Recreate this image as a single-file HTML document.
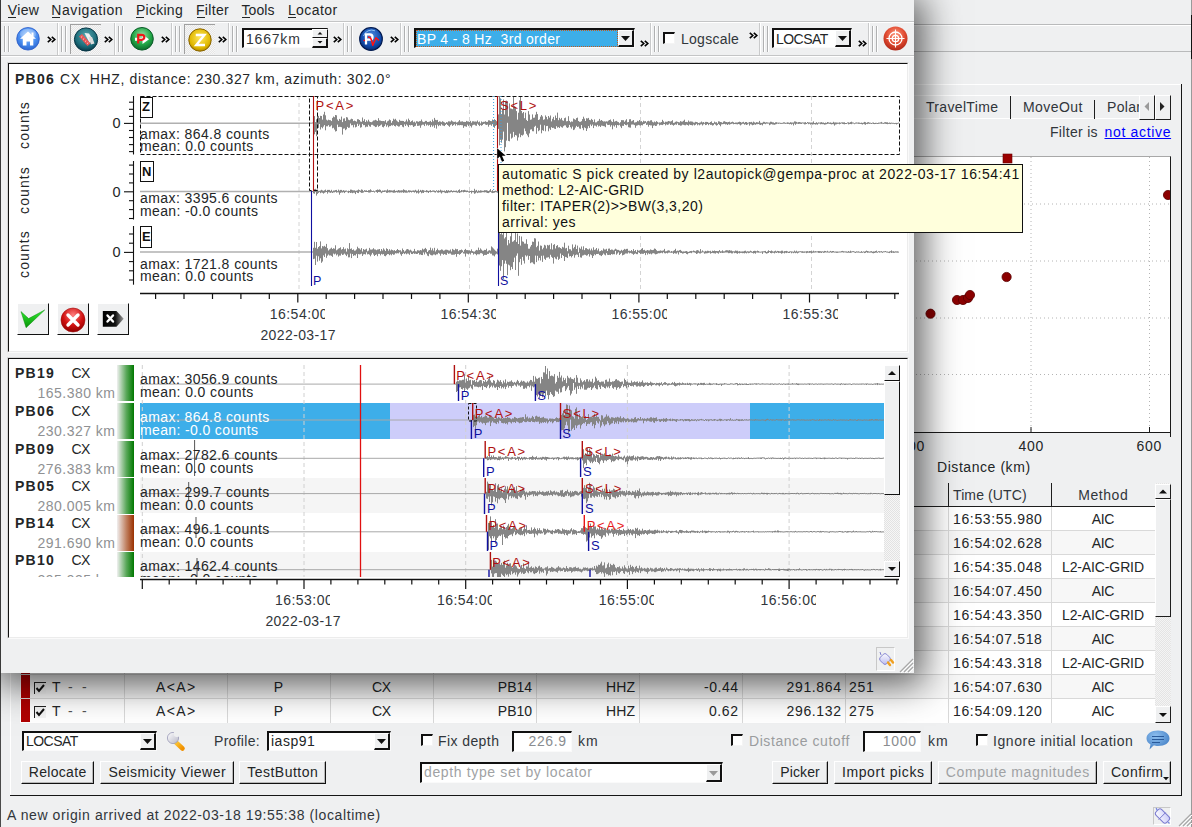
<!DOCTYPE html><html><head><meta charset="utf-8"><style>
html,body{margin:0;padding:0;}
body{width:1192px;height:827px;position:relative;overflow:hidden;background:#eff0f1;font-family:"Liberation Sans",sans-serif;}
.a{position:absolute;box-sizing:border-box;}
.t{position:absolute;white-space:pre;line-height:normal;}
svg{position:absolute;overflow:visible;}
</style></head><body>

<div class="a" style="left:914px;top:24px;width:278px;height:1px;background:#b9babb;"></div>
<div class="a" style="left:914px;top:25px;width:278px;height:1px;background:#ffffff;"></div>
<div class="a" style="left:914px;top:51px;width:278px;height:1px;background:#b9babb;"></div>
<div class="a" style="left:1191px;top:15px;width:1px;height:44px;background:#111;"></div>
<div class="a" style="left:1191px;top:0px;width:1px;height:827px;background:#9a9a9a;"></div>
<div class="a" style="left:1191px;top:15px;width:1px;height:44px;background:#111;"></div>
<div class="a" style="left:10px;top:84px;width:1172px;height:1px;background:#ffffff;"></div>
<div class="a" style="left:10px;top:84px;width:1px;height:712px;background:#ffffff;"></div>
<div class="a" style="left:1181px;top:84px;width:1px;height:712px;background:#161616;"></div>
<div class="a" style="left:10px;top:795px;width:1172px;height:1px;background:#161616;"></div>
<div class="a" style="left:914px;top:95px;width:225px;height:1px;background:#ffffff;"></div>
<div class="a" style="left:914px;top:118px;width:225px;height:1px;background:#ffffff;"></div>
<div class="a" style="left:1010px;top:96px;width:1px;height:23px;background:#1e1e1e;"></div>
<div class="a" style="left:1094px;top:100px;width:1px;height:19px;background:#1e1e1e;"></div>
<div class="t" style="left:926px;top:99.33px;font-size:14px;color:#31363b;letter-spacing:0.328px;">TravelTime</div>
<div class="t" style="left:1023px;top:99.33px;font-size:14px;color:#31363b;letter-spacing:0.446px;">MoveOut</div>
<div class="a" style="left:1100px;top:96px;width:39px;height:22px;overflow:hidden;"><div class="t" style="left:7px;top:3.3px;font-size:14px;color:#31363b;letter-spacing:0.3px;">Polar</div></div>
<div class="a" style="left:1139px;top:95px;width:16px;height:25px;background:#eff0f1;border-right:1px solid #1e1e1e;border-bottom:1px solid #1e1e1e;border-top:1px solid #fff;border-left:1px solid #fff;"></div>
<div class="a" style="left:1155px;top:95px;width:16px;height:25px;background:#eff0f1;border-right:1px solid #1e1e1e;border-bottom:1px solid #1e1e1e;border-top:1px solid #fff;border-left:1px solid #fff;"></div>
<svg style="left:1139px;top:95px" width="32" height="25"><path d="M5.5 11.5 L10 7 L10 16 Z" fill="#9a9a9a"/><path d="M21 7 L25.5 11.5 L21 16 Z" fill="#222"/></svg>
<div class="t" style="left:1050px;top:124.33px;font-size:14px;color:#31363b;letter-spacing:0.31px;">Filter is</div>
<div class="t" style="left:1104.5px;top:124.33px;font-size:14px;color:#0000ff;letter-spacing:0.667px;text-decoration:underline;">not active</div>
<div class="a" style="left:20px;top:156px;width:1151px;height:277px;background:#fff;border-top:1px solid #a8a8a8;border-right:1px solid #1a1a1a;"></div>
<div class="a" style="left:20px;top:432px;width:1151px;height:1px;background:#1a1a1a;"></div>
<svg style="left:0;top:0" width="1192" height="827"><line x1="20" y1="204" x2="1170" y2="204" stroke="#b4b4b4" stroke-width="1" stroke-dasharray="1,3"/><line x1="20" y1="261" x2="1170" y2="261" stroke="#b4b4b4" stroke-width="1" stroke-dasharray="1,3"/><line x1="20" y1="318" x2="1170" y2="318" stroke="#b4b4b4" stroke-width="1" stroke-dasharray="1,3"/><line x1="20" y1="374.5" x2="1170" y2="374.5" stroke="#b4b4b4" stroke-width="1" stroke-dasharray="1,3"/><line x1="1031" y1="157" x2="1031" y2="432" stroke="#b4b4b4" stroke-width="1" stroke-dasharray="1,3"/><line x1="1031" y1="427" x2="1031" y2="432" stroke="#1a1a1a" stroke-width="1"/><line x1="1149.5" y1="157" x2="1149.5" y2="432" stroke="#b4b4b4" stroke-width="1" stroke-dasharray="1,3"/><line x1="1149.5" y1="427" x2="1149.5" y2="432" stroke="#1a1a1a" stroke-width="1"/><line x1="1170.5" y1="427" x2="1170.5" y2="437" stroke="#1a1a1a" stroke-width="1"/><defs><clipPath id="plotclip"><rect x="20" y="157" width="1150" height="275"/></clipPath></defs><g clip-path="url(#plotclip)"><circle cx="930.5" cy="313.7" r="4.6" fill="#8b0000" stroke="#5a0000" stroke-width="0.8"/><circle cx="957" cy="300" r="4.6" fill="#8b0000" stroke="#5a0000" stroke-width="0.8"/><circle cx="963" cy="300" r="4.6" fill="#8b0000" stroke="#5a0000" stroke-width="0.8"/><circle cx="968" cy="298" r="4.6" fill="#8b0000" stroke="#5a0000" stroke-width="0.8"/><circle cx="970" cy="295" r="4.6" fill="#8b0000" stroke="#5a0000" stroke-width="0.8"/><circle cx="1006.6" cy="277" r="4.6" fill="#8b0000" stroke="#5a0000" stroke-width="0.8"/><circle cx="1168" cy="195" r="4.6" fill="#8b0000" stroke="#5a0000" stroke-width="0.8"/></g><rect x="1003" y="154" width="9" height="9" fill="#9b0000" stroke="#6a0000" stroke-width="0.6"/></svg>
<div class="t" style="left:1031px;top:438.33px;font-size:14px;color:#232627;letter-spacing:0.696px;transform:translateX(calc(-50% + 0.348px));">400</div>
<div class="t" style="left:1149px;top:438.33px;font-size:14px;color:#232627;letter-spacing:0.696px;transform:translateX(calc(-50% + 0.348px));">600</div>
<div class="t" style="left:912px;top:438.33px;font-size:14px;color:#232627;letter-spacing:0.696px;transform:translateX(calc(-50% + 0.348px));">200</div>
<div class="t" style="left:937px;top:459.33px;font-size:14px;color:#232627;letter-spacing:0.56px;">Distance (km)</div>
<div class="a" style="left:20px;top:483px;width:1135px;height:24px;background:#eff0f1;border-bottom:1px solid #1e1e1e;"></div>
<div class="a" style="left:948px;top:483px;width:1px;height:24px;background:#1e1e1e;"></div>
<div class="a" style="left:1051px;top:483px;width:1px;height:24px;background:#1e1e1e;"></div>
<div class="t" style="left:953px;top:487.33px;font-size:14px;color:#31363b;letter-spacing:0.111px;">Time (UTC)</div>
<div class="t" style="left:1103px;top:487.33px;font-size:14px;color:#31363b;letter-spacing:0.551px;transform:translateX(calc(-50% + 0.2755px));">Method</div>
<div class="a" style="left:20px;top:507px;width:1135px;height:24px;background:#ffffff;"></div>
<div class="a" style="left:20px;top:531px;width:1135px;height:24px;background:#f7f7f7;"></div>
<div class="a" style="left:20px;top:555px;width:1135px;height:24px;background:#ffffff;"></div>
<div class="a" style="left:20px;top:579px;width:1135px;height:24px;background:#f7f7f7;"></div>
<div class="a" style="left:20px;top:603px;width:1135px;height:24px;background:#ffffff;"></div>
<div class="a" style="left:20px;top:627px;width:1135px;height:24px;background:#f7f7f7;"></div>
<div class="a" style="left:20px;top:651px;width:1135px;height:24px;background:#ffffff;"></div>
<div class="a" style="left:20px;top:675px;width:1135px;height:24px;background:#f7f7f7;"></div>
<div class="a" style="left:20px;top:699px;width:1135px;height:16px;background:#ffffff;"></div>
<div class="a" style="left:20px;top:530px;width:1135px;height:1px;background:#d9d9d9;"></div>
<div class="t" style="left:953px;top:511.33px;font-size:14px;color:#232627;letter-spacing:0.651px;">16:53:55.980</div>
<div class="t" style="left:1103px;top:511.33px;font-size:14px;color:#232627;letter-spacing:-0.326px;transform:translateX(calc(-50% + -0.163px));">AIC</div>
<div class="a" style="left:20px;top:554px;width:1135px;height:1px;background:#d9d9d9;"></div>
<div class="t" style="left:953px;top:535.33px;font-size:14px;color:#232627;letter-spacing:0.651px;">16:54:02.628</div>
<div class="t" style="left:1103px;top:535.33px;font-size:14px;color:#232627;letter-spacing:-0.326px;transform:translateX(calc(-50% + -0.163px));">AIC</div>
<div class="a" style="left:20px;top:578px;width:1135px;height:1px;background:#d9d9d9;"></div>
<div class="t" style="left:953px;top:559.33px;font-size:14px;color:#232627;letter-spacing:0.651px;">16:54:35.048</div>
<div class="t" style="left:1103px;top:559.33px;font-size:14px;color:#232627;letter-spacing:-0.124px;transform:translateX(calc(-50% + -0.062px));">L2-AIC-GRID</div>
<div class="a" style="left:20px;top:602px;width:1135px;height:1px;background:#d9d9d9;"></div>
<div class="t" style="left:953px;top:583.33px;font-size:14px;color:#232627;letter-spacing:0.651px;">16:54:07.450</div>
<div class="t" style="left:1103px;top:583.33px;font-size:14px;color:#232627;letter-spacing:-0.326px;transform:translateX(calc(-50% + -0.163px));">AIC</div>
<div class="a" style="left:20px;top:626px;width:1135px;height:1px;background:#d9d9d9;"></div>
<div class="t" style="left:953px;top:607.33px;font-size:14px;color:#232627;letter-spacing:0.651px;">16:54:43.350</div>
<div class="t" style="left:1103px;top:607.33px;font-size:14px;color:#232627;letter-spacing:-0.124px;transform:translateX(calc(-50% + -0.062px));">L2-AIC-GRID</div>
<div class="a" style="left:20px;top:650px;width:1135px;height:1px;background:#d9d9d9;"></div>
<div class="t" style="left:953px;top:631.33px;font-size:14px;color:#232627;letter-spacing:0.651px;">16:54:07.518</div>
<div class="t" style="left:1103px;top:631.33px;font-size:14px;color:#232627;letter-spacing:-0.326px;transform:translateX(calc(-50% + -0.163px));">AIC</div>
<div class="a" style="left:20px;top:674px;width:1135px;height:1px;background:#d9d9d9;"></div>
<div class="t" style="left:953px;top:655.33px;font-size:14px;color:#232627;letter-spacing:0.651px;">16:54:43.318</div>
<div class="t" style="left:1103px;top:655.33px;font-size:14px;color:#232627;letter-spacing:-0.124px;transform:translateX(calc(-50% + -0.062px));">L2-AIC-GRID</div>
<div class="a" style="left:20px;top:698px;width:1135px;height:1px;background:#d9d9d9;"></div>
<div class="t" style="left:953px;top:679.33px;font-size:14px;color:#232627;letter-spacing:0.651px;">16:54:07.630</div>
<div class="t" style="left:1103px;top:679.33px;font-size:14px;color:#232627;letter-spacing:-0.326px;transform:translateX(calc(-50% + -0.163px));">AIC</div>
<div class="t" style="left:953px;top:703.33px;font-size:14px;color:#232627;letter-spacing:0.651px;">16:54:09.120</div>
<div class="t" style="left:1103px;top:703.33px;font-size:14px;color:#232627;letter-spacing:-0.326px;transform:translateX(calc(-50% + -0.163px));">AIC</div>
<div class="a" style="left:20px;top:699px;width:1135px;height:24px;background:#ffffff;"></div>
<div class="t" style="left:953px;top:703.33px;font-size:14px;color:#232627;letter-spacing:0.651px;">16:54:09.120</div>
<div class="t" style="left:1103px;top:703.33px;font-size:14px;color:#232627;letter-spacing:-0.326px;transform:translateX(calc(-50% + -0.163px));">AIC</div>
<div class="a" style="left:124px;top:507px;width:1px;height:216px;background:#d9d9d9;"></div>
<div class="a" style="left:227px;top:507px;width:1px;height:216px;background:#d9d9d9;"></div>
<div class="a" style="left:330px;top:507px;width:1px;height:216px;background:#d9d9d9;"></div>
<div class="a" style="left:433px;top:507px;width:1px;height:216px;background:#d9d9d9;"></div>
<div class="a" style="left:536px;top:507px;width:1px;height:216px;background:#d9d9d9;"></div>
<div class="a" style="left:639px;top:507px;width:1px;height:216px;background:#d9d9d9;"></div>
<div class="a" style="left:742px;top:507px;width:1px;height:216px;background:#d9d9d9;"></div>
<div class="a" style="left:845px;top:507px;width:1px;height:216px;background:#d9d9d9;"></div>
<div class="a" style="left:948px;top:507px;width:1px;height:216px;background:#d9d9d9;"></div>
<div class="a" style="left:1051px;top:507px;width:1px;height:216px;background:#d9d9d9;"></div>
<div class="a" style="left:21px;top:651px;width:9px;height:23px;background:#b00000;"></div>
<div class="a" style="left:21px;top:675px;width:9px;height:23px;background:#b00000;"></div>
<div class="a" style="left:34px;top:682px;width:12px;height:12px;background:#f4f4f4;border-top:1px solid #222;border-left:1px solid #222;"></div>
<svg style="left:34px;top:682px" width="12" height="12"><path d="M2.5 6 L5 9 L10 3" stroke="#111" stroke-width="2" fill="none"/></svg>
<div class="t" style="left:52px;top:679.33px;font-size:14px;color:#232627;letter-spacing:0px;">T</div>
<div class="t" style="left:68px;top:679.33px;font-size:14px;color:#555;letter-spacing:0px;">-</div>
<div class="t" style="left:82px;top:679.33px;font-size:14px;color:#555;letter-spacing:0px;">-</div>
<div class="t" style="left:175.5px;top:679.33px;font-size:14px;color:#232627;letter-spacing:1.387px;transform:translateX(calc(-50% + 0.6935px));">A&lt;A&gt;</div>
<div class="t" style="left:278.5px;top:679.33px;font-size:14px;color:#232627;letter-spacing:0px;transform:translateX(calc(-50% + 0.0px));">P</div>
<div class="t" style="left:381.5px;top:679.33px;font-size:14px;color:#232627;letter-spacing:-0.505px;transform:translateX(calc(-50% + -0.2525px));">CX</div>
<div class="t" style="right:660.025px;top:679.33px;font-size:14px;color:#232627;letter-spacing:-0.025px;">PB14</div>
<div class="t" style="right:556.864px;top:679.33px;font-size:14px;color:#232627;letter-spacing:0.136px;">HHZ</div>
<div class="t" style="right:453.484px;top:679.33px;font-size:14px;color:#232627;letter-spacing:0.516px;">-0.44</div>
<div class="t" style="right:350.354px;top:679.33px;font-size:14px;color:#232627;letter-spacing:0.646px;">291.864</div>
<div class="t" style="left:849px;top:679.33px;font-size:14px;color:#232627;letter-spacing:0.696px;">251</div>
<div class="a" style="left:21px;top:699px;width:9px;height:23px;background:#b00000;"></div>
<div class="a" style="left:34px;top:706px;width:12px;height:12px;background:#f4f4f4;border-top:1px solid #222;border-left:1px solid #222;"></div>
<svg style="left:34px;top:706px" width="12" height="12"><path d="M2.5 6 L5 9 L10 3" stroke="#111" stroke-width="2" fill="none"/></svg>
<div class="t" style="left:52px;top:703.33px;font-size:14px;color:#232627;letter-spacing:0px;">T</div>
<div class="t" style="left:68px;top:703.33px;font-size:14px;color:#555;letter-spacing:0px;">-</div>
<div class="t" style="left:82px;top:703.33px;font-size:14px;color:#555;letter-spacing:0px;">-</div>
<div class="t" style="left:175.5px;top:703.33px;font-size:14px;color:#232627;letter-spacing:1.387px;transform:translateX(calc(-50% + 0.6935px));">A&lt;A&gt;</div>
<div class="t" style="left:278.5px;top:703.33px;font-size:14px;color:#232627;letter-spacing:0px;transform:translateX(calc(-50% + 0.0px));">P</div>
<div class="t" style="left:381.5px;top:703.33px;font-size:14px;color:#232627;letter-spacing:-0.505px;transform:translateX(calc(-50% + -0.2525px));">CX</div>
<div class="t" style="right:660.025px;top:703.33px;font-size:14px;color:#232627;letter-spacing:-0.025px;">PB10</div>
<div class="t" style="right:556.864px;top:703.33px;font-size:14px;color:#232627;letter-spacing:0.136px;">HHZ</div>
<div class="t" style="right:453.391px;top:703.33px;font-size:14px;color:#232627;letter-spacing:0.609px;">0.62</div>
<div class="t" style="right:350.354px;top:703.33px;font-size:14px;color:#232627;letter-spacing:0.646px;">296.132</div>
<div class="t" style="left:849px;top:703.33px;font-size:14px;color:#232627;letter-spacing:0.696px;">275</div>
<div class="a" style="left:1155px;top:483px;width:16px;height:240px;background:repeating-conic-gradient(#e4e4e4 0% 25%, #f4f4f4 0% 50%) 0 0/2px 2px;"></div>
<div class="a" style="left:1155px;top:484px;width:16px;height:15px;background:#eff0f1;border-right:1px solid #1e1e1e;border-bottom:1px solid #1e1e1e;border-top:1px solid #fff;border-left:1px solid #fff;"></div>
<div class="a" style="left:1155px;top:499px;width:16px;height:118px;background:#eff0f1;border-right:1px solid #1e1e1e;border-bottom:1px solid #1e1e1e;border-top:1px solid #fff;border-left:1px solid #fff;"></div>
<div class="a" style="left:1155px;top:706px;width:16px;height:17px;background:#eff0f1;border-right:1px solid #1e1e1e;border-bottom:1px solid #1e1e1e;border-top:1px solid #fff;border-left:1px solid #fff;"></div>
<svg style="left:1155px;top:484px" width="16" height="15"><path d="M4 9.5 L8 5.5 L12 9.5 Z" fill="#111"/></svg>
<svg style="left:1155px;top:706px" width="16" height="17"><path d="M4 7 L8 11 L12 7 Z" fill="#111"/></svg>
<div class="a" style="left:22px;top:731px;width:135px;height:20px;background:#fff;border-top:2px solid #111;border-left:2px solid #111;border-right:1px solid #fafafa;border-bottom:1px solid #fafafa;"></div>
<div class="a" style="left:140px;top:733px;width:16px;height:17px;background:#eff0f1;border-top:1px solid #fff;border-left:1px solid #fff;border-right:2px solid #111;border-bottom:2px solid #111;"></div>
<svg style="left:142.5px;top:739.0px" width="9" height="6"><path d="M0 0 L9 0 L4.5 5.0 Z" fill="#111"/></svg>
<div class="t" style="left:26px;top:733.33px;font-size:14px;color:#232627;letter-spacing:-0.547px;">LOCSAT</div>
<svg style="left:164px;top:730px" width="24" height="22" viewBox="0 0 24 22">
<defs><linearGradient id="gwr" x1="0" y1="0" x2="1" y2="1"><stop offset="0" stop-color="#ffffff"/><stop offset="1" stop-color="#b8b8c8"/></linearGradient>
<linearGradient id="gor" x1="0" y1="0" x2="1" y2="1"><stop offset="0" stop-color="#ffd040"/><stop offset="1" stop-color="#f09000"/></linearGradient></defs>
<path d="M11 11.5 L18.5 18.5" stroke="url(#gor)" stroke-width="4.6" stroke-linecap="round"/>
<circle cx="9" cy="8" r="5.6" fill="url(#gwr)" stroke="#9a9ab8" stroke-width="0.8"/>
<circle cx="13" cy="3.8" r="3.3" fill="#eff0f1"/>
</svg>
<div class="t" style="left:214px;top:733.33px;font-size:14px;color:#31363b;letter-spacing:0.296px;">Profile:</div>
<div class="a" style="left:267px;top:731px;width:124px;height:20px;background:#fff;border-top:2px solid #111;border-left:2px solid #111;border-right:1px solid #fafafa;border-bottom:1px solid #fafafa;"></div>
<div class="a" style="left:374px;top:733px;width:16px;height:17px;background:#eff0f1;border-top:1px solid #fff;border-left:1px solid #fff;border-right:2px solid #111;border-bottom:2px solid #111;"></div>
<svg style="left:376.5px;top:739.0px" width="9" height="6"><path d="M0 0 L9 0 L4.5 5.0 Z" fill="#111"/></svg>
<div class="t" style="left:271px;top:733.33px;font-size:14px;color:#232627;letter-spacing:0.498px;">iasp91</div>
<div class="a" style="left:421px;top:734px;width:12px;height:12px;background:#fff;border-top:2px solid #111;border-left:2px solid #111;border-right:1px solid #f4f4f4;border-bottom:1px solid #f4f4f4;"></div>
<div class="t" style="left:438px;top:733.33px;font-size:14px;color:#31363b;letter-spacing:0.416px;">Fix depth</div>
<div class="a" style="left:512px;top:731px;width:60px;height:21px;background:#fff;border-top:2px solid #111;border-left:2px solid #111;border-right:1px solid #fafafa;border-bottom:1px solid #fafafa;"></div>
<div class="t" style="right:625.374px;top:733.33px;font-size:14px;color:#8a8d90;letter-spacing:0.626px;">226.9</div>
<div class="t" style="left:578px;top:733.33px;font-size:14px;color:#31363b;letter-spacing:1.021px;">km</div>
<div class="a" style="left:731px;top:734px;width:12px;height:12px;background:#fff;border-top:2px solid #111;border-left:2px solid #111;border-right:1px solid #f4f4f4;border-bottom:1px solid #f4f4f4;"></div>
<div class="t" style="left:749px;top:733.33px;font-size:14px;color:#9a9c9e;letter-spacing:0.568px;">Distance cutoff</div>
<div class="a" style="left:863px;top:731px;width:58px;height:21px;background:#fff;border-top:2px solid #111;border-left:2px solid #111;border-right:1px solid #fafafa;border-bottom:1px solid #fafafa;"></div>
<div class="t" style="right:275.304px;top:733.33px;font-size:14px;color:#8a8d90;letter-spacing:0.696px;">1000</div>
<div class="t" style="left:928px;top:733.33px;font-size:14px;color:#31363b;letter-spacing:1.021px;">km</div>
<div class="a" style="left:976px;top:734px;width:12px;height:12px;background:#fff;border-top:2px solid #111;border-left:2px solid #111;border-right:1px solid #f4f4f4;border-bottom:1px solid #f4f4f4;"></div>
<div class="t" style="left:993px;top:733.33px;font-size:14px;color:#31363b;letter-spacing:0.556px;">Ignore initial location</div>
<svg style="left:1145px;top:729px" width="26" height="22" viewBox="0 0 26 22">
<defs><radialGradient id="cb" cx="0.4" cy="0.3" r="0.8"><stop offset="0" stop-color="#8fc0f0"/><stop offset="1" stop-color="#3a78c0"/></radialGradient></defs>
<path d="M13 1.5 C20 1.5 24.5 5 24.5 9.5 C24.5 14 20 17 13 17 C11 17 10 16.8 8.5 16.5 L4.5 20.5 L5.5 15.5 C3 14 1.5 12 1.5 9.5 C1.5 5 6 1.5 13 1.5 Z" fill="url(#cb)"/>
<path d="M7 7.5 H19 M7 10.5 H19 M7 13.5 H15" stroke="#2a5a9a" stroke-width="1.2"/>
</svg>
<div class="a" style="left:420px;top:762px;width:303px;height:21px;background:#fff;border-top:2px solid #111;border-left:2px solid #111;border-right:1px solid #fafafa;border-bottom:1px solid #fafafa;"></div>
<div class="a" style="left:706px;top:764px;width:16px;height:18px;background:#eff0f1;border-top:1px solid #fff;border-left:1px solid #fff;border-right:2px solid #111;border-bottom:2px solid #111;"></div>
<svg style="left:708.5px;top:770.5px" width="9" height="6"><path d="M0 0 L9 0 L4.5 5.0 Z" fill="#9a9a9a"/></svg>
<div class="t" style="left:424px;top:764.33px;font-size:14px;color:#a0a2a4;letter-spacing:0.638px;">depth type set by locator</div>
<div class="a" style="left:21px;top:761px;width:73px;height:23px;background:#eff0f1;border-top:1px solid #fff;border-left:1px solid #fff;border-right:1px solid #111;border-bottom:1px solid #111;box-shadow:inset -1px -1px 0 #b8b8b8;"></div>
<div class="t" style="left:57.5px;top:764.33px;font-size:14px;color:#232627;letter-spacing:0.3px;transform:translateX(calc(-50% + 0.15px));">Relocate</div>
<div class="a" style="left:100px;top:761px;width:134px;height:23px;background:#eff0f1;border-top:1px solid #fff;border-left:1px solid #fff;border-right:1px solid #111;border-bottom:1px solid #111;box-shadow:inset -1px -1px 0 #b8b8b8;"></div>
<div class="t" style="left:167.0px;top:764.33px;font-size:14px;color:#232627;letter-spacing:0.486px;transform:translateX(calc(-50% + 0.243px));">Seismicity Viewer</div>
<div class="a" style="left:239px;top:761px;width:87px;height:23px;background:#eff0f1;border-top:1px solid #fff;border-left:1px solid #fff;border-right:1px solid #111;border-bottom:1px solid #111;box-shadow:inset -1px -1px 0 #b8b8b8;"></div>
<div class="t" style="left:282.5px;top:764.33px;font-size:14px;color:#232627;letter-spacing:0.475px;transform:translateX(calc(-50% + 0.2375px));">TestButton</div>
<div class="a" style="left:772px;top:761px;width:56px;height:23px;background:#eff0f1;border-top:1px solid #fff;border-left:1px solid #fff;border-right:1px solid #111;border-bottom:1px solid #111;box-shadow:inset -1px -1px 0 #b8b8b8;"></div>
<div class="t" style="left:800.0px;top:764.33px;font-size:14px;color:#232627;letter-spacing:0.134px;transform:translateX(calc(-50% + 0.067px));">Picker</div>
<div class="a" style="left:834px;top:761px;width:98px;height:23px;background:#eff0f1;border-top:1px solid #fff;border-left:1px solid #fff;border-right:1px solid #111;border-bottom:1px solid #111;box-shadow:inset -1px -1px 0 #b8b8b8;"></div>
<div class="t" style="left:883.0px;top:764.33px;font-size:14px;color:#232627;letter-spacing:0.598px;transform:translateX(calc(-50% + 0.299px));">Import picks</div>
<div class="a" style="left:938px;top:761px;width:159px;height:23px;background:#eff0f1;border-top:1px solid #fff;border-left:1px solid #fff;border-right:1px solid #111;border-bottom:1px solid #111;box-shadow:inset -1px -1px 0 #b8b8b8;"></div>
<div class="t" style="left:1017.5px;top:764.33px;font-size:14px;color:#a0a2a4;letter-spacing:0.611px;transform:translateX(calc(-50% + 0.3055px));">Compute magnitudes</div>
<div class="a" style="left:1103px;top:761px;width:68px;height:23px;background:#eff0f1;border-top:1px solid #fff;border-left:1px solid #fff;border-right:1px solid #111;border-bottom:1px solid #111;box-shadow:inset -1px -1px 0 #b8b8b8;"></div>
<div class="t" style="left:1137.0px;top:764.33px;font-size:14px;color:#232627;letter-spacing:0.505px;transform:translateX(calc(-50% + 0.2525px));">Confirm</div>
<svg style="left:1163px;top:777px" width="6" height="4"><path d="M0 0 L6 0 L3 3.2 Z" fill="#111"/></svg>
<div class="t" style="left:7px;top:807.33px;font-size:14px;color:#31363b;letter-spacing:0.598px;">A new origin arrived at 2022-03-18 19:55:38 (localtime)</div>
<div class="a" style="left:1153px;top:807px;width:18px;height:18px;border:1px solid #c8c8c8;border-right-color:#fff;border-bottom-color:#fff;"></div>
<svg style="left:1153px;top:807px" width="18" height="18" viewBox="0 0 18 18">
<defs><linearGradient id="gplug2" x1="0" y1="0" x2="1" y2="1"><stop offset="0" stop-color="#fff"/><stop offset="1" stop-color="#c8c8f8"/></linearGradient></defs>
<rect x="5.5" y="1.5" width="8" height="15" rx="2.5" transform="rotate(-45 9.5 9)" fill="url(#gplug2)" stroke="#7a7ad0" stroke-width="1"/>
<path d="M5.6 12.6 L12.6 5.6" stroke="#7a7ad0" stroke-width="1"/>
<path d="M3.2 1 L4.2 3.5 M15 15 L16.5 16.5" stroke="#7a8ae0" stroke-width="1.3"/></svg>
<svg style="left:1176px;top:811px" width="16" height="16"><path d="M15 3 L3 15 M15 7 L7 15 M15 11 L11 15" stroke="#a8a8a8" stroke-width="1.2"/><path d="M16 4 L4 16 M16 8 L8 16 M16 12 L12 16" stroke="#fff" stroke-width="1"/></svg>
<div class="a" style="left:0px;top:673px;width:1px;height:154px;background:#4a4a4a;"></div>
<div class="a" style="left:-2px;top:-2px;width:916px;height:675px;box-shadow:4px 6px 34px 6px rgba(0,0,0,0.62);background:#eff0f1;"></div>
<div class="a" style="left:0px;top:0px;width:914px;height:673px;background:#eff0f1;"></div>
<div class="a" style="left:0px;top:0px;width:1px;height:673px;background:#3a3a3a;"></div>
<div class="t" style="left:7.7px;top:2.33px;font-size:14px;color:#232627;letter-spacing:0.385px;">View</div>
<div class="a" style="left:8.2px;top:17px;width:8px;height:1px;background:#232627;"></div>
<div class="t" style="left:51.3px;top:2.33px;font-size:14px;color:#232627;letter-spacing:0.575px;">Navigation</div>
<div class="a" style="left:51.8px;top:17px;width:8px;height:1px;background:#232627;"></div>
<div class="t" style="left:135.9px;top:2.33px;font-size:14px;color:#232627;letter-spacing:0.283px;">Picking</div>
<div class="a" style="left:136.4px;top:17px;width:8px;height:1px;background:#232627;"></div>
<div class="t" style="left:196px;top:2.33px;font-size:14px;color:#232627;letter-spacing:0.317px;">Filter</div>
<div class="a" style="left:196.5px;top:17px;width:8px;height:1px;background:#232627;"></div>
<div class="t" style="left:241.6px;top:2.33px;font-size:14px;color:#232627;letter-spacing:0.031px;">Tools</div>
<div class="a" style="left:242.1px;top:17px;width:8px;height:1px;background:#232627;"></div>
<div class="t" style="left:287.9px;top:2.33px;font-size:14px;color:#232627;letter-spacing:0.431px;">Locator</div>
<div class="a" style="left:288.4px;top:17px;width:8px;height:1px;background:#232627;"></div>
<div class="a" style="left:1px;top:21px;width:913px;height:1px;background:#c4c5c6;"></div>
<div class="a" style="left:1px;top:22px;width:913px;height:1px;background:#ffffff;"></div>
<div class="a" style="left:1px;top:55px;width:913px;height:1px;background:#c4c5c6;"></div>
<div class="a" style="left:1px;top:56px;width:913px;height:1px;background:#ffffff;"></div>
<div class="a" style="left:57px;top:23px;width:1px;height:32px;background:#c9cacb;"></div>
<div class="a" style="left:58px;top:23px;width:1px;height:32px;background:#ffffff;"></div>
<div class="a" style="left:114px;top:23px;width:1px;height:32px;background:#c9cacb;"></div>
<div class="a" style="left:115px;top:23px;width:1px;height:32px;background:#ffffff;"></div>
<div class="a" style="left:171px;top:23px;width:1px;height:32px;background:#c9cacb;"></div>
<div class="a" style="left:172px;top:23px;width:1px;height:32px;background:#ffffff;"></div>
<div class="a" style="left:228px;top:23px;width:1px;height:32px;background:#c9cacb;"></div>
<div class="a" style="left:229px;top:23px;width:1px;height:32px;background:#ffffff;"></div>
<div class="a" style="left:343px;top:23px;width:1px;height:32px;background:#c9cacb;"></div>
<div class="a" style="left:344px;top:23px;width:1px;height:32px;background:#ffffff;"></div>
<div class="a" style="left:400px;top:23px;width:1px;height:32px;background:#c9cacb;"></div>
<div class="a" style="left:401px;top:23px;width:1px;height:32px;background:#ffffff;"></div>
<div class="a" style="left:650px;top:23px;width:1px;height:32px;background:#c9cacb;"></div>
<div class="a" style="left:651px;top:23px;width:1px;height:32px;background:#ffffff;"></div>
<div class="a" style="left:759px;top:23px;width:1px;height:32px;background:#c9cacb;"></div>
<div class="a" style="left:760px;top:23px;width:1px;height:32px;background:#ffffff;"></div>
<div class="a" style="left:868px;top:23px;width:1px;height:32px;background:#c9cacb;"></div>
<div class="a" style="left:869px;top:23px;width:1px;height:32px;background:#ffffff;"></div>
<div class="a" style="left:4px;top:26px;width:1px;height:26px;background:#b0b1b2;"></div>
<div class="a" style="left:5px;top:26px;width:1px;height:26px;background:#ffffff;"></div>
<div class="a" style="left:8px;top:26px;width:1px;height:26px;background:#b0b1b2;"></div>
<div class="a" style="left:9px;top:26px;width:1px;height:26px;background:#ffffff;"></div>
<div class="a" style="left:61px;top:26px;width:1px;height:26px;background:#b0b1b2;"></div>
<div class="a" style="left:62px;top:26px;width:1px;height:26px;background:#ffffff;"></div>
<div class="a" style="left:65px;top:26px;width:1px;height:26px;background:#b0b1b2;"></div>
<div class="a" style="left:66px;top:26px;width:1px;height:26px;background:#ffffff;"></div>
<div class="a" style="left:118px;top:26px;width:1px;height:26px;background:#b0b1b2;"></div>
<div class="a" style="left:119px;top:26px;width:1px;height:26px;background:#ffffff;"></div>
<div class="a" style="left:122px;top:26px;width:1px;height:26px;background:#b0b1b2;"></div>
<div class="a" style="left:123px;top:26px;width:1px;height:26px;background:#ffffff;"></div>
<div class="a" style="left:175px;top:26px;width:1px;height:26px;background:#b0b1b2;"></div>
<div class="a" style="left:176px;top:26px;width:1px;height:26px;background:#ffffff;"></div>
<div class="a" style="left:179px;top:26px;width:1px;height:26px;background:#b0b1b2;"></div>
<div class="a" style="left:180px;top:26px;width:1px;height:26px;background:#ffffff;"></div>
<div class="a" style="left:232px;top:26px;width:1px;height:26px;background:#b0b1b2;"></div>
<div class="a" style="left:233px;top:26px;width:1px;height:26px;background:#ffffff;"></div>
<div class="a" style="left:236px;top:26px;width:1px;height:26px;background:#b0b1b2;"></div>
<div class="a" style="left:237px;top:26px;width:1px;height:26px;background:#ffffff;"></div>
<div class="a" style="left:347px;top:26px;width:1px;height:26px;background:#b0b1b2;"></div>
<div class="a" style="left:348px;top:26px;width:1px;height:26px;background:#ffffff;"></div>
<div class="a" style="left:351px;top:26px;width:1px;height:26px;background:#b0b1b2;"></div>
<div class="a" style="left:352px;top:26px;width:1px;height:26px;background:#ffffff;"></div>
<div class="a" style="left:404px;top:26px;width:1px;height:26px;background:#b0b1b2;"></div>
<div class="a" style="left:405px;top:26px;width:1px;height:26px;background:#ffffff;"></div>
<div class="a" style="left:408px;top:26px;width:1px;height:26px;background:#b0b1b2;"></div>
<div class="a" style="left:409px;top:26px;width:1px;height:26px;background:#ffffff;"></div>
<div class="a" style="left:654px;top:26px;width:1px;height:26px;background:#b0b1b2;"></div>
<div class="a" style="left:655px;top:26px;width:1px;height:26px;background:#ffffff;"></div>
<div class="a" style="left:658px;top:26px;width:1px;height:26px;background:#b0b1b2;"></div>
<div class="a" style="left:659px;top:26px;width:1px;height:26px;background:#ffffff;"></div>
<div class="a" style="left:763px;top:26px;width:1px;height:26px;background:#b0b1b2;"></div>
<div class="a" style="left:764px;top:26px;width:1px;height:26px;background:#ffffff;"></div>
<div class="a" style="left:767px;top:26px;width:1px;height:26px;background:#b0b1b2;"></div>
<div class="a" style="left:768px;top:26px;width:1px;height:26px;background:#ffffff;"></div>
<div class="a" style="left:872px;top:26px;width:1px;height:26px;background:#b0b1b2;"></div>
<div class="a" style="left:873px;top:26px;width:1px;height:26px;background:#ffffff;"></div>
<div class="a" style="left:876px;top:26px;width:1px;height:26px;background:#b0b1b2;"></div>
<div class="a" style="left:877px;top:26px;width:1px;height:26px;background:#ffffff;"></div>
<svg style="left:47px;top:36px" width="9" height="7"><path d="M0.8 0.8 L3.8 3.5 L0.8 6.2 M4.8 0.8 L7.8 3.5 L4.8 6.2" stroke="#000" stroke-width="1.6" fill="none"/></svg>
<svg style="left:104px;top:36px" width="9" height="7"><path d="M0.8 0.8 L3.8 3.5 L0.8 6.2 M4.8 0.8 L7.8 3.5 L4.8 6.2" stroke="#000" stroke-width="1.6" fill="none"/></svg>
<svg style="left:161px;top:36px" width="9" height="7"><path d="M0.8 0.8 L3.8 3.5 L0.8 6.2 M4.8 0.8 L7.8 3.5 L4.8 6.2" stroke="#000" stroke-width="1.6" fill="none"/></svg>
<svg style="left:218px;top:36px" width="9" height="7"><path d="M0.8 0.8 L3.8 3.5 L0.8 6.2 M4.8 0.8 L7.8 3.5 L4.8 6.2" stroke="#000" stroke-width="1.6" fill="none"/></svg>
<svg style="left:333px;top:36px" width="9" height="7"><path d="M0.8 0.8 L3.8 3.5 L0.8 6.2 M4.8 0.8 L7.8 3.5 L4.8 6.2" stroke="#000" stroke-width="1.6" fill="none"/></svg>
<svg style="left:390px;top:36px" width="9" height="7"><path d="M0.8 0.8 L3.8 3.5 L0.8 6.2 M4.8 0.8 L7.8 3.5 L4.8 6.2" stroke="#000" stroke-width="1.6" fill="none"/></svg>
<svg style="left:639.5px;top:40px" width="9" height="7"><path d="M0.8 0.8 L3.8 3.5 L0.8 6.2 M4.8 0.8 L7.8 3.5 L4.8 6.2" stroke="#000" stroke-width="1.6" fill="none"/></svg>
<svg style="left:749px;top:32px" width="9" height="7"><path d="M0.8 0.8 L3.8 3.5 L0.8 6.2 M4.8 0.8 L7.8 3.5 L4.8 6.2" stroke="#000" stroke-width="1.6" fill="none"/></svg>
<svg style="left:858px;top:40px" width="9" height="7"><path d="M0.8 0.8 L3.8 3.5 L0.8 6.2 M4.8 0.8 L7.8 3.5 L4.8 6.2" stroke="#000" stroke-width="1.6" fill="none"/></svg>
<div class="a" style="left:70px;top:24px;width:31px;height:30px;background:repeating-conic-gradient(#e6e6e6 0% 25%, #f6f6f6 0% 50%) 0 0/2px 2px;border-top:1px solid #a0a0a0;border-left:1px solid #a0a0a0;"></div>
<div class="a" style="left:184px;top:24px;width:31px;height:30px;background:repeating-conic-gradient(#e6e6e6 0% 25%, #f6f6f6 0% 50%) 0 0/2px 2px;border-top:1px solid #a0a0a0;border-left:1px solid #a0a0a0;"></div>
<svg style="left:0;top:0" width="0" height="0"><defs>
<radialGradient id="gblue" cx="0.5" cy="0.35" r="0.65"><stop offset="0" stop-color="#a8d0ff"/><stop offset="0.6" stop-color="#4a8ef0"/><stop offset="1" stop-color="#2a66d0"/></radialGradient>
<radialGradient id="gteal" cx="0.5" cy="0.35" r="0.65"><stop offset="0" stop-color="#5aa8b0"/><stop offset="0.7" stop-color="#1a6a78"/><stop offset="1" stop-color="#0a3a48"/></radialGradient>
<radialGradient id="ggreen" cx="0.5" cy="0.35" r="0.65"><stop offset="0" stop-color="#9fe0a8"/><stop offset="0.6" stop-color="#22a848"/><stop offset="1" stop-color="#0a6a2a"/></radialGradient>
<radialGradient id="gyel" cx="0.5" cy="0.4" r="0.65"><stop offset="0" stop-color="#ffe860"/><stop offset="0.7" stop-color="#e0b800"/><stop offset="1" stop-color="#a07800"/></radialGradient>
<radialGradient id="gnavy" cx="0.5" cy="0.35" r="0.65"><stop offset="0" stop-color="#4a8ae0"/><stop offset="0.7" stop-color="#1048a8"/><stop offset="1" stop-color="#062a70"/></radialGradient>
<radialGradient id="gred" cx="0.5" cy="0.35" r="0.65"><stop offset="0" stop-color="#ff9a80"/><stop offset="0.6" stop-color="#e04a30"/><stop offset="1" stop-color="#b02818"/></radialGradient>
</defs></svg>
<svg style="left:16px;top:27px" width="24" height="24" viewBox="0 0 24 24"><circle cx="12" cy="11.8" r="11.3" fill="url(#gblue)" stroke="#2a5ac8" stroke-width="0.8"/>
<ellipse cx="12" cy="7" rx="8" ry="5" fill="#ffffff" opacity="0.25"/>
<path d="M12 4.5 L20 11.8 L17.3 11.8 L17.3 18.5 L14 18.5 L14 14.5 L10.5 14.5 L10.5 18.5 L6.8 18.5 L6.8 11.8 L4 11.8 Z" fill="#fff"/><rect x="15.5" y="5.5" width="2" height="4" fill="#fff"/></svg>
<svg style="left:74px;top:27px" width="24" height="25" viewBox="0 0 24 25"><circle cx="12" cy="12.5" r="11.6" fill="url(#gteal)" stroke="#083848" stroke-width="1"/>
<path d="M10.5 6 L15 6.5 L19 13 L15.5 16 Z" fill="#f0f0f0"/><path d="M14.5 10 L18 10 L20.5 16.5 L17 17.5 Z" fill="#dcdcdc"/>
<path d="M5 9.5 L8 7 L16.5 16.5 L13.5 19 Z" fill="#e85555"/>
<path d="M7.2 10.3 L8.2 9.4 M9.2 12.4 L10.2 11.5 M11.2 14.5 L12.2 13.6 M13.2 16.6 L14.2 15.7" stroke="#fff" stroke-width="0.8"/></svg>
<svg style="left:130px;top:27px" width="24" height="24" viewBox="0 0 24 24"><circle cx="12" cy="11.8" r="11.3" fill="url(#ggreen)" stroke="#0a5a28" stroke-width="1"/>
<path d="M5 10.8 L12.5 10.8 L12.5 7.5 L19 12.3 L12.5 17 L12.5 13.8 L5 13.8 Z" fill="#fff"/>
<path d="M8.2 16.5 L8.2 7.8 L11.8 7.8 A2.5 2.5 0 0 1 11.8 12.8 L8.2 12.8" stroke="#ee1818" stroke-width="2.2" fill="none"/></svg>
<svg style="left:188px;top:28px" width="24" height="24" viewBox="0 0 24 24"><circle cx="12" cy="12" r="11.2" fill="url(#gyel)" stroke="#8a6400" stroke-width="1"/>
<path d="M7.8 7 L16.5 7 L8.2 17 L17 17" stroke="#fff" stroke-width="2.3" fill="none" stroke-linejoin="miter"/></svg>
<div class="a" style="left:242px;top:28px;width:86px;height:20px;background:#fff;border-top:2px solid #111;border-left:2px solid #111;border-right:1px solid #fafafa;border-bottom:1px solid #fafafa;"></div>
<div class="t" style="left:246px;top:31.33px;font-size:14px;color:#31363b;letter-spacing:0.804px;">1667km</div>
<div class="a" style="left:312px;top:29px;width:16px;height:9px;background:#eff0f1;border-top:1px solid #fff;border-left:1px solid #fff;border-bottom:1px solid #111;border-right:1px solid #111;"></div>
<div class="a" style="left:312px;top:38px;width:16px;height:10px;background:#eff0f1;border-top:1px solid #fff;border-left:1px solid #fff;border-bottom:2px solid #111;border-right:2px solid #111;"></div>
<svg style="left:317px;top:31px" width="6" height="14"><path d="M0.5 3.5 L3 1 L5.5 3.5 Z M0.5 10 L3 12.5 L5.5 10 Z" fill="#111"/></svg>
<svg style="left:359px;top:27px" width="24" height="24" viewBox="0 0 24 24"><circle cx="12" cy="12" r="11.3" fill="url(#gnavy)" stroke="#021a50" stroke-width="1.2"/>
<path d="M4.5 9 A8.5 8.5 0 0 1 16 3.8" stroke="#a8d8ff" stroke-width="1" fill="none" opacity="0.8"/>
<path d="M7 17.5 L7 7.3 L10.8 7.3 A2.7 2.7 0 0 1 10.8 12.7 L7 12.7" stroke="#fff" stroke-width="2.3" fill="none"/>
<path d="M4.5 13.5 L6 13.5 M9 10 L11 10.5 L12.3 12.5 L13.8 18.2 L17 10.8 L20 13.5" stroke="#ff1010" stroke-width="1.5" fill="none" stroke-linejoin="round"/></svg>
<div class="a" style="left:414px;top:28px;width:221px;height:20px;background:#fff;border-top:2px solid #111;border-left:2px solid #111;border-right:1px solid #fafafa;border-bottom:1px solid #fafafa;"></div>
<div class="a" style="left:416px;top:30px;width:202px;height:17px;background:#3daee9;outline:1px dotted #c05a20;outline-offset:-1px;"></div>
<div class="t" style="left:417px;top:31.33px;font-size:14px;color:#ffffff;letter-spacing:0.339px;">BP 4 - 8 Hz  3rd order</div>
<div class="a" style="left:618px;top:30px;width:16px;height:17px;background:#eff0f1;border-top:1px solid #fff;border-left:1px solid #fff;border-right:2px solid #111;border-bottom:2px solid #111;"></div>
<svg style="left:621px;top:36px" width="9" height="6"><path d="M0 0 L9 0 L4.5 5.0 Z" fill="#111"/></svg>
<div class="a" style="left:663px;top:32px;width:12px;height:12px;background:#fff;border-top:2px solid #111;border-left:2px solid #111;border-right:1px solid #f4f4f4;border-bottom:1px solid #f4f4f4;"></div>
<div class="t" style="left:681px;top:31.33px;font-size:14px;color:#31363b;letter-spacing:0.265px;">Logscale</div>
<div class="a" style="left:772px;top:28px;width:80px;height:20px;background:#fff;border-top:2px solid #111;border-left:2px solid #111;border-right:1px solid #fafafa;border-bottom:1px solid #fafafa;"></div>
<div class="a" style="left:835px;top:30px;width:16px;height:17px;background:#eff0f1;border-top:1px solid #fff;border-left:1px solid #fff;border-right:2px solid #111;border-bottom:2px solid #111;"></div>
<svg style="left:837.5px;top:36.0px" width="9" height="6"><path d="M0 0 L9 0 L4.5 5.0 Z" fill="#111"/></svg>
<div class="t" style="left:776px;top:31.33px;font-size:14px;color:#232627;letter-spacing:-0.547px;">LOCSAT</div>
<svg style="left:883px;top:26px" width="25" height="25" viewBox="0 0 25 25"><circle cx="12.5" cy="12.5" r="12" fill="url(#gred)"/>
<circle cx="12.5" cy="12.5" r="6.5" stroke="#fff" stroke-width="1.3" fill="none"/><circle cx="12.5" cy="12.5" r="3.2" stroke="#fff" stroke-width="1.3" fill="none"/>
<path d="M12.5 3.5 V21.5 M3.5 12.5 H21.5" stroke="#fff" stroke-width="1.1"/></svg>
<div class="a" style="left:7px;top:62px;width:902px;height:291px;background:#fff;border-top:1px solid #d6d6d6;border-left:1px solid #d6d6d6;border-right:1px solid #fafafa;border-bottom:1px solid #fafafa;"></div>
<div class="a" style="left:8px;top:63px;width:900px;height:289px;background:#fff;border-top:1px solid #111;border-left:1px solid #111;border-right:1px solid #ececec;border-bottom:1px solid #ececec;"></div>
<div class="t" style="left:15px;top:71.33px;font-size:14px;color:#232627;letter-spacing:1.276px;font-weight:bold;">PB06</div>
<div class="t" style="left:60px;top:71.33px;font-size:14px;color:#232627;letter-spacing:0.634px;">CX  HHZ, distance: 230.327 km, azimuth: 302.0°</div>
<svg style="left:0;top:0" width="1192" height="827"><line x1="299" y1="96" x2="299" y2="291" stroke="#d4d4d4" stroke-width="1" stroke-dasharray="4,3"/><line x1="469.5" y1="96" x2="469.5" y2="291" stroke="#d4d4d4" stroke-width="1" stroke-dasharray="4,3"/><line x1="640.5" y1="96" x2="640.5" y2="291" stroke="#d4d4d4" stroke-width="1" stroke-dasharray="4,3"/><line x1="811.5" y1="96" x2="811.5" y2="291" stroke="#d4d4d4" stroke-width="1" stroke-dasharray="4,3"/><line x1="133.5" y1="96" x2="133.5" y2="154.5" stroke="#111" stroke-width="1.1"/><line x1="124" y1="123.4" x2="134" y2="123.4" stroke="#111" stroke-width="1.1"/><line x1="129" y1="102.2" x2="134" y2="102.2" stroke="#111" stroke-width="1.1"/><line x1="129" y1="109.3" x2="134" y2="109.3" stroke="#111" stroke-width="1.1"/><line x1="129" y1="116.4" x2="134" y2="116.4" stroke="#111" stroke-width="1.1"/><line x1="129" y1="130.5" x2="134" y2="130.5" stroke="#111" stroke-width="1.1"/><line x1="129" y1="137.5" x2="134" y2="137.5" stroke="#111" stroke-width="1.1"/><line x1="129" y1="144.6" x2="134" y2="144.6" stroke="#111" stroke-width="1.1"/><line x1="129" y1="151.6" x2="134" y2="151.6" stroke="#111" stroke-width="1.1"/><line x1="133.5" y1="161" x2="133.5" y2="219.5" stroke="#111" stroke-width="1.1"/><line x1="124" y1="191.8" x2="134" y2="191.8" stroke="#111" stroke-width="1.1"/><line x1="129" y1="165.1" x2="134" y2="165.1" stroke="#111" stroke-width="1.1"/><line x1="129" y1="174.0" x2="134" y2="174.0" stroke="#111" stroke-width="1.1"/><line x1="129" y1="182.9" x2="134" y2="182.9" stroke="#111" stroke-width="1.1"/><line x1="129" y1="200.7" x2="134" y2="200.7" stroke="#111" stroke-width="1.1"/><line x1="129" y1="209.6" x2="134" y2="209.6" stroke="#111" stroke-width="1.1"/><line x1="129" y1="218.5" x2="134" y2="218.5" stroke="#111" stroke-width="1.1"/><line x1="133.5" y1="226" x2="133.5" y2="284.7" stroke="#111" stroke-width="1.1"/><line x1="124" y1="252.4" x2="134" y2="252.4" stroke="#111" stroke-width="1.1"/><line x1="129" y1="234.0" x2="134" y2="234.0" stroke="#111" stroke-width="1.1"/><line x1="129" y1="243.2" x2="134" y2="243.2" stroke="#111" stroke-width="1.1"/><line x1="129" y1="261.6" x2="134" y2="261.6" stroke="#111" stroke-width="1.1"/><line x1="129" y1="270.8" x2="134" y2="270.8" stroke="#111" stroke-width="1.1"/><line x1="129" y1="280.0" x2="134" y2="280.0" stroke="#111" stroke-width="1.1"/></svg>
<div class="t" style="left:24px;top:124.6px;font-size:14px;letter-spacing:1.1px;color:#232627;transform:translate(-50%,-50%) rotate(-90deg);">counts</div>
<div class="t" style="right:1071.5px;top:115.28px;font-size:14.5px;color:#232627;letter-spacing:0px;">0</div>
<div class="a" style="left:140px;top:96.5px;width:12.5px;height:21.0px;border:1px solid #111;background:#fff;"></div>
<div class="t" style="left:142px;top:99.23px;font-size:13px;color:#111;letter-spacing:0px;font-weight:bold;">Z</div>
<div class="t" style="left:140px;top:126.13px;font-size:14px;color:#232627;letter-spacing:0.412px;">amax: 864.8 counts</div>
<div class="t" style="left:140px;top:138.33px;font-size:14px;color:#232627;letter-spacing:0.39px;">mean: 0.0 counts</div>
<div class="t" style="left:24px;top:189.6px;font-size:14px;letter-spacing:1.1px;color:#232627;transform:translate(-50%,-50%) rotate(-90deg);">counts</div>
<div class="t" style="right:1071.5px;top:183.68px;font-size:14.5px;color:#232627;letter-spacing:0px;">0</div>
<div class="a" style="left:140px;top:161.1px;width:13.5px;height:21.400000000000006px;border:1px solid #111;background:#fff;"></div>
<div class="t" style="left:142px;top:163.83px;font-size:13px;color:#111;letter-spacing:0px;font-weight:bold;">N</div>
<div class="t" style="left:140px;top:190.13px;font-size:14px;color:#232627;letter-spacing:0.416px;">amax: 3395.6 counts</div>
<div class="t" style="left:140px;top:202.93px;font-size:14px;color:#232627;letter-spacing:0.369px;">mean: -0.0 counts</div>
<div class="t" style="left:24px;top:254.2px;font-size:14px;letter-spacing:1.1px;color:#232627;transform:translate(-50%,-50%) rotate(-90deg);">counts</div>
<div class="t" style="right:1071.5px;top:244.28px;font-size:14.5px;color:#232627;letter-spacing:0px;">0</div>
<div class="a" style="left:140px;top:226.2px;width:11.5px;height:21.400000000000006px;border:1px solid #111;background:#fff;"></div>
<div class="t" style="left:142px;top:228.94px;font-size:13px;color:#111;letter-spacing:0px;font-weight:bold;">E</div>
<div class="t" style="left:140px;top:255.63px;font-size:14px;color:#232627;letter-spacing:0.416px;">amax: 1721.8 counts</div>
<div class="t" style="left:140px;top:268.13px;font-size:14px;color:#232627;letter-spacing:0.39px;">mean: 0.0 counts</div>
<svg style="left:0;top:0" width="1192" height="827"><line x1="140" y1="123.3" x2="312" y2="123.3" stroke="#b0b0b0" stroke-width="1.6"/><path d="M312.5 122.5V123.5M313.5 116.1V132.0M314.5 116.1V134.3M315.5 122.1V131.9M316.5 119.3V136.2M317.5 114.3V127.8M318.5 115.9V127.9M319.5 118.0V124.0M320.5 115.8V129.5M321.5 116.0V127.2M322.5 119.6V128.3M323.5 114.5V126.6M324.5 111.8V125.1M325.5 115.3V130.3M326.5 119.7V126.3M327.5 120.5V126.3M328.5 119.7V125.1M329.5 120.1V126.8M330.5 120.2V126.4M331.5 121.1V125.3M332.5 117.9V128.3M333.5 116.5V127.8M334.5 117.2V129.6M335.5 115.0V131.5M336.5 115.3V131.1M337.5 119.5V124.6M338.5 120.9V127.1M339.5 118.9V126.8M340.5 119.8V126.9M341.5 116.6V127.2M342.5 122.1V134.6M343.5 118.6V128.7M344.5 118.3V128.4M345.5 120.9V130.2M346.5 117.1V129.3M347.5 117.5V126.9M348.5 119.7V127.9M349.5 120.2V127.6M350.5 119.5V123.5M351.5 118.7V125.3M352.5 119.1V125.1M353.5 121.1V127.4M354.5 120.6V124.7M355.5 121.1V127.4M356.5 121.7V126.8M357.5 119.2V123.8M358.5 119.3V126.0M359.5 120.0V124.5M360.5 121.5V127.7M361.5 121.8V127.2M362.5 117.5V123.9M363.5 120.9V125.2M364.5 119.2V125.1M365.5 122.0V127.3M366.5 120.3V126.6M367.5 121.5V126.8M368.5 119.7V124.8M369.5 121.5V126.3M370.5 122.0V126.8M371.5 122.2V124.8M372.5 121.5V124.8M373.5 120.5V125.6M374.5 120.4V126.2M375.5 119.8V127.1M376.5 120.4V126.8M377.5 121.0V125.3M378.5 118.2V126.8M379.5 120.4V126.0M380.5 120.6V125.3M381.5 121.0V124.5M382.5 121.1V126.9M383.5 121.0V127.4M384.5 121.3V126.1M385.5 120.2V124.3M386.5 122.7V126.7M387.5 121.3V125.3M388.5 120.7V127.3M389.5 119.4V126.2M390.5 120.2V126.1M391.5 122.8V125.2M392.5 121.1V125.6M393.5 118.7V124.9M394.5 119.6V126.0M395.5 118.8V126.5M396.5 120.4V125.2M397.5 121.4V125.9M398.5 122.1V126.6M399.5 119.8V126.4M400.5 120.8V125.1M401.5 120.9V125.0M402.5 120.9V126.7M403.5 121.0V127.3M404.5 121.9V124.4M405.5 121.4V126.0M406.5 119.5V124.4M407.5 121.5V125.5M408.5 118.6V127.1M409.5 120.2V125.0M410.5 121.9V125.4M411.5 121.1V125.0M412.5 120.4V125.3M413.5 122.2V127.0M414.5 121.6V126.3M415.5 122.7V125.8M416.5 121.2V123.5M417.5 121.4V125.9M418.5 121.8V125.8M419.5 121.2V125.5M420.5 121.1V127.8M421.5 119.5V125.4M422.5 121.5V124.7M423.5 122.1V124.7M424.5 121.8V126.1M425.5 120.9V123.8M426.5 120.9V125.6M427.5 122.0V124.7M428.5 121.9V125.7M429.5 121.6V124.9M430.5 120.9V127.1M431.5 122.1V125.2M432.5 119.5V126.7M433.5 121.3V125.5M434.5 117.9V127.8M435.5 119.8V125.1M436.5 120.2V128.6M437.5 119.9V124.7M438.5 122.0V126.2M439.5 121.3V125.2M440.5 121.6V125.8M441.5 122.2V124.2M442.5 121.2V125.4M443.5 121.8V125.7M444.5 122.4V126.1M445.5 123.1V124.9M446.5 122.1V124.0M447.5 122.4V125.0M448.5 121.3V125.8M449.5 121.4V126.8M450.5 121.6V125.2M451.5 120.4V124.3M452.5 121.3V125.9M453.5 121.8V125.1M454.5 121.9V124.2M455.5 121.6V125.7M456.5 122.5V124.1M457.5 122.2V125.4M458.5 121.4V125.1M459.5 120.1V125.3M460.5 121.6V125.0M461.5 121.5V125.2M462.5 121.3V125.2M463.5 121.9V127.9M464.5 121.9V126.2M465.5 122.0V126.4M466.5 120.9V126.8M467.5 121.4V124.7M468.5 121.5V126.1M469.5 121.9V124.7M470.5 120.9V126.1M471.5 122.7V127.5M472.5 121.3V125.4M473.5 121.3V124.8M474.5 121.6V124.7M475.5 121.5V125.5M476.5 121.7V125.8M477.5 120.5V123.7M478.5 122.2V124.9M479.5 121.5V126.1M480.5 123.4V124.9M481.5 121.4V125.8M482.5 122.2V125.1M483.5 121.8V124.0M484.5 121.8V123.7M485.5 121.2V124.6M486.5 121.9V125.0M487.5 121.9V124.6M488.5 120.3V126.7M489.5 120.4V124.9M490.5 121.0V124.7M491.5 121.2V125.8M492.5 119.5V124.2M493.5 120.0V126.2M494.5 119.2V127.8M495.5 120.0V125.9M496.5 121.2V125.1M497.5 118.1V128.2M498.5 114.4V128.9M499.5 96.0V145.3M500.5 98.4V139.8M501.5 114.1V142.7M502.5 109.4V139.6M503.5 99.5V131.6M504.5 114.5V151.4M505.5 100.9V147.2M506.5 100.6V140.6M507.5 101.1V122.8M508.5 116.4V140.9M509.5 103.4V141.3M510.5 108.4V133.7M511.5 108.7V138.6M512.5 109.2V137.6M513.5 96.0V131.9M514.5 105.9V136.8M515.5 106.8V135.0M516.5 111.1V135.5M517.5 119.6V140.6M518.5 112.7V137.4M519.5 100.4V133.6M520.5 96.0V137.2M521.5 110.9V135.1M522.5 113.2V135.6M523.5 112.0V134.6M524.5 118.2V128.5M525.5 112.7V131.2M526.5 119.9V133.8M527.5 121.0V135.4M528.5 111.1V137.2M529.5 114.5V133.4M530.5 119.8V129.6M531.5 119.4V129.3M532.5 114.4V131.2M533.5 117.8V131.3M534.5 117.6V126.8M535.5 114.7V125.8M536.5 111.8V133.8M537.5 114.1V127.9M538.5 120.0V131.2M539.5 119.4V130.3M540.5 116.7V124.7M541.5 115.0V133.3M542.5 116.4V130.2M543.5 119.8V130.9M544.5 119.3V125.3M545.5 115.4V131.3M546.5 116.9V126.1M547.5 119.3V125.9M548.5 116.0V131.3M549.5 117.6V128.4M550.5 115.5V129.9M551.5 121.4V127.2M552.5 118.8V128.0M553.5 116.9V127.8M554.5 120.1V128.7M555.5 115.5V129.0M556.5 118.0V126.2M557.5 112.6V127.7M558.5 120.2V127.1M559.5 117.8V128.0M560.5 119.3V126.3M561.5 117.9V127.2M562.5 120.3V127.7M563.5 120.8V126.2M564.5 118.2V125.4M565.5 117.6V125.4M566.5 121.3V127.3M567.5 121.1V128.0M568.5 116.2V127.3M569.5 120.9V124.9M570.5 122.2V127.2M571.5 121.4V128.6M572.5 121.7V126.6M573.5 118.5V130.1M574.5 119.2V129.5M575.5 119.8V127.6M576.5 118.1V125.9M577.5 117.6V127.0M578.5 121.0V126.6M579.5 121.8V128.5M580.5 121.8V128.8M581.5 121.2V125.1M582.5 119.1V128.2M583.5 116.7V130.2M584.5 118.6V127.4M585.5 121.0V128.1M586.5 118.2V131.0M587.5 118.5V128.5M588.5 117.9V126.1M589.5 119.9V127.9M590.5 120.3V124.5M591.5 118.9V126.1M592.5 119.9V124.6M593.5 121.9V128.1M594.5 119.4V125.6M595.5 122.4V125.7M596.5 122.3V126.6M597.5 121.3V124.9M598.5 120.8V126.5M599.5 118.9V125.8M600.5 120.7V127.0M601.5 120.0V125.6M602.5 120.9V125.8M603.5 121.5V126.1M604.5 121.3V126.3M605.5 121.6V127.2M606.5 121.3V123.5M607.5 121.5V124.8M608.5 120.6V125.0M609.5 120.0V124.8M610.5 119.5V126.7M611.5 121.3V125.2M612.5 122.0V129.3M613.5 119.2V125.5M614.5 121.7V126.6M615.5 121.2V125.1M616.5 120.9V127.8M617.5 121.7V125.0M618.5 122.1V125.4M619.5 123.3V124.8M620.5 122.2V126.5M621.5 120.1V128.1M622.5 120.2V125.8M623.5 120.2V125.9M624.5 121.8V124.1M625.5 120.5V125.0M626.5 119.2V125.3M627.5 122.3V124.5M628.5 122.0V127.2M629.5 119.3V127.5M630.5 119.2V127.7M631.5 121.3V124.6M632.5 120.7V124.5M633.5 120.0V124.6M634.5 122.6V125.1M635.5 122.3V127.8M636.5 122.1V125.7M637.5 120.8V125.4M638.5 121.3V124.9M639.5 120.0V125.3M640.5 121.3V125.7M641.5 121.1V125.1M642.5 122.2V125.4M643.5 120.7V124.1M644.5 121.3V123.8M645.5 121.1V123.1M646.5 122.4V125.0M647.5 121.2V124.7M648.5 120.8V126.7M649.5 121.4V125.0M650.5 120.4V125.4M651.5 120.2V125.4M652.5 121.8V128.1M653.5 122.4V125.7M654.5 121.5V125.3M655.5 122.2V126.0M656.5 121.1V125.8M657.5 121.9V124.3M658.5 122.7V123.7M659.5 122.4V125.4M660.5 122.5V124.8M661.5 122.0V124.9M662.5 119.8V125.1M663.5 121.3V124.3M664.5 122.7V124.0M665.5 121.7V125.4M666.5 121.8V124.4M667.5 121.6V124.9M668.5 121.0V124.5M669.5 121.3V123.5M670.5 121.5V125.0M671.5 121.1V124.5M672.5 120.2V124.9M673.5 122.9V125.7M674.5 122.6V124.9M675.5 121.8V124.4M676.5 121.4V124.8M677.5 121.8V123.4M678.5 122.1V125.1M679.5 122.4V125.1M680.5 121.1V125.7M681.5 121.6V125.5M682.5 121.6V124.6M683.5 120.8V124.8M684.5 119.7V125.2M685.5 122.0V125.3M686.5 121.9V124.6M687.5 122.2V125.0M688.5 120.5V125.7M689.5 121.7V124.5M690.5 121.4V125.0M691.5 121.5V125.1M692.5 121.7V125.5M693.5 122.5V124.5M694.5 122.6V125.4M695.5 121.8V124.8M696.5 122.0V123.8M697.5 122.3V125.3M698.5 123.0V124.4M699.5 122.7V125.3M700.5 122.4V124.5M701.5 121.5V124.2M702.5 122.4V125.5M703.5 122.0V124.4M704.5 122.8V123.8M705.5 121.9V125.1M706.5 121.9V124.8M707.5 122.0V124.0M708.5 122.7V125.2M709.5 122.8V124.1M710.5 122.0V124.9M711.5 121.4V124.8M712.5 123.0V125.6M713.5 123.1V125.2M714.5 121.6V123.9M715.5 122.4V124.6M716.5 122.2V125.6M717.5 123.4V125.1M718.5 121.3V124.0M719.5 121.5V124.9M720.5 122.0V126.3M721.5 122.2V124.4M722.5 122.8V124.2M723.5 121.5V124.1M724.5 121.2V123.9M725.5 121.8V124.5M726.5 122.0V124.2M727.5 122.3V125.0M728.5 122.0V124.2M729.5 121.7V124.7M730.5 122.6V124.2M731.5 122.1V123.9M732.5 121.7V123.6M733.5 122.2V124.3M734.5 122.9V124.0M735.5 122.5V124.1M736.5 122.5V124.2M737.5 122.5V124.4M738.5 122.1V124.0M739.5 121.7V124.4M740.5 122.0V125.4M741.5 122.6V124.5M742.5 122.2V123.8M743.5 121.8V123.8M744.5 122.8V124.7M745.5 122.0V124.3M746.5 122.0V125.0M747.5 122.8V124.5M748.5 122.6V123.6M749.5 122.0V125.6M750.5 122.2V124.2M751.5 121.9V124.5M752.5 122.7V125.3M753.5 121.6V124.9M754.5 122.3V124.4M755.5 122.8V124.8M756.5 122.1V124.2M757.5 122.3V124.2M758.5 122.5V124.0M759.5 120.9V124.6M760.5 122.7V125.0M761.5 122.9V124.5M762.5 122.7V125.4M763.5 121.8V123.9M764.5 121.9V123.8M765.5 122.5V124.2M766.5 122.2V123.6M767.5 122.4V123.7M768.5 122.6V123.6M769.5 122.6V125.2M770.5 121.7V124.5M771.5 121.8V124.1M772.5 122.3V124.5M773.5 122.4V124.6M774.5 123.0V124.8M775.5 122.3V124.4M776.5 122.2V124.1M777.5 122.6V123.6M778.5 122.6V123.9M779.5 122.6V123.6M780.5 122.8V123.9M781.5 122.9V123.9M782.5 122.8V123.8M783.5 122.3V123.7M784.5 122.3V123.7M785.5 122.8V123.9M786.5 122.7V123.7M787.5 122.3V124.0M788.5 122.5V123.9M789.5 122.8V124.3M790.5 122.2V124.0M791.5 122.5V124.6M792.5 122.5V123.8M793.5 122.5V125.5M794.5 121.4V123.7M795.5 121.5V124.8M796.5 121.9V123.8M797.5 122.5V123.7M798.5 122.1V124.0M799.5 122.0V123.8M800.5 122.3V123.9M801.5 122.5V124.0M802.5 122.4V123.4M803.5 122.5V123.7M804.5 122.4V124.4M805.5 122.1V124.3M806.5 123.0V124.0M807.5 122.0V123.3M808.5 122.4V124.2M809.5 122.4V123.8M810.5 122.6V124.6M811.5 122.5V124.0M812.5 122.5V124.6M813.5 121.4V124.3M814.5 123.0V124.2M815.5 122.9V124.6M816.5 122.2V124.3M817.5 122.9V124.7M818.5 122.4V123.7M819.5 122.6V123.6M820.5 122.4V124.3M821.5 122.1V124.1M822.5 122.6V124.2M823.5 122.5V124.2M824.5 123.0V124.7M825.5 122.6V124.5M826.5 122.9V124.2M827.5 122.0V123.9M828.5 122.3V123.7M829.5 122.7V123.9M830.5 122.4V124.1M831.5 122.8V124.4M832.5 122.8V124.1M833.5 121.8V124.2M834.5 122.5V125.6M835.5 122.4V124.5M836.5 122.5V124.3M837.5 122.6V123.9M838.5 122.7V123.8M839.5 122.3V124.3M840.5 122.7V123.9M841.5 122.4V123.4M842.5 122.3V123.9M843.5 122.4V124.1M844.5 122.3V124.3M845.5 123.0V124.0M846.5 123.0V124.0M847.5 122.4V123.4M848.5 122.3V124.4M849.5 122.7V124.1M850.5 122.1V124.0M851.5 121.7V124.2M852.5 122.4V123.6M853.5 122.6V123.6M854.5 123.2V124.2M855.5 122.6V123.7M856.5 122.4V123.6M857.5 122.6V123.6M858.5 122.4V123.9M859.5 122.6V123.9M860.5 122.9V123.9M861.5 122.6V124.1M862.5 122.9V124.5M863.5 122.6V123.9M864.5 121.9V124.3M865.5 122.2V124.8M866.5 122.9V123.9M867.5 122.3V124.1M868.5 122.1V123.7M869.5 122.6V123.9M870.5 122.7V123.7M871.5 123.0V124.0M872.5 122.6V123.6M873.5 122.5V124.0M874.5 123.0V124.1M875.5 122.8V124.0M876.5 122.8V123.8M877.5 123.0V124.0M878.5 122.6V123.9M879.5 122.6V123.7M880.5 122.4V123.6M881.5 121.9V123.8M882.5 122.7V123.7M883.5 122.9V123.9M884.5 122.3V123.7M885.5 122.1V123.8M886.5 122.3V124.0M887.5 122.3V124.2M888.5 122.9V123.9M889.5 122.5V123.9M890.5 122.8V124.1M891.5 122.6V123.7M892.5 122.8V123.8M893.5 122.8V123.8M894.5 123.1V124.1M895.5 122.9V123.9M896.5 122.9V124.5M897.5 122.9V123.9M898.5 122.5V123.5" fill="none" stroke="#858585" stroke-width="1.0"/><line x1="140" y1="191.5" x2="312" y2="191.5" stroke="#b0b0b0" stroke-width="1.6"/><path d="M312.5 191.0V192.0M313.5 189.3V193.3M314.5 189.1V193.7M315.5 188.8V192.1M316.5 189.7V195.6M317.5 189.5V193.9M318.5 190.8V192.9M319.5 190.8V192.1M320.5 190.5V193.2M321.5 189.8V192.5M322.5 190.4V192.8M323.5 190.8V193.6M324.5 190.3V192.8M325.5 189.6V192.3M326.5 190.9V192.0M327.5 189.9V193.6M328.5 189.9V192.2M329.5 189.9V192.5M330.5 190.9V192.9M331.5 189.8V192.4M332.5 191.3V193.0M333.5 190.5V192.4M334.5 190.5V192.4M335.5 190.1V191.9M336.5 189.9V192.7M337.5 191.1V192.3M338.5 189.6V192.4M339.5 190.6V194.7M340.5 189.9V192.9M341.5 189.9V192.4M342.5 190.8V192.6M343.5 190.1V192.2M344.5 190.7V193.1M345.5 190.6V192.1M346.5 190.5V191.7M347.5 191.3V192.3M348.5 190.7V193.1M349.5 191.0V192.3M350.5 189.6V193.0M351.5 189.7V192.7M352.5 190.2V193.2M353.5 190.4V192.7M354.5 190.3V192.7M355.5 190.8V194.1M356.5 190.6V192.1M357.5 190.3V192.9M358.5 189.5V193.1M359.5 190.1V191.6M360.5 190.6V192.2M361.5 189.4V192.9M362.5 189.8V192.8M363.5 191.1V192.5M364.5 190.1V191.7M365.5 190.5V192.0M366.5 190.3V192.0M367.5 191.0V192.0M368.5 190.2V192.5M369.5 190.2V192.6M370.5 189.3V192.4M371.5 190.4V191.9M372.5 191.0V192.0M373.5 190.6V191.9M374.5 191.2V192.6M375.5 190.6V191.6M376.5 190.0V192.1M377.5 189.5V192.9M378.5 189.9V192.0M379.5 189.4V192.1M380.5 189.9V192.3M381.5 191.3V193.2M382.5 190.5V192.3M383.5 190.7V192.0M384.5 190.3V192.0M385.5 190.4V191.7M386.5 190.5V192.8M387.5 189.4V192.8M388.5 190.5V192.3M389.5 190.1V192.5M390.5 190.3V192.4M391.5 190.4V192.2M392.5 190.6V192.4M393.5 190.3V192.8M394.5 189.8V192.7M395.5 191.0V192.5M396.5 190.7V192.1M397.5 190.7V192.6M398.5 190.0V192.4M399.5 190.4V192.7M400.5 190.5V192.4M401.5 190.3V192.6M402.5 190.4V192.2M403.5 189.3V192.9M404.5 189.9V192.4M405.5 190.4V192.7M406.5 190.3V192.7M407.5 191.3V192.6M408.5 190.2V192.2M409.5 190.4V192.5M410.5 190.5V192.0M411.5 190.8V192.5M412.5 190.6V191.9M413.5 190.4V192.1M414.5 190.6V192.6M415.5 189.8V191.9M416.5 190.7V193.3M417.5 190.8V192.6M418.5 189.5V193.6M419.5 191.2V192.5M420.5 189.9V192.0M421.5 190.6V193.3M422.5 189.9V192.7M423.5 190.2V193.0M424.5 190.7V191.8M425.5 190.9V191.9M426.5 190.1V192.3M427.5 190.6V192.2M428.5 190.9V193.0M429.5 190.7V191.9M430.5 190.1V192.4M431.5 191.0V192.1M432.5 190.5V191.8M433.5 190.4V191.8M434.5 190.6V192.3M435.5 191.0V192.6M436.5 190.2V191.5M437.5 190.9V192.5M438.5 190.3V192.7M439.5 190.8V192.2M440.5 189.7V192.4M441.5 190.5V193.5M442.5 190.6V192.3M443.5 190.9V192.1M444.5 190.5V192.5M445.5 191.2V193.1M446.5 190.0V192.8M447.5 190.7V193.1M448.5 190.2V192.4M449.5 190.9V192.5M450.5 190.5V192.3M451.5 190.2V191.9M452.5 191.0V192.5M453.5 190.6V192.1M454.5 190.8V192.1M455.5 190.8V192.2M456.5 190.5V192.4M457.5 191.3V192.8M458.5 190.1V192.4M459.5 189.4V193.0M460.5 191.1V192.4M461.5 190.0V192.2M462.5 190.4V191.7M463.5 190.1V192.4M464.5 189.8V192.0M465.5 190.3V191.9M466.5 190.6V192.2M467.5 190.5V192.0M468.5 191.3V192.4M469.5 191.1V192.8M470.5 191.0V192.0M471.5 190.6V193.5M472.5 190.9V192.2M473.5 191.0V192.3M474.5 188.8V193.8M475.5 190.6V193.3M476.5 189.9V192.3M477.5 191.4V193.1M478.5 190.4V192.6M479.5 190.9V192.6M480.5 190.3V192.7M481.5 190.6V192.5M482.5 190.8V192.2M483.5 190.8V192.2M484.5 190.2V192.4M485.5 190.3V192.2M486.5 190.2V192.6M487.5 190.6V193.0M488.5 191.0V193.1M489.5 190.4V192.4M490.5 189.1V192.0M491.5 191.2V192.7M492.5 190.2V193.1M493.5 191.2V192.9M494.5 191.0V192.7M495.5 190.6V192.2M496.5 191.1V192.3M497.5 189.0V192.8M498.5 186.2V196.3M499.5 181.2V194.7M500.5 185.5V198.4M501.5 185.0V193.5M502.5 187.2V197.0M503.5 189.7V199.1M504.5 187.9V198.9M505.5 188.7V197.3M506.5 189.1V195.8M507.5 187.8V201.6M508.5 188.3V198.4M509.5 183.8V199.0M510.5 184.1V194.6M511.5 186.8V195.3M512.5 182.2V193.6M513.5 188.7V196.4M514.5 187.1V198.3M515.5 184.9V195.2M516.5 182.1V191.9M517.5 189.1V196.4M518.5 186.8V196.0M519.5 183.3V197.4M520.5 187.3V195.7M521.5 187.9V193.9M522.5 190.2V193.0M523.5 187.9V193.9M524.5 188.4V192.3M525.5 189.6V195.4M526.5 187.5V195.4M527.5 188.8V200.9M528.5 186.3V198.1M529.5 187.7V195.2M530.5 182.9V195.9M531.5 186.6V196.7M532.5 186.8V198.9M533.5 185.7V194.7M534.5 187.1V199.0M535.5 184.3V195.4M536.5 185.9V196.8M537.5 188.6V197.3M538.5 188.7V196.6M539.5 190.0V193.0M540.5 187.5V193.3M541.5 184.6V195.8M542.5 185.5V194.1M543.5 188.9V197.9M544.5 184.9V196.8M545.5 189.1V196.2M546.5 186.9V196.1M547.5 190.0V196.1M548.5 189.2V194.8M549.5 189.4V197.8M550.5 185.4V196.1M551.5 191.0V195.3M552.5 186.1V194.3M553.5 188.5V197.0M554.5 190.0V194.9M555.5 189.1V192.8M556.5 188.6V194.7M557.5 188.7V193.7M558.5 188.0V193.4M559.5 189.3V193.1M560.5 190.2V196.0M561.5 189.0V193.4M562.5 189.1V193.1M563.5 187.9V193.3M564.5 188.6V193.7M565.5 188.3V192.8M566.5 190.2V193.2M567.5 188.0V193.3M568.5 190.3V193.2M569.5 187.3V194.9M570.5 191.4V194.1M571.5 188.6V192.2M572.5 189.5V192.5M573.5 189.2V193.0M574.5 189.5V192.6M575.5 189.3V193.9M576.5 189.6V193.2M577.5 187.4V196.5M578.5 186.2V195.3M579.5 184.7V192.8M580.5 188.5V192.8M581.5 190.0V195.3M582.5 188.2V192.6M583.5 190.3V193.2M584.5 190.0V193.9M585.5 189.1V191.8M586.5 188.7V193.4M587.5 190.7V194.7M588.5 188.0V193.3M589.5 188.7V193.8M590.5 188.9V194.2M591.5 189.0V193.6M592.5 189.6V192.6M593.5 188.9V193.2M594.5 188.2V193.4M595.5 188.4V194.3M596.5 188.2V194.7M597.5 190.2V194.4M598.5 190.8V195.0M599.5 190.0V192.9M600.5 189.7V194.8M601.5 188.0V193.3M602.5 190.2V193.9M603.5 189.2V194.1M604.5 189.2V192.5M605.5 189.0V193.9M606.5 190.5V193.7M607.5 190.7V192.8M608.5 190.7V193.5M609.5 189.7V193.0M610.5 189.8V193.9M611.5 190.2V193.1M612.5 190.8V192.9M613.5 189.3V194.7M614.5 190.1V193.4M615.5 189.4V195.1M616.5 189.2V194.0M617.5 189.0V194.4M618.5 189.6V194.0M619.5 189.9V193.5M620.5 190.5V193.8M621.5 190.0V192.0M622.5 188.5V192.5M623.5 190.3V192.7M624.5 190.7V192.7M625.5 190.2V192.9M626.5 190.5V192.6M627.5 188.9V192.5M628.5 190.8V193.9M629.5 188.7V194.0M630.5 189.3V192.6M631.5 190.5V192.9M632.5 190.3V192.9M633.5 189.5V192.6M634.5 190.3V193.5M635.5 190.4V193.1M636.5 190.4V192.9M637.5 190.8V193.2M638.5 190.6V193.8M639.5 189.8V192.9M640.5 190.3V192.1M641.5 189.5V192.5M642.5 190.1V193.4M643.5 191.1V192.6M644.5 190.7V192.4M645.5 190.2V192.7M646.5 190.5V193.2M647.5 190.4V193.2M648.5 190.3V193.2M649.5 190.8V192.2M650.5 190.9V193.0M651.5 190.4V191.8M652.5 190.3V192.1M653.5 190.1V192.8M654.5 190.5V194.0M655.5 190.1V192.2M656.5 190.7V192.8M657.5 190.5V193.4M658.5 190.4V192.9M659.5 189.8V192.7M660.5 190.2V192.6M661.5 189.6V193.5M662.5 190.2V193.3M663.5 190.1V193.5M664.5 189.5V193.5M665.5 190.6V192.5M666.5 190.3V192.4M667.5 189.8V193.1M668.5 190.4V192.7M669.5 190.5V192.6M670.5 190.7V192.0M671.5 190.6V192.4M672.5 190.9V192.4M673.5 190.4V192.8M674.5 190.8V192.7M675.5 190.3V192.2M676.5 189.7V192.7M677.5 190.1V192.1M678.5 189.2V193.0M679.5 189.5V194.2M680.5 189.2V193.2M681.5 190.3V194.2M682.5 190.7V192.8M683.5 190.5V193.5M684.5 190.5V192.0M685.5 190.6V192.1M686.5 190.5V192.1M687.5 190.4V192.0M688.5 190.9V192.2M689.5 190.9V193.0M690.5 190.1V192.7M691.5 190.5V192.6M692.5 190.2V192.6M693.5 190.4V192.7M694.5 190.7V191.9M695.5 190.7V193.3M696.5 190.9V192.5M697.5 190.1V192.5M698.5 190.4V192.4M699.5 190.8V192.1M700.5 190.7V193.1M701.5 190.4V192.2M702.5 191.3V193.3M703.5 189.8V193.2M704.5 190.4V192.3M705.5 190.2V192.1M706.5 190.5V192.5M707.5 191.0V192.7M708.5 191.1V192.1M709.5 190.6V192.9M710.5 190.8V192.7M711.5 191.1V192.1M712.5 190.8V192.7M713.5 190.8V192.6M714.5 190.9V193.0M715.5 191.4V192.4M716.5 190.4V192.2M717.5 190.6V192.6M718.5 191.1V192.7M719.5 191.2V192.2M720.5 191.0V192.4M721.5 190.1V193.2M722.5 190.5V191.8M723.5 189.8V192.7M724.5 190.7V192.7M725.5 190.6V192.1M726.5 190.3V192.0M727.5 190.6V192.4M728.5 190.5V192.3M729.5 190.7V192.6M730.5 190.6V192.5M731.5 191.1V192.4M732.5 190.8V192.3M733.5 190.4V192.1M734.5 190.7V192.6M735.5 190.6V192.1M736.5 190.7V192.3M737.5 189.7V192.1M738.5 191.1V192.5M739.5 190.5V192.4M740.5 190.8V192.2M741.5 191.1V192.6M742.5 190.3V192.1M743.5 190.4V192.6M744.5 190.4V191.9M745.5 190.6V192.4M746.5 190.3V192.3M747.5 190.9V191.9M748.5 190.6V192.7M749.5 190.8V192.4M750.5 190.4V191.5M751.5 190.7V193.2M752.5 189.4V192.2M753.5 190.7V192.3M754.5 189.8V192.3M755.5 190.4V192.3M756.5 190.9V192.3M757.5 190.5V192.6M758.5 190.3V192.0M759.5 190.5V192.4M760.5 190.7V192.4M761.5 189.9V192.5M762.5 190.8V192.6M763.5 190.7V192.4M764.5 190.7V192.0M765.5 190.5V192.3M766.5 190.7V192.6M767.5 191.1V192.9M768.5 189.7V192.3M769.5 191.3V192.5M770.5 190.6V192.6M771.5 191.1V192.3M772.5 190.8V192.1M773.5 191.1V192.1M774.5 191.0V192.2M775.5 191.2V192.3M776.5 190.7V192.0M777.5 190.7V192.0M778.5 191.0V192.0M779.5 190.5V192.6M780.5 190.6V192.8M781.5 190.8V192.3M782.5 190.3V192.1M783.5 191.4V192.4M784.5 191.3V192.5M785.5 191.2V192.6M786.5 190.7V192.4M787.5 191.2V192.2M788.5 191.2V192.2M789.5 190.9V193.9M790.5 190.6V192.3M791.5 190.7V192.1M792.5 190.9V192.2M793.5 190.9V191.9M794.5 190.9V191.9M795.5 190.7V191.7M796.5 190.4V192.7M797.5 191.3V192.3M798.5 191.1V192.2M799.5 191.1V192.2M800.5 191.2V192.2M801.5 190.9V191.9M802.5 190.6V192.3M803.5 191.0V192.0M804.5 190.5V191.6M805.5 190.9V191.9M806.5 190.9V192.2M807.5 191.2V192.4M808.5 191.1V192.1M809.5 191.1V192.1M810.5 191.2V192.2M811.5 191.1V192.5M812.5 191.0V192.0M813.5 191.0V192.0M814.5 190.9V192.2M815.5 191.0V192.8M816.5 190.9V192.2M817.5 190.9V191.9M818.5 190.3V192.3M819.5 191.0V192.3M820.5 190.6V192.1M821.5 191.1V192.4M822.5 191.0V192.3M823.5 191.1V192.1M824.5 191.1V192.2M825.5 191.1V192.1M826.5 190.8V191.8M827.5 190.6V191.6M828.5 190.5V192.6M829.5 190.6V192.0M830.5 191.1V192.5M831.5 191.2V192.2M832.5 190.2V192.5M833.5 190.8V192.2M834.5 191.0V192.1M835.5 191.0V192.0M836.5 190.7V192.2M837.5 190.6V191.7M838.5 190.6V192.3M839.5 191.2V192.2M840.5 190.6V192.0M841.5 191.1V192.1M842.5 191.2V192.2M843.5 190.9V192.1M844.5 191.1V192.4M845.5 191.0V192.4M846.5 190.9V191.9M847.5 191.2V192.3M848.5 190.9V192.0M849.5 190.7V191.7M850.5 190.6V192.4M851.5 190.7V191.8M852.5 190.9V192.0M853.5 191.3V192.3M854.5 191.0V192.0M855.5 191.0V192.0M856.5 191.2V192.3M857.5 191.1V192.1M858.5 190.8V191.8M859.5 191.3V192.3M860.5 191.0V192.0M861.5 191.0V192.0M862.5 190.9V191.9M863.5 191.3V192.3M864.5 191.0V192.0M865.5 190.9V192.1M866.5 190.5V191.9M867.5 190.6V191.6M868.5 191.1V192.1M869.5 191.1V192.1M870.5 191.0V192.0M871.5 191.1V192.1M872.5 191.1V192.1M873.5 190.7V192.2M874.5 191.0V192.0M875.5 191.0V192.0M876.5 190.9V192.2M877.5 191.1V192.1M878.5 190.9V191.9M879.5 190.9V191.9M880.5 190.9V191.9M881.5 190.9V191.9M882.5 191.3V192.3M883.5 191.3V192.3M884.5 190.7V192.2M885.5 190.6V192.1M886.5 190.9V191.9M887.5 190.4V192.3M888.5 191.1V192.1M889.5 191.0V192.0M890.5 190.8V191.8M891.5 191.2V192.2M892.5 190.9V192.0M893.5 191.0V192.0M894.5 190.9V191.9M895.5 191.3V192.4M896.5 191.0V192.0M897.5 190.8V191.8M898.5 191.1V192.1" fill="none" stroke="#858585" stroke-width="1.0"/><line x1="140" y1="252" x2="312" y2="252" stroke="#b0b0b0" stroke-width="1.6"/><path d="M312.5 251.5V252.5M313.5 247.8V259.1M314.5 241.8V258.7M315.5 247.8V265.0M316.5 242.0V255.7M317.5 248.7V261.6M318.5 247.0V256.3M319.5 246.1V260.7M320.5 241.4V258.3M321.5 248.4V262.8M322.5 246.1V261.5M323.5 246.5V255.4M324.5 245.8V257.0M325.5 246.8V253.6M326.5 243.9V257.8M327.5 248.2V255.7M328.5 250.5V254.5M329.5 249.4V255.5M330.5 248.6V255.4M331.5 247.7V255.9M332.5 249.0V256.9M333.5 248.2V253.6M334.5 248.7V254.4M335.5 245.3V253.6M336.5 250.3V255.4M337.5 249.5V254.4M338.5 248.6V256.6M339.5 248.1V255.5M340.5 247.3V255.6M341.5 249.6V253.7M342.5 249.0V255.0M343.5 247.2V254.6M344.5 249.3V253.6M345.5 248.6V254.7M346.5 251.6V256.1M347.5 248.3V254.4M348.5 249.2V257.4M349.5 243.1V257.3M350.5 248.9V253.6M351.5 248.4V258.1M352.5 250.0V254.0M353.5 249.4V255.9M354.5 250.7V255.2M355.5 250.5V255.5M356.5 249.4V253.9M357.5 246.7V258.0M358.5 248.2V254.1M359.5 248.5V254.4M360.5 249.7V254.2M361.5 248.1V253.6M362.5 251.5V256.0M363.5 249.0V254.4M364.5 249.8V254.1M365.5 249.4V254.5M366.5 248.7V252.4M367.5 251.3V254.4M368.5 250.6V254.1M369.5 247.9V254.7M370.5 249.5V256.3M371.5 249.6V254.6M372.5 249.3V252.9M373.5 248.2V254.5M374.5 249.4V256.0M375.5 249.5V255.0M376.5 250.2V254.4M377.5 249.5V256.2M378.5 249.4V253.9M379.5 249.0V253.9M380.5 251.2V255.4M381.5 249.0V253.9M382.5 250.5V254.5M383.5 248.4V254.1M384.5 249.6V255.9M385.5 251.0V256.3M386.5 248.3V255.2M387.5 249.0V254.1M388.5 250.7V254.1M389.5 249.2V255.2M390.5 250.5V254.3M391.5 249.5V255.3M392.5 250.1V253.9M393.5 250.6V254.8M394.5 250.1V254.5M395.5 251.0V253.2M396.5 250.2V253.5M397.5 249.0V253.2M398.5 250.0V253.4M399.5 250.4V252.3M400.5 250.2V254.3M401.5 251.5V255.8M402.5 248.5V254.0M403.5 250.0V253.2M404.5 251.6V254.1M405.5 250.7V253.3M406.5 249.4V254.3M407.5 249.0V253.5M408.5 249.5V253.7M409.5 250.4V254.8M410.5 249.7V252.5M411.5 250.7V254.0M412.5 251.6V254.1M413.5 251.1V253.2M414.5 248.9V253.9M415.5 251.2V253.6M416.5 251.5V254.0M417.5 250.2V253.9M418.5 250.4V253.0M419.5 250.6V254.7M420.5 250.0V254.4M421.5 250.4V255.0M422.5 248.6V255.1M423.5 249.5V252.5M424.5 248.8V254.5M425.5 247.9V252.3M426.5 249.2V253.6M427.5 252.0V255.6M428.5 250.6V256.2M429.5 250.0V253.7M430.5 247.6V254.8M431.5 250.3V255.3M432.5 248.4V255.4M433.5 250.6V254.5M434.5 247.8V254.5M435.5 251.5V255.2M436.5 250.1V254.3M437.5 248.6V254.3M438.5 250.2V252.9M439.5 250.4V253.7M440.5 250.1V255.7M441.5 249.4V253.7M442.5 249.7V253.8M443.5 250.7V254.8M444.5 250.4V254.0M445.5 249.7V254.6M446.5 249.7V254.9M447.5 249.9V252.8M448.5 250.4V253.9M449.5 250.6V253.5M450.5 249.5V253.5M451.5 251.5V254.7M452.5 248.9V254.8M453.5 249.7V254.7M454.5 250.2V254.7M455.5 248.7V254.0M456.5 249.3V256.8M457.5 249.1V254.0M458.5 251.2V253.9M459.5 250.2V254.8M460.5 250.0V254.0M461.5 249.5V252.9M462.5 250.3V252.2M463.5 251.8V253.5M464.5 249.9V253.6M465.5 248.9V256.6M466.5 250.1V253.5M467.5 250.1V253.8M468.5 250.3V254.4M469.5 250.4V253.2M470.5 250.9V254.5M471.5 249.3V252.8M472.5 251.1V253.0M473.5 251.5V254.6M474.5 251.7V253.6M475.5 250.7V254.1M476.5 249.9V255.3M477.5 250.3V254.2M478.5 247.6V254.3M479.5 250.0V254.3M480.5 248.4V253.2M481.5 249.6V253.2M482.5 250.7V253.8M483.5 250.7V255.8M484.5 249.9V254.9M485.5 250.0V254.9M486.5 248.7V254.9M487.5 251.5V253.9M488.5 250.6V253.9M489.5 250.2V252.7M490.5 250.6V253.7M491.5 246.4V253.7M492.5 247.4V255.4M493.5 248.5V255.5M494.5 249.6V256.4M495.5 250.7V254.5M496.5 251.5V253.7M497.5 248.7V254.4M498.5 232.8V255.0M499.5 232.3V265.5M500.5 234.1V270.8M501.5 233.2V266.3M502.5 234.6V260.1M503.5 226.0V279.1M504.5 238.5V263.7M505.5 237.2V260.6M506.5 231.1V263.8M507.5 245.3V275.2M508.5 240.0V264.6M509.5 243.4V265.4M510.5 236.3V270.2M511.5 233.0V266.9M512.5 241.8V269.1M513.5 241.3V262.1M514.5 240.1V257.6M515.5 230.8V270.0M516.5 241.9V255.7M517.5 233.5V253.4M518.5 244.0V275.8M519.5 235.9V262.2M520.5 245.6V258.9M521.5 236.5V264.8M522.5 241.4V256.9M523.5 241.8V260.7M524.5 243.6V263.5M525.5 243.6V255.3M526.5 239.3V256.5M527.5 244.1V255.5M528.5 248.7V259.8M529.5 248.7V256.0M530.5 246.6V263.2M531.5 245.0V262.4M532.5 241.6V262.4M533.5 241.9V263.7M534.5 238.2V264.3M535.5 238.5V255.6M536.5 247.2V262.1M537.5 245.8V255.8M538.5 241.5V260.5M539.5 250.6V257.9M540.5 245.5V260.5M541.5 245.8V255.8M542.5 249.3V261.9M543.5 247.7V255.6M544.5 244.8V258.8M545.5 245.5V259.9M546.5 248.5V257.7M547.5 244.9V257.5M548.5 245.5V257.2M549.5 244.8V258.7M550.5 249.2V254.8M551.5 243.3V256.8M552.5 249.5V257.9M553.5 244.9V263.6M554.5 244.1V257.2M555.5 248.5V258.6M556.5 245.9V259.3M557.5 245.1V256.7M558.5 247.4V259.9M559.5 247.2V258.8M560.5 248.0V253.5M561.5 248.8V258.0M562.5 246.8V255.0M563.5 247.5V256.0M564.5 242.7V261.0M565.5 248.4V256.9M566.5 247.9V257.3M567.5 251.2V258.0M568.5 245.7V253.5M569.5 249.2V256.4M570.5 249.3V256.0M571.5 250.7V257.4M572.5 244.4V256.0M573.5 248.3V254.5M574.5 246.9V257.7M575.5 244.6V255.2M576.5 249.0V254.5M577.5 245.6V254.8M578.5 252.3V257.1M579.5 247.6V253.1M580.5 248.8V257.4M581.5 246.5V257.7M582.5 249.6V255.6M583.5 246.3V255.3M584.5 250.1V254.7M585.5 248.2V254.9M586.5 248.1V255.7M587.5 249.1V255.3M588.5 249.5V254.0M589.5 248.5V256.6M590.5 250.4V254.4M591.5 248.6V255.2M592.5 250.4V258.0M593.5 247.3V255.9M594.5 249.9V254.3M595.5 249.4V255.2M596.5 248.0V254.0M597.5 250.4V254.0M598.5 248.6V253.8M599.5 251.4V255.1M600.5 251.0V255.4M601.5 250.2V256.1M602.5 250.7V254.9M603.5 248.5V253.5M604.5 249.5V254.6M605.5 249.5V255.4M606.5 248.8V253.1M607.5 251.0V254.8M608.5 248.7V255.0M609.5 248.5V254.8M610.5 250.0V255.1M611.5 249.5V254.0M612.5 249.7V254.5M613.5 250.4V254.2M614.5 249.6V254.3M615.5 248.7V251.0M616.5 249.4V254.7M617.5 249.9V253.5M618.5 249.9V252.3M619.5 250.6V255.0M620.5 250.8V253.9M621.5 249.8V252.8M622.5 250.7V255.4M623.5 249.9V254.9M624.5 248.9V254.4M625.5 249.5V253.5M626.5 248.9V253.5M627.5 248.8V253.6M628.5 250.8V252.4M629.5 250.7V253.4M630.5 251.1V252.9M631.5 250.0V253.4M632.5 251.2V253.8M633.5 249.1V254.8M634.5 251.0V253.9M635.5 250.0V253.4M636.5 252.1V254.1M637.5 249.9V254.2M638.5 250.7V252.3M639.5 250.4V253.0M640.5 249.9V254.1M641.5 248.8V253.7M642.5 248.1V253.8M643.5 250.1V253.8M644.5 249.8V253.0M645.5 250.8V255.1M646.5 250.6V252.9M647.5 250.0V254.6M648.5 250.4V253.3M649.5 250.4V254.1M650.5 249.4V253.6M651.5 249.9V254.4M652.5 250.1V253.4M653.5 249.8V253.2M654.5 248.5V253.6M655.5 248.9V254.4M656.5 250.2V254.1M657.5 251.1V253.7M658.5 250.9V253.2M659.5 250.8V253.3M660.5 250.4V253.1M661.5 250.8V252.7M662.5 250.7V253.3M663.5 250.4V252.2M664.5 248.9V253.2M665.5 251.3V253.4M666.5 251.2V252.9M667.5 250.6V253.4M668.5 250.3V252.7M669.5 250.6V252.6M670.5 251.7V252.7M671.5 251.0V252.9M672.5 251.5V252.7M673.5 250.8V253.9M674.5 250.2V253.1M675.5 248.8V253.5M676.5 251.1V253.6M677.5 250.6V252.5M678.5 250.8V254.5M679.5 250.2V252.2M680.5 249.9V252.9M681.5 250.9V253.0M682.5 251.6V253.6M683.5 251.4V253.4M684.5 251.5V253.0M685.5 251.2V253.0M686.5 251.0V253.9M687.5 251.6V254.3M688.5 251.9V253.2M689.5 251.4V253.0M690.5 251.0V252.8M691.5 250.9V253.2M692.5 251.3V252.3M693.5 250.5V252.3M694.5 250.9V252.5M695.5 251.3V252.9M696.5 250.4V254.0M697.5 250.1V253.5M698.5 250.5V252.8M699.5 251.5V253.4M700.5 249.1V253.5M701.5 251.5V252.8M702.5 250.4V252.4M703.5 251.4V252.4M704.5 251.6V253.7M705.5 250.9V253.4M706.5 251.3V253.3M707.5 250.7V253.2M708.5 250.9V252.9M709.5 251.2V252.6M710.5 250.8V253.7M711.5 251.8V253.1M712.5 250.7V252.9M713.5 251.0V253.2M714.5 250.5V253.3M715.5 251.0V253.6M716.5 251.0V252.7M717.5 251.1V253.1M718.5 251.1V253.7M719.5 250.1V252.4M720.5 251.3V253.0M721.5 251.3V252.7M722.5 250.3V253.0M723.5 251.3V252.8M724.5 251.3V252.7M725.5 250.5V252.5M726.5 250.2V252.5M727.5 250.3V252.5M728.5 250.5V253.2M729.5 250.1V253.1M730.5 250.6V252.8M731.5 250.5V253.4M732.5 251.2V253.4M733.5 251.3V252.4M734.5 251.3V253.2M735.5 250.5V252.9M736.5 250.8V253.3M737.5 250.7V253.8M738.5 251.5V252.9M739.5 251.1V253.4M740.5 251.5V252.9M741.5 251.5V252.9M742.5 251.4V253.2M743.5 251.4V253.1M744.5 250.9V253.4M745.5 250.7V252.9M746.5 251.6V253.4M747.5 251.2V252.6M748.5 251.4V253.2M749.5 251.4V252.9M750.5 250.7V252.4M751.5 251.2V252.7M752.5 251.8V252.9M753.5 251.0V253.5M754.5 250.8V253.1M755.5 250.9V253.7M756.5 251.3V252.5M757.5 250.6V252.6M758.5 251.0V252.7M759.5 251.6V252.6M760.5 251.7V252.7M761.5 251.5V252.5M762.5 251.3V253.9M763.5 251.3V252.4M764.5 251.1V252.4M765.5 250.9V253.1M766.5 252.0V253.6M767.5 251.4V253.3M768.5 250.3V253.0M769.5 251.1V252.1M770.5 251.1V253.0M771.5 250.5V253.3M772.5 251.2V252.8M773.5 251.6V252.8M774.5 251.2V253.4M775.5 250.7V252.6M776.5 251.5V253.0M777.5 250.9V252.4M778.5 251.0V253.1M779.5 251.3V252.8M780.5 251.3V252.9M781.5 250.7V253.7M782.5 250.7V253.2M783.5 251.7V252.7M784.5 251.1V253.4M785.5 251.1V252.7M786.5 250.9V253.1M787.5 251.3V252.6M788.5 251.8V253.0M789.5 251.4V253.0M790.5 251.3V252.3M791.5 251.4V253.3M792.5 251.5V252.6M793.5 251.7V253.2M794.5 250.6V252.7M795.5 251.5V253.2M796.5 250.7V252.8M797.5 251.6V253.4M798.5 251.3V252.8M799.5 251.3V252.3M800.5 251.2V252.2M801.5 251.3V252.7M802.5 251.2V252.9M803.5 251.5V252.8M804.5 251.4V252.8M805.5 251.5V252.5M806.5 251.2V253.2M807.5 251.1V252.8M808.5 251.5V252.7M809.5 251.0V252.9M810.5 251.1V252.7M811.5 251.1V253.1M812.5 251.5V252.8M813.5 250.7V252.7M814.5 251.4V252.6M815.5 251.1V252.5M816.5 251.4V252.4M817.5 251.3V252.4M818.5 251.0V252.9M819.5 251.1V252.9M820.5 251.2V252.7M821.5 251.4V253.0M822.5 251.3V252.3M823.5 251.5V252.9M824.5 250.9V252.7M825.5 251.0V252.4M826.5 251.5V252.5M827.5 250.8V252.5M828.5 251.6V252.6M829.5 251.5V252.7M830.5 250.9V252.3M831.5 251.4V252.8M832.5 251.0V252.6M833.5 251.0V252.4M834.5 251.6V252.6M835.5 251.5V252.6M836.5 251.5V252.9M837.5 251.5V252.9M838.5 251.6V252.6M839.5 251.5V252.5M840.5 251.5V252.5M841.5 251.1V252.4M842.5 250.9V252.3M843.5 251.2V252.6M844.5 251.4V252.4M845.5 251.4V252.5M846.5 251.4V252.7M847.5 251.7V252.8M848.5 251.0V252.7M849.5 251.6V252.8M850.5 250.7V252.9M851.5 251.4V252.6M852.5 251.2V252.2M853.5 251.1V252.2M854.5 251.5V252.6M855.5 251.8V253.0M856.5 251.3V252.5M857.5 251.5V252.6M858.5 251.3V252.6M859.5 251.7V252.7M860.5 251.8V252.8M861.5 251.1V252.8M862.5 251.8V252.8M863.5 251.4V252.4M864.5 251.6V253.1M865.5 251.2V252.9M866.5 250.6V252.2M867.5 251.0V252.8M868.5 251.3V252.6M869.5 251.6V252.7M870.5 251.3V252.6M871.5 251.1V252.6M872.5 251.7V253.1M873.5 251.4V253.3M874.5 251.5V253.0M875.5 251.0V252.7M876.5 250.6V252.6M877.5 251.8V252.8M878.5 251.2V252.2M879.5 251.2V252.7M880.5 251.4V252.4M881.5 251.1V252.4M882.5 251.7V252.9M883.5 251.3V252.3M884.5 251.3V252.3M885.5 251.0V252.1M886.5 251.5V252.5M887.5 251.5V252.6M888.5 251.8V252.8M889.5 251.4V253.1M890.5 251.2V252.4M891.5 250.4V253.0M892.5 251.4V252.6M893.5 251.2V252.9M894.5 251.6V252.8M895.5 251.3V252.5M896.5 251.4V252.6M897.5 251.3V252.7M898.5 251.6V252.6" fill="none" stroke="#858585" stroke-width="1.0"/></svg>
<svg style="left:0;top:0" width="1192" height="827"><rect x="140.5" y="96.5" width="759" height="58" fill="none" stroke="#111" stroke-width="1" stroke-dasharray="4,2"/><rect x="309.5" y="96.5" width="8" height="94" fill="none" stroke="#111" stroke-width="1" stroke-dasharray="4,2"/><line x1="313.5" y1="96" x2="313.5" y2="191" stroke="#b01010" stroke-width="1.1"/><line x1="497.5" y1="96" x2="497.5" y2="191" stroke="#b01010" stroke-width="1.1"/><line x1="493.6" y1="96" x2="493.6" y2="191" stroke="#3aa0e0" stroke-width="1" stroke-dasharray="1,2"/><line x1="501" y1="96" x2="501" y2="191" stroke="#3aa0e0" stroke-width="1" stroke-dasharray="1,2"/><line x1="311.5" y1="191" x2="311.5" y2="286" stroke="#1010a0" stroke-width="1.1"/><line x1="498.5" y1="191" x2="498.5" y2="286" stroke="#1010a0" stroke-width="1.1"/><line x1="140" y1="293.5" x2="899" y2="293.5" stroke="#111" stroke-width="1.3"/><line x1="155.6" y1="293.5" x2="155.6" y2="299" stroke="#111" stroke-width="1.2"/><line x1="184.0" y1="293.5" x2="184.0" y2="299" stroke="#111" stroke-width="1.2"/><line x1="212.5" y1="293.5" x2="212.5" y2="299" stroke="#111" stroke-width="1.2"/><line x1="240.9" y1="293.5" x2="240.9" y2="299" stroke="#111" stroke-width="1.2"/><line x1="269.3" y1="293.5" x2="269.3" y2="299" stroke="#111" stroke-width="1.2"/><line x1="297.8" y1="293.5" x2="297.8" y2="302.5" stroke="#111" stroke-width="1.2"/><line x1="326.2" y1="293.5" x2="326.2" y2="299" stroke="#111" stroke-width="1.2"/><line x1="354.6" y1="293.5" x2="354.6" y2="299" stroke="#111" stroke-width="1.2"/><line x1="383.0" y1="293.5" x2="383.0" y2="299" stroke="#111" stroke-width="1.2"/><line x1="411.5" y1="293.5" x2="411.5" y2="299" stroke="#111" stroke-width="1.2"/><line x1="439.9" y1="293.5" x2="439.9" y2="299" stroke="#111" stroke-width="1.2"/><line x1="468.3" y1="293.5" x2="468.3" y2="302.5" stroke="#111" stroke-width="1.2"/><line x1="496.8" y1="293.5" x2="496.8" y2="299" stroke="#111" stroke-width="1.2"/><line x1="525.2" y1="293.5" x2="525.2" y2="299" stroke="#111" stroke-width="1.2"/><line x1="553.6" y1="293.5" x2="553.6" y2="299" stroke="#111" stroke-width="1.2"/><line x1="582.0" y1="293.5" x2="582.0" y2="299" stroke="#111" stroke-width="1.2"/><line x1="610.5" y1="293.5" x2="610.5" y2="299" stroke="#111" stroke-width="1.2"/><line x1="638.9" y1="293.5" x2="638.9" y2="302.5" stroke="#111" stroke-width="1.2"/><line x1="667.3" y1="293.5" x2="667.3" y2="299" stroke="#111" stroke-width="1.2"/><line x1="695.8" y1="293.5" x2="695.8" y2="299" stroke="#111" stroke-width="1.2"/><line x1="724.2" y1="293.5" x2="724.2" y2="299" stroke="#111" stroke-width="1.2"/><line x1="752.6" y1="293.5" x2="752.6" y2="299" stroke="#111" stroke-width="1.2"/><line x1="781.1" y1="293.5" x2="781.1" y2="299" stroke="#111" stroke-width="1.2"/><line x1="809.5" y1="293.5" x2="809.5" y2="302.5" stroke="#111" stroke-width="1.2"/><line x1="837.9" y1="293.5" x2="837.9" y2="299" stroke="#111" stroke-width="1.2"/><line x1="866.3" y1="293.5" x2="866.3" y2="299" stroke="#111" stroke-width="1.2"/><line x1="894.8" y1="293.5" x2="894.8" y2="299" stroke="#111" stroke-width="1.2"/></svg>
<div class="t" style="left:315.5px;top:97.73px;font-size:13px;color:#b01010;letter-spacing:1.742px;">P&lt;A&gt;</div>
<div class="t" style="left:500px;top:97.73px;font-size:13px;color:#b01010;letter-spacing:1.786px;">S&lt;L&gt;</div>
<div class="t" style="left:313px;top:273.69px;font-size:12.5px;color:#1010a0;letter-spacing:0px;">P</div>
<div class="t" style="left:500px;top:273.69px;font-size:12.5px;color:#1010a0;letter-spacing:0px;">S</div>
<div class="a" style="left:269.7px;top:305px;width:55.6px;height:18px;overflow:hidden;"><div class="t" style="left:0;top:1.03px;font-size:14px;letter-spacing:0.487px;color:#31363b;">16:54:00</div></div>
<div class="a" style="left:440.4px;top:305px;width:55.6px;height:18px;overflow:hidden;"><div class="t" style="left:0;top:1.03px;font-size:14px;letter-spacing:0.487px;color:#31363b;">16:54:30</div></div>
<div class="a" style="left:611.4px;top:305px;width:55.6px;height:18px;overflow:hidden;"><div class="t" style="left:0;top:1.03px;font-size:14px;letter-spacing:0.487px;color:#31363b;">16:55:00</div></div>
<div class="a" style="left:782.4px;top:305px;width:55.6px;height:18px;overflow:hidden;"><div class="t" style="left:0;top:1.03px;font-size:14px;letter-spacing:0.487px;color:#31363b;">16:55:30</div></div>
<div class="t" style="left:298px;top:327.33px;font-size:14px;color:#31363b;letter-spacing:0.394px;transform:translateX(calc(-50% + 0.197px));">2022-03-17</div>
<div class="a" style="left:17px;top:303px;width:32px;height:32px;background:#eff0f1;border-top:1px solid #fff;border-left:1px solid #fff;border-right:1px solid #111;border-bottom:1px solid #111;"></div>
<div class="a" style="left:57px;top:303px;width:32px;height:32px;background:#eff0f1;border-top:1px solid #fff;border-left:1px solid #fff;border-right:1px solid #111;border-bottom:1px solid #111;"></div>
<div class="a" style="left:97px;top:303px;width:32px;height:32px;background:#eff0f1;border-top:1px solid #fff;border-left:1px solid #fff;border-right:1px solid #111;border-bottom:1px solid #111;"></div>
<svg style="left:20px;top:308px" width="26" height="22" viewBox="0 0 26 22">
<defs><linearGradient id="gchk" x1="0" y1="0" x2="0" y2="1"><stop offset="0" stop-color="#30f030"/><stop offset="1" stop-color="#089008"/></linearGradient></defs>
<path d="M1 3.6 L8.6 10.6 L24.7 2 L6.1 19.7 Z" fill="url(#gchk)" stroke="#0a8a0a" stroke-width="0.5" stroke-linejoin="round"/></svg>
<svg style="left:60px;top:307px" width="26" height="26" viewBox="0 0 26 26">
<defs><radialGradient id="grx" cx="0.5" cy="0.3" r="0.7"><stop offset="0" stop-color="#ff8080"/><stop offset="0.6" stop-color="#d01010"/><stop offset="1" stop-color="#900000"/></radialGradient></defs>
<circle cx="13" cy="13" r="12" fill="url(#grx)" stroke="#a01010" stroke-width="0.6"/>
<path d="M8 8 L18 18 M18 8 L8 18" stroke="#fff" stroke-width="3.4" stroke-linecap="round"/></svg>
<svg style="left:100px;top:309px" width="26" height="20" viewBox="0 0 26 20">
<defs><linearGradient id="gtag" x1="0" y1="0" x2="1" y2="0"><stop offset="0" stop-color="#000"/><stop offset="0.6" stop-color="#111"/><stop offset="1" stop-color="#9a9a9a"/></linearGradient></defs>
<path d="M2.8 2 L16.5 2 L23.7 9.8 L16.5 17.7 L2.8 17.7 Z" fill="url(#gtag)"/>
<path d="M7.5 6.5 L13 12.5 M13 6.5 L7.5 12.5" stroke="#fff" stroke-width="2.4" stroke-linecap="round"/></svg>
<div class="a" style="left:7px;top:357px;width:902px;height:282px;background:#fff;border-top:1px solid #d6d6d6;border-left:1px solid #d6d6d6;border-right:1px solid #fafafa;border-bottom:1px solid #fafafa;"></div>
<div class="a" style="left:8px;top:358px;width:900px;height:280px;background:#fff;border-top:1px solid #111;border-left:1px solid #111;border-right:1px solid #ececec;border-bottom:1px solid #ececec;"></div>
<div class="a" style="left:9px;top:365px;width:875px;height:212px;overflow:hidden;">
<div class="a" style="left:108px;top:0px;width:17px;height:35.6px;background:linear-gradient(to right,#f0f0f0,#5aa85a 55%,#007800);"></div>
<div class="t" style="left:6px;top:0.23px;font-size:14px;color:#232627;letter-spacing:1.276px;font-weight:bold;">PB19</div>
<div class="t" style="left:62.5px;top:0.23px;font-size:14px;color:#232627;letter-spacing:-0.505px;">CX</div>
<div class="t" style="left:106.5px;top:19.63px;font-size:14px;color:#8f9193;letter-spacing:0.493px;transform:translateX(-100%);">165.380 km</div>
<div class="a" style="left:131px;top:38px;width:250px;height:36px;background:#3daee9;"></div>
<div class="a" style="left:381px;top:38px;width:360px;height:36px;background:#cdcdfa;"></div>
<div class="a" style="left:741px;top:38px;width:134px;height:36px;background:#3daee9;"></div>
<div class="a" style="left:108px;top:38px;width:17px;height:35.6px;background:linear-gradient(to right,#f0f0f0,#5aa85a 55%,#007800);"></div>
<div class="t" style="left:6px;top:38.23px;font-size:14px;color:#232627;letter-spacing:1.276px;font-weight:bold;">PB06</div>
<div class="t" style="left:62.5px;top:38.23px;font-size:14px;color:#232627;letter-spacing:-0.505px;">CX</div>
<div class="t" style="left:106.5px;top:57.63px;font-size:14px;color:#8f9193;letter-spacing:0.493px;transform:translateX(-100%);">230.327 km</div>
<div class="a" style="left:108px;top:76px;width:17px;height:35.6px;background:linear-gradient(to right,#f0f0f0,#5aa85a 55%,#007800);"></div>
<div class="t" style="left:6px;top:76.23px;font-size:14px;color:#232627;letter-spacing:1.276px;font-weight:bold;">PB09</div>
<div class="t" style="left:62.5px;top:76.23px;font-size:14px;color:#232627;letter-spacing:-0.505px;">CX</div>
<div class="t" style="left:106.5px;top:95.63px;font-size:14px;color:#8f9193;letter-spacing:0.493px;transform:translateX(-100%);">276.383 km</div>
<div class="a" style="left:131px;top:113px;width:744px;height:35px;background:#f5f5f5;"></div>
<div class="a" style="left:108px;top:113px;width:17px;height:35.6px;background:linear-gradient(to right,#f0f0f0,#5aa85a 55%,#007800);"></div>
<div class="t" style="left:6px;top:113.23px;font-size:14px;color:#232627;letter-spacing:1.276px;font-weight:bold;">PB05</div>
<div class="t" style="left:62.5px;top:113.23px;font-size:14px;color:#232627;letter-spacing:-0.505px;">CX</div>
<div class="t" style="left:106.5px;top:132.63px;font-size:14px;color:#8f9193;letter-spacing:0.493px;transform:translateX(-100%);">280.005 km</div>
<div class="a" style="left:108px;top:150px;width:17px;height:35.6px;background:linear-gradient(to right,#f0eeee,#c08060 55%,#9a3000);"></div>
<div class="t" style="left:6px;top:150.23px;font-size:14px;color:#232627;letter-spacing:1.276px;font-weight:bold;">PB14</div>
<div class="t" style="left:62.5px;top:150.23px;font-size:14px;color:#232627;letter-spacing:-0.505px;">CX</div>
<div class="t" style="left:106.5px;top:169.63px;font-size:14px;color:#8f9193;letter-spacing:0.493px;transform:translateX(-100%);">291.690 km</div>
<div class="a" style="left:131px;top:187px;width:744px;height:35px;background:#f5f5f5;"></div>
<div class="a" style="left:108px;top:187px;width:17px;height:35.6px;background:linear-gradient(to right,#f0f0f0,#5aa85a 55%,#007800);"></div>
<div class="t" style="left:6px;top:187.23px;font-size:14px;color:#232627;letter-spacing:1.276px;font-weight:bold;">PB10</div>
<div class="t" style="left:62.5px;top:187.23px;font-size:14px;color:#232627;letter-spacing:-0.505px;">CX</div>
<div class="t" style="left:106.5px;top:206.63px;font-size:14px;color:#8f9193;letter-spacing:0.493px;transform:translateX(-100%);">295.935 km</div>
</div>
<svg style="left:0;top:0" width="1192" height="827"><defs><clipPath id="rowclip"><rect x="140" y="365" width="744" height="212"/></clipPath></defs><g clip-path="url(#rowclip)"><line x1="142.3" y1="365" x2="142.3" y2="577" stroke="#d0d0d0" stroke-width="1" stroke-dasharray="4,3"/><line x1="304" y1="365" x2="304" y2="577" stroke="#d0d0d0" stroke-width="1" stroke-dasharray="4,3"/><line x1="465.7" y1="365" x2="465.7" y2="577" stroke="#d0d0d0" stroke-width="1" stroke-dasharray="4,3"/><line x1="627.4" y1="365" x2="627.4" y2="577" stroke="#d0d0d0" stroke-width="1" stroke-dasharray="4,3"/><line x1="789.1" y1="365" x2="789.1" y2="577" stroke="#d0d0d0" stroke-width="1" stroke-dasharray="4,3"/><line x1="140" y1="384.1" x2="455" y2="384.1" stroke="#a8a8a8" stroke-width="1"/><path d="M455.5 383.6V384.6M456.5 381.7V392.0M457.5 380.5V391.0M458.5 381.2V389.7M459.5 380.3V387.4M460.5 380.3V387.2M461.5 380.4V389.0M462.5 379.8V389.5M463.5 379.7V388.1M464.5 373.9V391.7M465.5 382.6V387.8M466.5 378.5V388.8M467.5 381.0V389.9M468.5 376.6V388.5M469.5 380.3V387.8M470.5 379.8V386.4M471.5 384.6V388.3M472.5 380.2V389.4M473.5 380.7V385.0M474.5 380.0V386.6M475.5 381.9V386.6M476.5 380.4V386.6M477.5 382.2V386.9M478.5 381.6V387.4M479.5 380.4V386.8M480.5 380.0V387.3M481.5 380.3V386.2M482.5 383.4V389.9M483.5 380.9V385.8M484.5 381.8V387.0M485.5 379.9V387.1M486.5 381.8V388.1M487.5 380.7V386.3M488.5 379.1V384.8M489.5 376.2V388.2M490.5 380.5V386.9M491.5 382.4V385.6M492.5 382.8V387.4M493.5 380.1V385.6M494.5 380.8V387.5M495.5 383.8V387.8M496.5 382.5V386.8M497.5 379.7V390.0M498.5 380.5V387.0M499.5 381.7V388.1M500.5 380.1V386.0M501.5 382.1V388.5M502.5 383.7V387.1M503.5 380.6V388.4M504.5 382.5V386.7M505.5 379.4V389.1M506.5 383.4V386.8M507.5 381.6V385.3M508.5 382.1V387.7M509.5 381.6V386.0M510.5 381.4V386.2M511.5 380.3V387.8M512.5 381.9V386.0M513.5 382.7V385.8M514.5 381.9V384.5M515.5 382.8V385.5M516.5 381.6V386.6M517.5 379.9V384.4M518.5 381.2V385.6M519.5 383.0V385.5M520.5 381.8V387.1M521.5 380.5V385.7M522.5 381.7V385.7M523.5 380.9V388.8M524.5 381.5V388.8M525.5 382.5V387.7M526.5 382.7V388.6M527.5 381.4V386.2M528.5 382.6V385.9M529.5 381.3V387.3M530.5 379.9V385.5M531.5 380.1V390.8M532.5 381.7V386.3M533.5 375.9V387.4M534.5 381.7V386.6M535.5 376.5V388.9M536.5 378.5V395.1M537.5 378.9V396.5M538.5 377.9V393.7M539.5 377.5V397.9M540.5 383.4V395.9M541.5 376.9V393.6M542.5 379.0V397.3M543.5 372.3V394.7M544.5 372.5V392.8M545.5 366.0V396.3M546.5 374.2V390.6M547.5 368.5V395.1M548.5 378.8V399.3M549.5 371.1V395.1M550.5 376.1V392.1M551.5 375.5V393.9M552.5 375.8V395.1M553.5 376.5V396.9M554.5 374.1V396.2M555.5 383.5V390.6M556.5 381.9V391.6M557.5 375.8V391.8M558.5 377.8V393.8M559.5 371.9V388.7M560.5 377.5V392.5M561.5 375.5V392.2M562.5 381.4V387.5M563.5 377.7V386.3M564.5 380.0V386.0M565.5 378.3V391.1M566.5 383.1V389.5M567.5 375.8V387.5M568.5 377.6V385.9M569.5 378.4V390.2M570.5 377.2V395.4M571.5 378.7V393.6M572.5 379.0V390.8M573.5 379.5V383.0M574.5 377.9V389.8M575.5 382.2V387.5M576.5 375.1V393.8M577.5 377.7V386.3M578.5 382.7V389.0M579.5 382.9V385.8M580.5 378.4V389.3M581.5 380.4V386.7M582.5 382.2V388.5M583.5 381.2V384.7M584.5 380.1V389.7M585.5 381.7V389.7M586.5 379.3V389.7M587.5 379.1V388.3M588.5 381.5V387.6M589.5 379.6V388.0M590.5 381.5V387.0M591.5 381.7V390.0M592.5 378.8V388.4M593.5 383.1V387.4M594.5 381.8V385.6M595.5 376.7V388.1M596.5 378.4V389.2M597.5 380.8V389.4M598.5 380.3V385.1M599.5 381.9V387.2M600.5 382.2V389.0M601.5 381.5V385.6M602.5 381.6V386.8M603.5 381.5V386.9M604.5 383.7V388.0M605.5 379.9V388.5M606.5 379.6V386.4M607.5 381.7V387.6M608.5 381.6V386.5M609.5 378.5V388.2M610.5 381.9V386.0M611.5 382.1V384.7M612.5 381.3V387.8M613.5 381.5V388.8M614.5 381.0V387.1M615.5 379.5V387.2M616.5 379.1V389.8M617.5 380.4V387.8M618.5 380.4V387.0M619.5 381.3V388.6M620.5 382.0V387.9M621.5 381.7V386.2M622.5 381.5V384.5M623.5 383.9V387.2M624.5 378.6V385.9M625.5 380.0V386.3M626.5 381.7V388.3M627.5 381.4V385.2M628.5 382.6V387.2M629.5 382.7V385.0M630.5 382.9V386.0M631.5 380.6V386.2M632.5 382.4V385.8M633.5 382.1V386.7M634.5 381.3V385.0M635.5 382.2V385.3M636.5 381.8V386.6M637.5 381.4V386.5M638.5 383.0V385.8M639.5 381.6V386.5M640.5 382.4V386.6M641.5 381.9V385.8M642.5 380.4V385.9M643.5 382.6V387.0M644.5 382.9V386.2M645.5 382.4V385.2M646.5 382.8V384.7M647.5 382.3V386.0M648.5 383.0V385.9M649.5 383.0V385.0M650.5 381.6V385.2M651.5 382.5V386.2M652.5 382.8V385.1M653.5 383.2V384.9M654.5 383.0V384.4M655.5 383.7V385.3M656.5 382.8V385.4M657.5 383.0V384.8M658.5 383.1V385.4M659.5 382.7V386.3M660.5 383.3V385.0M661.5 382.2V384.7M662.5 383.9V385.8M663.5 383.0V384.7M664.5 382.2V384.7M665.5 382.2V384.9M666.5 383.0V384.5M667.5 383.6V385.6M668.5 383.3V385.3M669.5 383.3V384.9M670.5 383.8V384.8M671.5 383.1V384.9M672.5 382.2V384.6M673.5 383.2V384.9M674.5 381.9V385.9M675.5 383.1V386.4M676.5 383.4V385.8M677.5 383.0V385.4M678.5 383.1V384.9M679.5 382.5V385.6M680.5 383.2V384.8M681.5 383.5V385.0M682.5 382.5V384.8M683.5 383.1V384.8M684.5 383.5V384.8M685.5 383.2V385.0M686.5 383.6V384.6M687.5 382.8V385.0M688.5 383.6V385.0M689.5 382.9V384.8M690.5 383.2V385.6M691.5 383.4V384.7M692.5 383.7V384.7M693.5 383.4V384.4M694.5 383.3V384.5M695.5 383.3V384.6M696.5 383.5V384.5M697.5 383.6V385.8M698.5 383.1V385.0M699.5 383.7V384.8M700.5 382.9V384.8M701.5 382.9V385.0M702.5 383.2V384.9M703.5 382.9V385.2M704.5 382.8V384.9M705.5 383.9V384.9M706.5 383.6V384.6M707.5 383.7V384.8M708.5 383.6V384.8M709.5 382.8V384.9M710.5 383.3V385.1M711.5 383.6V384.8M712.5 383.6V384.8M713.5 383.3V384.4M714.5 383.5V384.5M715.5 383.5V384.5M716.5 383.1V385.0M717.5 383.7V384.8M718.5 383.9V385.1M719.5 383.7V384.9M720.5 383.5V384.6M721.5 383.6V385.9M722.5 383.6V384.8M723.5 383.6V384.7M724.5 383.1V384.6M725.5 383.4V384.4M726.5 383.5V384.5M727.5 383.8V384.8M728.5 383.8V384.8M729.5 383.8V384.8M730.5 383.3V384.5M731.5 383.4V384.4M732.5 383.5V384.5M733.5 383.8V384.8M734.5 383.6V384.6M735.5 383.2V384.5M736.5 383.0V384.2M737.5 383.2V385.4M738.5 384.0V385.1M739.5 383.3V384.8M740.5 383.7V385.1M741.5 383.6V384.6M742.5 383.6V385.0M743.5 383.8V384.9M744.5 383.5V384.7M745.5 383.6V384.8M746.5 383.4V385.0M747.5 384.0V385.0M748.5 383.9V385.0M749.5 383.6V384.6M750.5 383.5V384.9M751.5 383.6V384.6M752.5 383.5V384.7M753.5 383.6V384.6M754.5 383.3V384.3M755.5 383.4V384.6M756.5 383.3V384.8M757.5 383.5V384.5M758.5 383.3V384.3M759.5 383.6V384.6M760.5 383.7V384.7M761.5 383.5V384.5M762.5 383.3V384.5M763.5 383.5V384.5M764.5 383.6V384.6M765.5 383.6V384.6M766.5 383.5V384.5M767.5 383.5V384.5M768.5 383.6V384.6M769.5 383.7V384.7M770.5 383.4V384.8M771.5 383.5V384.5M772.5 383.4V384.5M773.5 383.8V384.9M774.5 383.5V384.6M775.5 383.5V384.5M776.5 383.7V384.7M777.5 383.7V384.7M778.5 383.5V384.6M779.5 383.3V384.3M780.5 383.8V384.8M781.5 383.6V384.6M782.5 383.8V384.9M783.5 383.4V384.4M784.5 383.6V384.6M785.5 383.7V384.9M786.5 383.6V384.6M787.5 383.5V384.7M788.5 383.3V384.8M789.5 383.6V384.7M790.5 383.7V384.7M791.5 383.6V384.6M792.5 383.1V384.6M793.5 383.6V384.6M794.5 383.5V384.5M795.5 383.6V384.6M796.5 383.1V384.6M797.5 383.5V385.0M798.5 383.5V385.1M799.5 383.6V384.7M800.5 383.6V384.6M801.5 383.6V384.6M802.5 383.6V384.6M803.5 383.7V384.7M804.5 383.5V384.5M805.5 383.6V384.6M806.5 383.7V384.7M807.5 383.5V384.5M808.5 383.4V384.5M809.5 383.4V385.0M810.5 383.5V384.5M811.5 383.6V384.6M812.5 383.4V384.4M813.5 383.8V384.8M814.5 383.7V384.7M815.5 383.5V384.5M816.5 383.5V384.5M817.5 383.8V384.8M818.5 383.5V384.5M819.5 383.6V384.6M820.5 383.5V384.6M821.5 383.5V384.5M822.5 383.6V384.6M823.5 383.7V384.8M824.5 383.6V384.6M825.5 383.6V384.6M826.5 383.5V384.5M827.5 383.5V384.5M828.5 383.6V384.6M829.5 383.6V384.6M830.5 383.6V384.6M831.5 383.4V384.4M832.5 383.6V384.6M833.5 383.8V384.9M834.5 383.5V384.5M835.5 383.4V384.4M836.5 383.7V384.7M837.5 383.6V384.7M838.5 383.6V384.6M839.5 383.7V384.7M840.5 383.6V385.1M841.5 383.2V384.4M842.5 383.7V384.7M843.5 383.5V384.5M844.5 383.7V384.9M845.5 383.6V384.9M846.5 383.6V384.6M847.5 383.7V384.7M848.5 383.6V384.6M849.5 383.5V384.5M850.5 383.6V384.6M851.5 384.0V385.0M852.5 383.6V384.6M853.5 383.5V384.5M854.5 383.5V384.5M855.5 383.7V384.7M856.5 383.6V384.6M857.5 383.6V384.6M858.5 383.7V384.7M859.5 383.6V384.6M860.5 383.6V384.6M861.5 383.5V384.7M862.5 383.5V384.5M863.5 383.5V384.5M864.5 383.7V384.7M865.5 383.5V384.5M866.5 383.5V385.0M867.5 383.4V384.4M868.5 383.7V384.7M869.5 383.7V384.7M870.5 383.7V384.7M871.5 383.6V384.6M872.5 383.9V384.9M873.5 383.7V384.7M874.5 383.5V384.5M875.5 383.4V384.8M876.5 383.4V384.5M877.5 383.0V385.1M878.5 383.5V384.5M879.5 383.5V384.8M880.5 383.7V384.7M881.5 383.6V384.6M882.5 383.7V384.7M883.5 383.6V384.6" fill="none" stroke="#858585" stroke-width="1.0"/><line x1="140" y1="420" x2="472" y2="420" stroke="#a8a8a8" stroke-width="1"/><path d="M472.5 419.5V420.5M473.5 415.0V427.1M474.5 414.6V425.8M475.5 416.6V432.8M476.5 416.2V425.2M477.5 416.8V421.6M478.5 415.7V421.5M479.5 414.9V422.8M480.5 417.2V421.8M481.5 415.8V422.6M482.5 417.5V423.7M483.5 417.0V422.8M484.5 416.5V423.2M485.5 415.4V425.1M486.5 416.0V422.9M487.5 417.5V422.5M488.5 417.7V422.5M489.5 415.4V421.3M490.5 415.9V426.1M491.5 417.0V422.6M492.5 417.0V421.2M493.5 417.5V422.6M494.5 418.8V422.7M495.5 418.8V423.3M496.5 416.4V424.1M497.5 418.3V422.0M498.5 417.1V423.4M499.5 417.7V420.6M500.5 418.5V421.0M501.5 417.8V422.8M502.5 418.6V423.1M503.5 418.1V423.4M504.5 418.2V422.8M505.5 417.7V423.9M506.5 418.1V423.2M507.5 417.0V424.5M508.5 417.7V422.2M509.5 417.8V421.9M510.5 418.6V422.5M511.5 419.3V423.5M512.5 418.3V421.9M513.5 418.5V422.4M514.5 416.9V422.0M515.5 417.4V423.0M516.5 418.0V421.4M517.5 418.5V421.8M518.5 418.0V422.4M519.5 417.8V423.3M520.5 417.5V422.8M521.5 417.5V422.8M522.5 417.1V422.2M523.5 417.1V421.0M524.5 419.1V421.8M525.5 414.3V422.2M526.5 417.4V422.1M527.5 416.5V421.2M528.5 418.5V421.7M529.5 417.6V422.0M530.5 418.4V422.1M531.5 417.7V420.9M532.5 415.9V421.9M533.5 417.1V422.0M534.5 419.0V422.3M535.5 416.3V421.5M536.5 415.7V421.9M537.5 416.6V421.7M538.5 416.9V421.6M539.5 416.6V423.9M540.5 418.0V422.5M541.5 417.7V423.2M542.5 417.4V422.2M543.5 416.8V422.8M544.5 418.2V422.0M545.5 418.3V422.8M546.5 418.5V421.5M547.5 418.6V423.5M548.5 419.9V422.3M549.5 418.5V421.0M550.5 418.5V422.2M551.5 418.7V421.5M552.5 418.6V423.3M553.5 418.9V422.3M554.5 419.0V421.0M555.5 418.2V420.9M556.5 417.3V422.2M557.5 418.0V421.9M558.5 418.5V422.1M559.5 417.9V421.5M560.5 415.7V425.2M561.5 415.0V430.3M562.5 413.4V430.0M563.5 410.9V429.9M564.5 415.0V428.3M565.5 410.2V425.2M566.5 404.4V421.7M567.5 404.9V425.4M568.5 412.7V433.0M569.5 405.5V431.5M570.5 409.5V419.6M571.5 410.3V430.6M572.5 416.2V428.9M573.5 416.8V427.7M574.5 418.6V430.0M575.5 408.9V425.3M576.5 407.4V428.2M577.5 413.8V425.6M578.5 419.1V424.9M579.5 413.9V424.6M580.5 416.2V428.7M581.5 417.0V425.3M582.5 416.4V424.0M583.5 418.4V423.1M584.5 417.2V423.5M585.5 416.0V422.0M586.5 420.0V426.0M587.5 419.1V424.1M588.5 414.1V423.7M589.5 417.2V424.1M590.5 416.9V422.5M591.5 416.8V422.1M592.5 417.3V425.9M593.5 416.1V424.2M594.5 413.8V428.3M595.5 417.0V425.1M596.5 415.2V420.9M597.5 416.9V422.6M598.5 416.9V423.6M599.5 418.8V421.3M600.5 420.3V427.5M601.5 415.2V425.6M602.5 415.5V422.1M603.5 418.6V424.3M604.5 417.5V426.2M605.5 416.7V424.6M606.5 414.4V424.3M607.5 416.5V421.1M608.5 415.7V422.8M609.5 417.6V425.2M610.5 418.6V424.3M611.5 417.2V423.5M612.5 417.3V423.2M613.5 417.7V420.8M614.5 418.1V424.0M615.5 417.3V422.3M616.5 417.6V423.5M617.5 416.8V421.2M618.5 417.4V424.1M619.5 417.7V421.5M620.5 416.2V422.2M621.5 418.4V422.4M622.5 418.2V421.5M623.5 417.1V422.4M624.5 418.3V420.8M625.5 418.8V422.3M626.5 418.8V421.9M627.5 418.2V420.8M628.5 418.6V422.2M629.5 419.4V421.8M630.5 419.5V421.4M631.5 418.4V422.2M632.5 418.7V421.5M633.5 419.0V422.6M634.5 417.6V422.2M635.5 417.1V422.2M636.5 419.1V422.4M637.5 418.4V421.2M638.5 418.1V420.4M639.5 419.0V420.7M640.5 417.0V420.7M641.5 419.2V420.7M642.5 418.2V420.5M643.5 418.8V423.3M644.5 418.3V420.9M645.5 418.9V420.7M646.5 418.7V421.6M647.5 417.9V420.8M648.5 418.6V420.8M649.5 418.3V421.4M650.5 417.3V421.7M651.5 417.3V421.8M652.5 418.3V420.8M653.5 417.6V422.3M654.5 418.0V422.9M655.5 417.8V421.1M656.5 417.3V421.4M657.5 419.5V421.0M658.5 419.4V420.4M659.5 419.0V421.6M660.5 419.3V422.0M661.5 418.9V421.1M662.5 419.2V420.8M663.5 418.3V422.0M664.5 418.8V421.2M665.5 418.6V421.9M666.5 418.0V421.6M667.5 419.1V420.7M668.5 419.4V420.5M669.5 419.0V420.7M670.5 418.6V421.1M671.5 419.6V420.6M672.5 418.7V421.1M673.5 419.1V420.6M674.5 419.1V420.8M675.5 419.4V421.3M676.5 419.1V422.0M677.5 419.2V420.5M678.5 419.7V420.7M679.5 419.6V420.6M680.5 419.0V420.7M681.5 419.3V420.3M682.5 419.1V420.6M683.5 419.6V421.4M684.5 419.2V420.5M685.5 419.0V421.1M686.5 419.1V421.0M687.5 419.1V420.7M688.5 419.0V420.9M689.5 419.1V421.5M690.5 419.9V421.2M691.5 419.1V420.7M692.5 419.4V420.8M693.5 419.6V420.8M694.5 419.4V420.9M695.5 419.2V420.4M696.5 419.8V421.3M697.5 419.2V420.4M698.5 419.5V420.9M699.5 419.3V420.6M700.5 419.2V420.2M701.5 418.9V420.4M702.5 419.4V420.4M703.5 419.5V420.6M704.5 420.0V421.0M705.5 419.1V420.2M706.5 419.4V421.0M707.5 419.4V420.4M708.5 419.4V421.3M709.5 419.4V420.7M710.5 419.3V420.3M711.5 419.2V420.5M712.5 419.7V420.8M713.5 419.4V420.6M714.5 419.0V420.8M715.5 419.3V420.3M716.5 419.7V420.7M717.5 419.6V421.1M718.5 419.5V420.7M719.5 418.8V420.6M720.5 418.8V421.2M721.5 419.0V420.7M722.5 419.6V420.6M723.5 419.7V420.7M724.5 419.3V420.3M725.5 419.4V420.4M726.5 419.3V421.0M727.5 419.3V420.7M728.5 419.2V420.2M729.5 419.4V420.8M730.5 418.2V420.5M731.5 419.7V420.7M732.5 419.3V420.6M733.5 419.8V420.8M734.5 419.6V420.6M735.5 419.6V420.8M736.5 418.9V420.3M737.5 419.3V420.4M738.5 419.3V421.0M739.5 419.3V421.1M740.5 419.5V420.7M741.5 419.3V420.9M742.5 419.2V420.7M743.5 419.8V420.8M744.5 419.3V420.4M745.5 419.5V420.5M746.5 419.2V420.5M747.5 419.6V420.6M748.5 419.5V420.6M749.5 419.3V420.4M750.5 419.5V420.5M751.5 419.4V420.4M752.5 419.6V420.6M753.5 419.5V420.5M754.5 419.5V420.8M755.5 419.1V420.4M756.5 419.5V420.5M757.5 419.4V420.4M758.5 419.6V420.6M759.5 419.6V420.6M760.5 419.7V420.7M761.5 419.5V420.5M762.5 419.4V420.4M763.5 419.5V420.6M764.5 419.7V420.7M765.5 419.6V421.2M766.5 419.0V420.5M767.5 418.7V420.2M768.5 419.3V420.3M769.5 419.7V420.7M770.5 419.2V420.2M771.5 419.5V420.5M772.5 419.4V420.7M773.5 419.4V420.4M774.5 419.6V420.6M775.5 419.6V420.6M776.5 419.1V420.1M777.5 419.3V420.3M778.5 419.4V420.5M779.5 419.4V420.5M780.5 419.3V420.6M781.5 419.3V420.8M782.5 419.3V420.3M783.5 419.4V420.4M784.5 419.8V420.8M785.5 419.2V420.6M786.5 419.6V420.6M787.5 419.4V420.4M788.5 419.4V420.4M789.5 419.2V420.2M790.5 419.5V420.5M791.5 419.5V420.5M792.5 419.3V420.3M793.5 419.4V420.6M794.5 419.5V420.5M795.5 419.7V420.7M796.5 419.5V420.5M797.5 419.3V420.3M798.5 419.3V420.3M799.5 419.4V420.4M800.5 419.6V420.6M801.5 419.3V420.4M802.5 419.5V420.5M803.5 419.4V420.4M804.5 419.5V420.7M805.5 419.7V420.7M806.5 419.6V420.6M807.5 419.5V420.5M808.5 419.7V420.7M809.5 419.5V420.5M810.5 419.5V420.8M811.5 419.5V420.5M812.5 419.2V420.2M813.5 419.4V420.4M814.5 419.5V420.6M815.5 419.8V420.8M816.5 419.6V420.7M817.5 419.4V420.4M818.5 419.9V420.9M819.5 419.0V420.7M820.5 419.5V420.5M821.5 419.5V420.8M822.5 419.5V420.5M823.5 419.6V420.6M824.5 419.4V420.4M825.5 419.4V420.4M826.5 419.6V420.6M827.5 419.5V420.5M828.5 419.2V420.4M829.5 419.5V420.7M830.5 419.5V420.5M831.5 419.7V420.7M832.5 419.7V420.7M833.5 419.1V420.2M834.5 419.6V420.6M835.5 419.4V420.4M836.5 419.7V420.7M837.5 419.8V420.8M838.5 419.6V420.6M839.5 419.6V420.6M840.5 419.4V420.4M841.5 419.5V420.5M842.5 419.5V420.6M843.5 419.5V420.5M844.5 419.5V420.5M845.5 419.7V420.7M846.5 419.5V420.5M847.5 419.6V420.6M848.5 419.9V420.9M849.5 419.3V420.5M850.5 419.1V420.4M851.5 419.5V420.5M852.5 419.5V420.5M853.5 419.6V420.6M854.5 419.4V420.4M855.5 419.4V420.4M856.5 419.9V420.9M857.5 419.5V420.9M858.5 419.2V420.4M859.5 419.5V420.5M860.5 419.5V420.5M861.5 419.6V420.6M862.5 419.7V420.8M863.5 419.6V420.6M864.5 419.4V420.4M865.5 419.6V420.6M866.5 419.5V420.5M867.5 419.6V420.6M868.5 419.7V420.7M869.5 419.3V420.8M870.5 419.4V420.6M871.5 419.1V420.5M872.5 419.1V420.3M873.5 419.7V420.7M874.5 419.5V420.5M875.5 419.1V420.5M876.5 419.2V420.6M877.5 419.2V420.5M878.5 419.7V420.7M879.5 419.4V420.4M880.5 419.5V420.5M881.5 419.6V420.6M882.5 419.6V420.6M883.5 419.5V420.5" fill="none" stroke="#858585" stroke-width="1.0"/><line x1="140" y1="458.3" x2="485" y2="458.3" stroke="#a8a8a8" stroke-width="1"/><path d="M485.5 457.9V458.9M486.5 456.8V459.2M487.5 456.2V460.3M488.5 457.3V460.1M489.5 455.4V459.3M490.5 457.0V460.1M491.5 455.5V459.5M492.5 457.1V459.3M493.5 455.4V459.2M494.5 457.1V459.7M495.5 457.0V459.5M496.5 457.2V459.3M497.5 457.8V460.2M498.5 456.4V460.0M499.5 456.6V460.3M500.5 456.4V459.5M501.5 457.7V459.5M502.5 457.2V459.0M503.5 457.5V459.9M504.5 457.3V458.8M505.5 456.2V458.9M506.5 456.5V458.7M507.5 456.8V458.6M508.5 457.3V460.9M509.5 457.5V458.9M510.5 457.7V459.4M511.5 457.2V459.6M512.5 456.9V459.1M513.5 457.7V458.8M514.5 457.3V458.9M515.5 457.4V460.0M516.5 457.9V459.4M517.5 456.6V459.0M518.5 456.9V460.6M519.5 456.9V458.9M520.5 458.0V460.1M521.5 456.9V459.0M522.5 457.6V460.2M523.5 457.4V459.3M524.5 456.9V459.3M525.5 457.4V459.7M526.5 457.4V459.0M527.5 458.1V459.2M528.5 457.8V458.8M529.5 457.2V459.7M530.5 457.1V459.0M531.5 457.0V459.7M532.5 455.8V459.8M533.5 456.9V459.6M534.5 457.4V459.1M535.5 457.1V459.9M536.5 456.3V459.0M537.5 457.9V459.5M538.5 457.6V459.4M539.5 457.7V459.4M540.5 457.3V459.2M541.5 457.5V460.0M542.5 456.8V459.5M543.5 456.9V458.9M544.5 457.3V459.6M545.5 456.7V459.7M546.5 457.0V460.6M547.5 457.0V459.0M548.5 457.4V459.1M549.5 457.6V459.1M550.5 457.8V458.8M551.5 457.7V459.0M552.5 457.4V458.8M553.5 457.7V459.9M554.5 457.6V459.2M555.5 457.5V458.7M556.5 457.5V459.4M557.5 457.0V458.6M558.5 457.2V460.3M559.5 457.5V459.1M560.5 458.2V459.2M561.5 457.8V459.1M562.5 457.6V458.8M563.5 456.8V458.8M564.5 456.7V459.6M565.5 457.2V459.0M566.5 456.6V459.8M567.5 457.3V460.1M568.5 456.4V459.0M569.5 457.6V459.4M570.5 457.3V458.9M571.5 457.3V459.2M572.5 457.2V459.2M573.5 457.6V459.4M574.5 457.9V459.0M575.5 457.4V459.3M576.5 457.5V459.3M577.5 457.1V460.4M578.5 457.6V459.8M579.5 457.3V459.0M580.5 456.9V459.6M581.5 456.8V459.0M582.5 456.1V460.4M583.5 449.2V468.1M584.5 454.8V463.8M585.5 453.5V462.9M586.5 454.7V465.3M587.5 447.9V459.6M588.5 454.2V460.3M589.5 448.6V461.5M590.5 450.6V463.1M591.5 454.6V461.6M592.5 457.5V463.2M593.5 453.8V461.8M594.5 454.7V460.7M595.5 456.1V462.0M596.5 454.2V458.1M597.5 455.0V462.0M598.5 454.9V463.0M599.5 457.5V464.3M600.5 452.3V461.3M601.5 455.3V459.9M602.5 453.8V460.6M603.5 454.4V462.9M604.5 453.3V460.4M605.5 455.6V460.3M606.5 455.6V461.2M607.5 455.6V460.0M608.5 455.6V459.7M609.5 454.4V459.1M610.5 454.5V459.7M611.5 455.6V462.2M612.5 453.6V460.9M613.5 455.9V461.5M614.5 456.3V461.2M615.5 455.9V460.3M616.5 456.3V459.1M617.5 456.7V459.6M618.5 454.7V460.3M619.5 456.5V459.1M620.5 456.9V458.9M621.5 456.7V459.3M622.5 457.8V459.8M623.5 456.7V460.3M624.5 455.6V458.4M625.5 457.6V462.2M626.5 456.7V461.5M627.5 455.6V464.2M628.5 456.6V461.2M629.5 455.7V459.3M630.5 456.6V460.3M631.5 456.2V460.5M632.5 456.1V460.5M633.5 455.3V459.5M634.5 457.9V459.5M635.5 456.5V460.7M636.5 457.5V459.5M637.5 456.2V461.2M638.5 456.6V458.6M639.5 457.0V460.1M640.5 456.7V460.0M641.5 456.4V459.5M642.5 456.2V459.2M643.5 456.6V459.9M644.5 457.2V459.3M645.5 456.9V459.2M646.5 456.8V458.7M647.5 457.1V459.8M648.5 457.7V459.8M649.5 457.9V459.9M650.5 457.1V459.9M651.5 457.0V459.5M652.5 457.5V460.1M653.5 457.1V459.2M654.5 457.9V459.7M655.5 457.4V459.6M656.5 456.5V459.9M657.5 456.1V458.6M658.5 456.3V460.6M659.5 456.0V459.0M660.5 456.6V461.0M661.5 456.8V459.3M662.5 457.0V458.8M663.5 457.7V459.9M664.5 457.2V458.9M665.5 456.8V459.3M666.5 456.6V458.8M667.5 457.6V458.7M668.5 456.8V459.1M669.5 457.4V459.4M670.5 457.9V458.9M671.5 456.4V459.6M672.5 457.5V459.5M673.5 456.7V458.8M674.5 457.5V458.6M675.5 457.2V459.2M676.5 458.1V459.4M677.5 457.5V459.2M678.5 457.4V459.4M679.5 457.7V459.2M680.5 457.2V459.4M681.5 457.7V459.0M682.5 457.3V458.5M683.5 457.6V459.1M684.5 457.7V458.9M685.5 457.2V459.0M686.5 457.6V459.0M687.5 457.1V458.5M688.5 457.2V459.1M689.5 457.5V458.9M690.5 457.5V459.6M691.5 457.1V459.5M692.5 457.7V458.7M693.5 457.4V459.0M694.5 457.7V459.1M695.5 457.7V458.7M696.5 457.5V458.8M697.5 458.1V459.1M698.5 457.6V458.7M699.5 457.6V458.8M700.5 457.6V458.7M701.5 457.6V459.2M702.5 458.1V459.1M703.5 458.0V459.0M704.5 457.6V458.6M705.5 457.7V458.7M706.5 457.9V458.9M707.5 458.1V459.2M708.5 457.3V458.6M709.5 457.8V458.9M710.5 457.4V458.7M711.5 457.6V458.9M712.5 457.8V459.2M713.5 458.0V459.0M714.5 457.7V458.7M715.5 457.7V458.8M716.5 457.6V458.7M717.5 457.9V458.9M718.5 457.9V458.9M719.5 457.4V458.8M720.5 458.0V459.4M721.5 457.9V458.9M722.5 457.8V458.9M723.5 457.7V458.7M724.5 457.6V458.8M725.5 457.8V458.8M726.5 458.1V459.1M727.5 457.9V458.9M728.5 457.4V458.4M729.5 457.8V458.8M730.5 457.6V458.6M731.5 457.6V458.6M732.5 458.2V459.2M733.5 457.7V459.2M734.5 458.0V459.0M735.5 457.6V458.9M736.5 457.7V458.7M737.5 457.7V459.1M738.5 457.5V458.6M739.5 457.7V459.0M740.5 457.9V458.9M741.5 457.2V458.6M742.5 457.9V458.9M743.5 457.7V458.7M744.5 458.0V459.1M745.5 457.8V458.8M746.5 457.8V458.9M747.5 457.8V458.8M748.5 457.1V459.0M749.5 458.1V459.1M750.5 457.9V458.9M751.5 457.9V458.9M752.5 458.1V459.1M753.5 457.8V458.8M754.5 457.7V458.7M755.5 457.8V458.8M756.5 457.7V458.7M757.5 457.6V458.6M758.5 457.6V458.7M759.5 457.6V458.6M760.5 457.5V458.9M761.5 457.5V459.0M762.5 457.3V458.3M763.5 457.4V458.4M764.5 457.5V458.8M765.5 458.3V459.4M766.5 457.9V458.9M767.5 457.9V458.9M768.5 457.5V458.5M769.5 457.9V458.9M770.5 457.6V458.6M771.5 457.7V459.1M772.5 457.4V458.6M773.5 457.6V458.8M774.5 457.8V458.8M775.5 457.8V458.8M776.5 457.9V458.9M777.5 457.9V458.9M778.5 457.8V458.8M779.5 457.9V458.9M780.5 457.7V459.0M781.5 458.0V459.0M782.5 457.5V458.6M783.5 458.0V459.6M784.5 457.6V458.9M785.5 457.4V458.6M786.5 457.8V458.8M787.5 457.9V458.9M788.5 457.7V458.8M789.5 457.6V458.6M790.5 457.8V458.9M791.5 457.8V458.8M792.5 457.8V458.9M793.5 457.8V458.8M794.5 457.6V458.6M795.5 457.8V459.1M796.5 457.6V458.6M797.5 457.7V458.7M798.5 457.8V458.8M799.5 457.5V458.5M800.5 457.7V458.7M801.5 457.9V458.9M802.5 457.7V458.7M803.5 458.0V459.0M804.5 457.7V458.7M805.5 457.7V458.7M806.5 457.9V458.9M807.5 457.8V458.8M808.5 457.7V458.8M809.5 457.7V458.7M810.5 457.8V458.8M811.5 457.8V458.8M812.5 458.0V459.0M813.5 457.7V458.7M814.5 457.6V458.6M815.5 457.5V458.6M816.5 457.7V459.1M817.5 457.7V458.7M818.5 457.7V458.7M819.5 457.7V458.7M820.5 457.7V459.0M821.5 458.0V459.0M822.5 457.8V458.8M823.5 457.7V458.8M824.5 457.5V459.2M825.5 457.7V458.9M826.5 457.8V458.8M827.5 457.8V458.8M828.5 457.7V458.7M829.5 457.7V458.7M830.5 457.8V458.8M831.5 457.9V458.9M832.5 457.6V458.8M833.5 457.9V458.9M834.5 457.9V458.9M835.5 457.5V458.5M836.5 457.6V458.7M837.5 458.0V459.0M838.5 457.7V458.7M839.5 457.5V458.5M840.5 457.6V458.6M841.5 457.7V459.0M842.5 457.7V458.7M843.5 457.7V458.7M844.5 457.7V458.7M845.5 457.8V458.9M846.5 457.8V458.8M847.5 457.9V459.5M848.5 457.8V458.8M849.5 457.8V458.8M850.5 457.7V458.7M851.5 457.7V458.7M852.5 457.9V458.9M853.5 457.8V458.8M854.5 458.0V459.0M855.5 457.5V458.7M856.5 457.6V458.6M857.5 457.7V458.7M858.5 457.9V458.9M859.5 457.7V458.7M860.5 457.9V459.0M861.5 457.7V458.7M862.5 457.7V458.7M863.5 458.1V459.1M864.5 457.8V458.8M865.5 457.8V458.8M866.5 457.8V458.8M867.5 457.9V458.9M868.5 457.8V458.8M869.5 457.8V458.8M870.5 457.6V458.6M871.5 457.9V458.9M872.5 457.8V458.8M873.5 458.0V459.0M874.5 458.1V459.1M875.5 457.8V458.8M876.5 457.8V458.8M877.5 457.8V458.8M878.5 457.6V458.6M879.5 457.7V458.8M880.5 457.9V458.9M881.5 457.9V458.9M882.5 457.8V458.8M883.5 457.6V458.6" fill="none" stroke="#858585" stroke-width="1.0"/><line x1="194.6" y1="440" x2="194.6" y2="476" stroke="#555" stroke-width="1"/><line x1="140" y1="493.6" x2="485" y2="493.6" stroke="#a8a8a8" stroke-width="1"/><path d="M485.5 493.3V494.3M486.5 491.8V498.5M487.5 481.6V498.9M488.5 483.5V496.6M489.5 487.9V502.0M490.5 485.0V496.3M491.5 489.5V505.5M492.5 489.3V502.3M493.5 490.8V496.4M494.5 488.7V496.9M495.5 483.3V501.6M496.5 492.0V498.0M497.5 485.5V503.3M498.5 484.1V498.6M499.5 489.2V499.5M500.5 490.8V498.1M501.5 488.5V497.6M502.5 492.5V498.0M503.5 491.2V499.1M504.5 488.8V500.2M505.5 486.3V503.0M506.5 489.5V498.6M507.5 486.3V494.5M508.5 491.1V499.6M509.5 492.8V496.4M510.5 492.1V495.8M511.5 488.3V498.2M512.5 488.8V496.4M513.5 490.1V497.6M514.5 487.2V496.6M515.5 490.4V498.3M516.5 486.1V498.5M517.5 491.1V499.1M518.5 492.5V495.8M519.5 491.9V496.7M520.5 489.8V497.8M521.5 489.8V497.4M522.5 488.6V495.1M523.5 488.4V494.2M524.5 490.6V496.1M525.5 492.3V499.7M526.5 491.6V494.6M527.5 492.7V497.0M528.5 492.5V495.1M529.5 491.2V495.6M530.5 491.7V494.9M531.5 491.5V494.7M532.5 491.0V494.3M533.5 491.2V496.4M534.5 491.1V494.4M535.5 491.3V496.0M536.5 492.5V495.5M537.5 491.2V496.2M538.5 492.1V494.7M539.5 490.6V494.5M540.5 491.9V494.2M541.5 492.1V494.8M542.5 491.3V495.0M543.5 491.7V495.9M544.5 492.3V495.7M545.5 492.0V495.7M546.5 491.3V495.3M547.5 491.6V495.8M548.5 490.9V494.8M549.5 492.9V495.4M550.5 490.3V494.8M551.5 491.3V495.0M552.5 491.8V496.1M553.5 491.3V494.4M554.5 490.7V494.7M555.5 492.3V495.3M556.5 491.5V494.5M557.5 492.3V495.4M558.5 492.1V496.3M559.5 492.9V495.9M560.5 490.4V495.6M561.5 490.4V496.8M562.5 489.9V496.3M563.5 493.1V497.0M564.5 492.1V496.8M565.5 491.0V495.6M566.5 491.2V495.8M567.5 489.7V493.6M568.5 491.9V496.1M569.5 492.5V495.5M570.5 490.9V497.3M571.5 492.6V496.7M572.5 491.2V496.3M573.5 492.0V496.3M574.5 491.1V495.5M575.5 490.8V494.6M576.5 491.2V495.0M577.5 491.7V495.5M578.5 492.9V495.5M579.5 491.8V494.8M580.5 491.3V494.0M581.5 490.9V496.6M582.5 490.5V493.3M583.5 487.8V498.8M584.5 485.2V499.1M585.5 487.9V498.5M586.5 486.8V503.2M587.5 491.7V501.4M588.5 487.6V498.2M589.5 482.7V494.3M590.5 484.1V497.6M591.5 490.8V497.7M592.5 493.0V495.8M593.5 486.2V496.7M594.5 487.7V497.7M595.5 490.4V495.8M596.5 487.5V496.5M597.5 491.4V496.9M598.5 491.8V494.9M599.5 492.0V496.7M600.5 491.2V493.8M601.5 492.1V497.2M602.5 488.8V494.8M603.5 490.9V496.4M604.5 488.7V499.3M605.5 491.8V496.8M606.5 486.8V499.7M607.5 489.6V496.2M608.5 493.6V497.0M609.5 489.5V499.8M610.5 490.8V499.0M611.5 490.4V494.6M612.5 490.3V496.7M613.5 488.7V497.2M614.5 489.3V497.4M615.5 490.7V498.5M616.5 490.4V496.1M617.5 491.4V497.4M618.5 492.0V496.9M619.5 490.6V494.9M620.5 490.7V496.6M621.5 491.3V494.4M622.5 490.7V494.8M623.5 491.3V495.6M624.5 491.0V495.6M625.5 492.5V496.5M626.5 490.3V495.1M627.5 492.6V494.3M628.5 491.0V495.3M629.5 490.8V495.0M630.5 491.9V494.7M631.5 492.6V495.5M632.5 490.9V495.0M633.5 491.6V495.0M634.5 491.8V497.7M635.5 490.3V498.5M636.5 492.4V496.2M637.5 490.1V496.0M638.5 490.9V498.3M639.5 488.5V495.9M640.5 492.0V495.4M641.5 493.5V497.2M642.5 492.5V495.4M643.5 492.4V496.2M644.5 491.5V495.3M645.5 492.8V495.4M646.5 492.4V495.6M647.5 491.5V495.0M648.5 492.1V495.5M649.5 492.4V495.2M650.5 492.4V495.5M651.5 492.1V495.1M652.5 491.8V496.4M653.5 491.9V495.1M654.5 493.2V494.9M655.5 492.1V495.0M656.5 492.5V495.7M657.5 492.3V495.5M658.5 491.8V495.4M659.5 492.2V494.4M660.5 492.9V494.1M661.5 492.9V495.1M662.5 493.0V494.7M663.5 492.8V494.3M664.5 492.9V494.5M665.5 492.6V495.0M666.5 492.5V494.6M667.5 492.2V494.6M668.5 491.8V496.1M669.5 492.4V495.2M670.5 490.8V495.9M671.5 492.0V495.8M672.5 491.6V494.9M673.5 492.3V494.5M674.5 492.4V495.1M675.5 491.7V494.6M676.5 492.3V496.4M677.5 492.3V494.9M678.5 492.3V495.6M679.5 492.7V494.5M680.5 492.1V495.2M681.5 492.2V494.2M682.5 493.1V495.1M683.5 492.8V494.3M684.5 493.0V494.5M685.5 493.1V494.1M686.5 492.6V494.3M687.5 492.9V495.0M688.5 492.4V493.8M689.5 492.7V495.0M690.5 492.1V495.1M691.5 493.3V494.4M692.5 492.7V494.7M693.5 492.8V493.9M694.5 492.8V494.4M695.5 492.6V494.4M696.5 493.0V494.0M697.5 492.7V495.1M698.5 491.9V495.4M699.5 493.3V494.5M700.5 492.6V494.8M701.5 492.1V494.4M702.5 492.6V494.2M703.5 493.0V494.0M704.5 492.8V493.8M705.5 492.3V494.5M706.5 493.2V494.4M707.5 493.2V494.5M708.5 492.8V494.2M709.5 492.8V494.7M710.5 492.8V494.5M711.5 493.2V494.3M712.5 492.8V494.1M713.5 492.8V494.2M714.5 493.0V494.4M715.5 492.6V494.1M716.5 492.6V494.6M717.5 493.3V494.5M718.5 493.1V494.6M719.5 492.6V493.6M720.5 493.0V494.3M721.5 492.9V494.2M722.5 493.1V494.2M723.5 493.2V494.2M724.5 493.0V494.2M725.5 493.2V494.2M726.5 493.1V494.5M727.5 493.0V494.3M728.5 492.9V494.3M729.5 492.7V494.5M730.5 492.9V494.3M731.5 492.2V493.9M732.5 492.6V494.7M733.5 492.9V494.1M734.5 492.6V494.2M735.5 493.0V494.0M736.5 493.2V494.3M737.5 492.8V493.9M738.5 493.0V494.2M739.5 493.1V494.1M740.5 493.2V494.2M741.5 493.2V494.2M742.5 493.0V494.0M743.5 493.3V494.3M744.5 493.0V494.0M745.5 493.2V494.2M746.5 493.2V494.2M747.5 493.1V494.1M748.5 492.9V493.9M749.5 493.1V494.1M750.5 492.8V493.8M751.5 493.1V494.1M752.5 493.3V494.5M753.5 492.8V494.1M754.5 493.2V494.3M755.5 493.3V494.3M756.5 493.1V494.1M757.5 493.2V494.2M758.5 493.1V494.1M759.5 493.2V494.3M760.5 493.3V494.3M761.5 492.6V494.0M762.5 492.8V494.1M763.5 492.9V494.3M764.5 492.8V494.2M765.5 493.0V494.0M766.5 492.9V494.4M767.5 492.9V494.6M768.5 493.0V494.0M769.5 493.2V494.2M770.5 493.4V494.4M771.5 492.9V494.0M772.5 493.1V494.1M773.5 493.2V494.2M774.5 493.0V494.1M775.5 493.1V494.1M776.5 492.9V493.9M777.5 493.4V494.4M778.5 493.2V494.2M779.5 492.9V494.0M780.5 493.1V494.2M781.5 493.2V494.2M782.5 492.9V494.3M783.5 492.9V494.3M784.5 493.4V494.4M785.5 493.0V494.2M786.5 493.1V494.1M787.5 493.2V494.2M788.5 493.2V494.2M789.5 493.2V494.2M790.5 493.1V494.1M791.5 493.0V494.0M792.5 493.0V494.0M793.5 493.1V494.1M794.5 493.0V494.0M795.5 493.2V494.2M796.5 492.9V494.2M797.5 492.7V493.8M798.5 493.0V494.3M799.5 493.4V494.4M800.5 493.0V494.0M801.5 492.8V493.8M802.5 493.2V494.3M803.5 493.2V494.2M804.5 493.1V494.1M805.5 493.1V494.1M806.5 493.0V494.0M807.5 493.0V494.0M808.5 492.9V493.9M809.5 493.3V494.3M810.5 493.3V494.3M811.5 493.0V494.0M812.5 492.8V493.8M813.5 493.1V494.1M814.5 493.2V494.3M815.5 493.1V494.1M816.5 493.2V494.2M817.5 493.1V494.1M818.5 493.2V494.2M819.5 493.3V494.3M820.5 492.9V493.9M821.5 492.9V493.9M822.5 493.1V494.1M823.5 493.0V494.0M824.5 493.1V494.1M825.5 493.0V494.0M826.5 493.1V494.1M827.5 493.1V494.1M828.5 493.0V494.0M829.5 493.1V494.3M830.5 493.3V494.3M831.5 493.2V494.2M832.5 493.1V494.1M833.5 493.4V494.4M834.5 492.9V493.9M835.5 492.9V494.0M836.5 492.9V494.0M837.5 492.6V494.0M838.5 492.9V494.2M839.5 493.0V494.1M840.5 492.9V494.3M841.5 493.1V494.5M842.5 493.3V494.3M843.5 492.7V494.0M844.5 493.1V494.1M845.5 493.1V494.1M846.5 493.1V494.1M847.5 493.3V494.3M848.5 493.1V494.1M849.5 492.8V493.8M850.5 493.1V494.1M851.5 493.1V494.1M852.5 493.2V494.3M853.5 492.9V493.9M854.5 493.1V494.1M855.5 492.9V493.9M856.5 493.1V494.1M857.5 493.1V494.1M858.5 493.3V494.3M859.5 493.3V494.3M860.5 493.0V494.0M861.5 493.1V494.1M862.5 493.0V494.0M863.5 493.1V494.1M864.5 492.9V493.9M865.5 493.2V494.2M866.5 493.1V494.1M867.5 493.3V494.3M868.5 493.1V494.2M869.5 493.2V494.2M870.5 492.8V494.2M871.5 492.9V493.9M872.5 493.3V494.3M873.5 493.0V494.0M874.5 493.0V494.0M875.5 493.0V494.0M876.5 493.1V494.1M877.5 493.2V494.2M878.5 493.0V494.0M879.5 493.2V494.2M880.5 493.3V494.3M881.5 493.1V494.1M882.5 493.1V494.1M883.5 493.1V494.1" fill="none" stroke="#858585" stroke-width="1.0"/><line x1="188.7" y1="482" x2="188.7" y2="500" stroke="#555" stroke-width="1"/><line x1="140" y1="531.8" x2="487" y2="531.8" stroke="#a8a8a8" stroke-width="1"/><path d="M487.5 531.3V532.3M488.5 522.9V549.9M489.5 522.8V536.3M490.5 516.4V538.3M491.5 522.0V541.9M492.5 526.3V536.0M493.5 524.9V538.3M494.5 527.8V536.4M495.5 519.2V543.8M496.5 523.9V540.2M497.5 523.5V537.9M498.5 529.7V536.4M499.5 528.1V535.6M500.5 527.3V536.1M501.5 526.6V534.7M502.5 529.2V545.0M503.5 525.6V534.3M504.5 526.9V537.0M505.5 529.4V538.5M506.5 527.1V537.9M507.5 525.6V538.4M508.5 523.8V536.0M509.5 527.1V535.1M510.5 528.5V534.7M511.5 528.9V534.4M512.5 528.3V536.2M513.5 526.0V533.5M514.5 527.2V531.8M515.5 530.3V535.1M516.5 529.0V534.3M517.5 529.5V533.1M518.5 529.4V534.2M519.5 528.7V534.7M520.5 528.1V535.3M521.5 527.9V534.7M522.5 530.9V535.2M523.5 529.3V533.9M524.5 526.9V536.2M525.5 529.0V532.6M526.5 525.3V534.4M527.5 530.3V532.8M528.5 530.0V533.2M529.5 529.8V534.0M530.5 530.6V533.9M531.5 527.4V533.9M532.5 530.2V533.4M533.5 529.1V533.7M534.5 527.5V537.3M535.5 528.9V533.5M536.5 530.7V534.3M537.5 528.3V535.4M538.5 530.0V533.4M539.5 528.2V533.3M540.5 530.3V533.8M541.5 530.3V533.4M542.5 531.7V533.4M543.5 528.4V532.3M544.5 528.8V534.8M545.5 528.9V534.4M546.5 530.2V533.3M547.5 528.8V532.4M548.5 529.8V532.7M549.5 530.2V532.3M550.5 530.6V533.4M551.5 530.6V534.0M552.5 529.9V534.3M553.5 531.0V532.4M554.5 530.8V533.5M555.5 529.2V533.2M556.5 529.8V533.1M557.5 529.2V532.5M558.5 529.0V533.9M559.5 529.7V533.5M560.5 530.4V533.7M561.5 531.1V534.1M562.5 528.5V533.6M563.5 529.5V533.8M564.5 529.4V535.1M565.5 530.0V533.1M566.5 529.8V534.9M567.5 530.4V535.5M568.5 530.1V533.9M569.5 530.6V533.7M570.5 529.4V533.4M571.5 528.2V531.5M572.5 530.3V534.7M573.5 529.3V534.2M574.5 529.9V534.3M575.5 530.1V533.6M576.5 530.7V535.0M577.5 531.6V532.9M578.5 531.1V533.0M579.5 531.2V533.1M580.5 530.4V532.7M581.5 528.2V533.7M582.5 528.2V533.9M583.5 526.1V534.8M584.5 529.1V534.0M585.5 527.3V534.5M586.5 527.9V541.6M587.5 528.5V540.6M588.5 524.4V540.0M589.5 526.9V537.5M590.5 523.6V533.5M591.5 526.3V537.6M592.5 528.5V536.0M593.5 525.4V535.3M594.5 526.4V538.3M595.5 526.4V533.4M596.5 529.6V535.3M597.5 528.3V534.3M598.5 529.4V534.9M599.5 526.2V536.0M600.5 529.7V536.2M601.5 527.3V538.8M602.5 529.1V537.4M603.5 529.7V535.3M604.5 527.8V535.4M605.5 528.0V536.8M606.5 530.2V532.7M607.5 527.9V533.6M608.5 529.4V535.5M609.5 529.4V533.3M610.5 530.5V533.3M611.5 528.8V532.5M612.5 528.7V533.8M613.5 529.8V536.7M614.5 527.6V534.0M615.5 528.6V533.4M616.5 529.4V534.9M617.5 529.8V533.2M618.5 529.9V535.8M619.5 528.6V534.6M620.5 530.0V535.1M621.5 530.0V534.2M622.5 530.7V534.1M623.5 528.8V533.9M624.5 530.2V536.0M625.5 530.5V533.4M626.5 530.2V535.2M627.5 529.7V534.1M628.5 528.8V533.4M629.5 529.9V535.2M630.5 529.0V533.2M631.5 530.3V534.6M632.5 529.4V535.5M633.5 529.6V533.8M634.5 530.8V533.8M635.5 527.9V538.1M636.5 528.8V534.0M637.5 527.8V535.4M638.5 530.5V535.1M639.5 529.3V536.0M640.5 530.6V534.0M641.5 530.7V534.7M642.5 528.7V533.7M643.5 530.6V534.4M644.5 530.1V534.1M645.5 530.0V533.0M646.5 530.7V533.9M647.5 530.3V534.9M648.5 530.1V533.8M649.5 529.4V533.7M650.5 530.5V533.1M651.5 530.5V533.4M652.5 530.5V534.0M653.5 530.6V533.8M654.5 529.9V534.2M655.5 529.8V533.6M656.5 530.5V533.0M657.5 529.7V533.1M658.5 530.7V532.5M659.5 530.6V533.2M660.5 531.4V532.4M661.5 530.4V533.1M662.5 531.3V532.8M663.5 530.1V532.5M664.5 531.1V532.3M665.5 531.3V532.6M666.5 530.5V533.1M667.5 531.3V533.3M668.5 530.6V532.4M669.5 530.9V531.9M670.5 531.1V533.0M671.5 530.9V532.9M672.5 530.9V532.5M673.5 531.2V532.4M674.5 531.1V532.2M675.5 530.8V532.3M676.5 530.3V532.8M677.5 531.5V532.8M678.5 531.6V534.2M679.5 530.0V532.6M680.5 529.9V532.9M681.5 530.1V533.3M682.5 530.4V532.6M683.5 531.0V532.5M684.5 531.2V532.8M685.5 531.1V532.5M686.5 530.3V532.9M687.5 530.9V532.7M688.5 531.4V533.0M689.5 531.2V532.5M690.5 531.0V533.2M691.5 530.5V532.3M692.5 530.6V532.4M693.5 530.6V532.5M694.5 530.9V532.7M695.5 531.1V532.8M696.5 531.2V532.4M697.5 530.8V533.0M698.5 531.2V532.4M699.5 531.7V533.1M700.5 530.9V532.3M701.5 531.3V532.3M702.5 530.3V532.9M703.5 531.3V532.4M704.5 530.7V532.4M705.5 530.8V533.2M706.5 530.9V533.0M707.5 531.1V532.7M708.5 530.6V532.4M709.5 531.1V532.1M710.5 531.2V532.4M711.5 531.2V532.6M712.5 531.2V532.3M713.5 531.3V532.3M714.5 531.3V532.3M715.5 531.6V532.8M716.5 531.0V532.3M717.5 531.5V532.6M718.5 531.1V532.1M719.5 531.1V532.4M720.5 531.3V532.7M721.5 531.4V532.4M722.5 531.3V532.5M723.5 531.3V532.5M724.5 531.2V532.4M725.5 531.3V532.3M726.5 531.5V532.5M727.5 530.7V532.6M728.5 530.8V532.3M729.5 531.3V533.3M730.5 531.1V532.2M731.5 531.3V532.4M732.5 531.0V532.3M733.5 530.7V531.9M734.5 531.3V532.6M735.5 530.9V532.5M736.5 530.8V532.1M737.5 531.1V532.5M738.5 531.3V532.3M739.5 531.6V532.7M740.5 531.3V532.3M741.5 531.2V532.4M742.5 531.0V532.2M743.5 531.3V532.3M744.5 531.2V532.6M745.5 531.4V532.4M746.5 531.0V532.0M747.5 531.4V532.4M748.5 531.1V532.5M749.5 531.4V532.4M750.5 531.4V532.4M751.5 531.2V532.2M752.5 531.1V532.1M753.5 530.6V532.5M754.5 531.5V532.5M755.5 531.3V532.3M756.5 531.3V532.3M757.5 531.2V532.2M758.5 531.3V532.6M759.5 531.4V532.4M760.5 531.4V532.4M761.5 531.4V532.4M762.5 531.4V532.4M763.5 531.3V532.3M764.5 531.5V532.5M765.5 531.2V532.2M766.5 531.4V532.4M767.5 531.2V532.2M768.5 531.3V532.3M769.5 531.2V532.2M770.5 531.3V532.3M771.5 531.3V532.3M772.5 531.2V532.7M773.5 531.2V532.2M774.5 530.9V532.4M775.5 530.7V532.3M776.5 531.3V532.3M777.5 530.4V532.4M778.5 530.6V532.5M779.5 531.2V532.2M780.5 531.2V532.4M781.5 531.3V532.3M782.5 531.4V532.4M783.5 531.5V532.5M784.5 531.4V532.4M785.5 531.3V532.3M786.5 531.2V532.2M787.5 531.2V532.3M788.5 531.3V532.3M789.5 531.4V532.4M790.5 531.2V532.2M791.5 531.2V532.2M792.5 531.4V532.4M793.5 531.3V532.3M794.5 531.3V532.5M795.5 530.9V532.1M796.5 531.4V532.4M797.5 531.4V532.4M798.5 531.2V532.2M799.5 531.3V532.3M800.5 531.3V532.3M801.5 531.3V532.3M802.5 531.4V532.4M803.5 531.2V532.2M804.5 531.2V532.2M805.5 531.3V532.3M806.5 531.1V532.1M807.5 531.2V532.2M808.5 531.4V532.4M809.5 531.4V532.4M810.5 531.0V532.0M811.5 531.0V532.2M812.5 531.5V532.5M813.5 531.1V532.1M814.5 531.1V532.1M815.5 531.4V532.4M816.5 531.4V532.4M817.5 531.1V532.1M818.5 531.1V532.1M819.5 531.3V532.5M820.5 530.9V532.4M821.5 531.2V532.5M822.5 531.1V532.1M823.5 531.1V532.1M824.5 531.4V532.4M825.5 531.3V532.3M826.5 531.3V532.3M827.5 531.4V532.4M828.5 531.6V532.6M829.5 531.4V532.8M830.5 531.2V532.2M831.5 531.3V532.3M832.5 531.2V532.2M833.5 531.3V532.3M834.5 531.4V532.4M835.5 531.5V532.5M836.5 531.3V532.3M837.5 531.4V532.4M838.5 531.2V532.2M839.5 531.0V532.0M840.5 531.1V532.1M841.5 531.3V532.3M842.5 531.2V532.6M843.5 531.6V532.6M844.5 531.3V532.3M845.5 531.1V532.1M846.5 531.4V532.6M847.5 531.1V532.6M848.5 531.1V532.4M849.5 531.2V532.2M850.5 531.2V532.2M851.5 531.4V532.6M852.5 531.2V532.4M853.5 530.6V532.2M854.5 531.4V532.4M855.5 531.2V532.3M856.5 531.0V532.2M857.5 531.4V532.4M858.5 531.3V532.3M859.5 531.3V532.3M860.5 531.2V532.3M861.5 531.4V532.4M862.5 531.4V532.4M863.5 531.4V532.4M864.5 531.4V532.4M865.5 531.5V532.5M866.5 531.3V532.3M867.5 531.2V532.2M868.5 531.3V532.3M869.5 530.9V531.9M870.5 531.2V532.5M871.5 531.5V532.6M872.5 530.8V532.2M873.5 531.3V532.3M874.5 531.0V532.1M875.5 531.2V532.2M876.5 531.1V532.1M877.5 531.3V532.3M878.5 531.3V532.3M879.5 531.4V532.4M880.5 531.1V532.4M881.5 531.5V532.5M882.5 531.4V532.4M883.5 531.4V532.4" fill="none" stroke="#858585" stroke-width="1.0"/><line x1="196" y1="517" x2="196" y2="538" stroke="#555" stroke-width="1"/><line x1="140" y1="569.7" x2="490" y2="569.7" stroke="#a8a8a8" stroke-width="1"/><path d="M490.5 569.2V570.2M491.5 559.8V573.4M492.5 566.6V576.9M493.5 559.9V580.0M494.5 561.1V573.7M495.5 560.7V573.1M496.5 561.6V573.1M497.5 563.4V577.9M498.5 563.5V577.4M499.5 563.2V578.4M500.5 564.8V585.0M501.5 562.9V573.7M502.5 564.9V574.9M503.5 562.1V576.0M504.5 560.6V578.4M505.5 567.7V573.7M506.5 565.4V575.2M507.5 562.8V574.3M508.5 564.4V576.7M509.5 563.6V573.8M510.5 563.3V574.9M511.5 566.2V571.3M512.5 567.6V574.2M513.5 566.8V573.1M514.5 563.7V572.4M515.5 565.3V574.7M516.5 566.4V572.4M517.5 568.3V576.6M518.5 568.8V574.4M519.5 569.0V572.8M520.5 566.9V571.8M521.5 565.0V573.7M522.5 567.9V572.6M523.5 563.4V574.0M524.5 568.2V573.8M525.5 568.9V572.9M526.5 566.3V570.9M527.5 566.5V572.3M528.5 561.5V573.3M529.5 567.8V571.0M530.5 567.3V572.3M531.5 566.3V572.3M532.5 568.0V571.2M533.5 567.4V573.4M534.5 568.5V574.1M535.5 566.4V573.2M536.5 567.1V573.0M537.5 568.1V572.0M538.5 566.4V570.5M539.5 565.7V573.7M540.5 567.5V571.3M541.5 567.0V572.5M542.5 568.5V571.6M543.5 568.7V572.9M544.5 568.4V569.7M545.5 567.4V570.6M546.5 567.3V575.5M547.5 566.3V573.7M548.5 568.6V570.9M549.5 568.1V570.6M550.5 568.1V572.1M551.5 566.8V571.5M552.5 567.3V571.9M553.5 567.9V571.5M554.5 568.6V571.2M555.5 568.8V571.5M556.5 567.7V571.9M557.5 567.4V572.7M558.5 566.1V570.9M559.5 567.4V570.5M560.5 567.5V571.4M561.5 568.5V571.0M562.5 568.3V571.1M563.5 567.4V569.8M564.5 568.0V571.9M565.5 568.5V571.9M566.5 566.1V570.9M567.5 568.0V571.8M568.5 568.7V571.3M569.5 567.3V571.2M570.5 567.2V571.0M571.5 567.5V572.7M572.5 568.2V571.8M573.5 567.4V571.2M574.5 567.2V571.5M575.5 566.6V571.2M576.5 568.0V571.0M577.5 567.8V571.4M578.5 567.4V571.2M579.5 568.8V571.4M580.5 568.7V571.8M581.5 569.4V572.5M582.5 568.8V571.5M583.5 567.4V570.5M584.5 567.7V570.8M585.5 567.4V570.4M586.5 568.0V570.6M587.5 567.5V571.2M588.5 568.6V571.0M589.5 568.3V570.6M590.5 567.9V570.6M591.5 568.2V570.2M592.5 567.4V570.6M593.5 568.7V570.3M594.5 566.0V570.3M595.5 568.5V572.0M596.5 565.6V574.1M597.5 566.6V574.1M598.5 564.7V573.5M599.5 565.0V572.7M600.5 563.5V572.0M601.5 561.7V573.6M602.5 565.6V572.2M603.5 565.3V573.4M604.5 562.4V576.9M605.5 568.4V572.8M606.5 567.7V574.3M607.5 564.3V574.1M608.5 562.7V575.5M609.5 567.1V574.9M610.5 563.8V575.6M611.5 565.1V571.6M612.5 565.2V575.2M613.5 563.8V571.8M614.5 564.8V572.1M615.5 567.4V571.2M616.5 568.3V574.9M617.5 567.0V571.6M618.5 567.2V573.1M619.5 566.3V573.5M620.5 568.3V571.9M621.5 568.7V570.9M622.5 566.6V571.0M623.5 568.4V573.2M624.5 565.3V574.0M625.5 567.4V571.3M626.5 568.5V571.6M627.5 569.2V572.6M628.5 565.7V572.0M629.5 568.2V574.8M630.5 564.8V570.9M631.5 567.1V571.5M632.5 565.9V574.1M633.5 567.1V572.1M634.5 568.7V571.4M635.5 566.8V572.8M636.5 565.9V571.4M637.5 568.1V572.0M638.5 568.4V572.7M639.5 565.6V570.4M640.5 568.3V573.1M641.5 567.3V571.3M642.5 568.4V571.2M643.5 568.7V570.5M644.5 567.9V571.3M645.5 568.6V571.6M646.5 568.6V572.0M647.5 567.6V573.7M648.5 568.1V571.8M649.5 569.3V571.2M650.5 567.7V570.5M651.5 568.3V571.7M652.5 568.4V571.5M653.5 569.3V571.3M654.5 568.5V572.1M655.5 567.7V572.2M656.5 567.6V571.6M657.5 569.0V571.2M658.5 568.3V571.0M659.5 568.2V571.0M660.5 567.3V570.7M661.5 568.5V572.1M662.5 568.0V571.4M663.5 569.0V571.4M664.5 567.9V570.3M665.5 569.4V571.4M666.5 567.5V570.0M667.5 568.5V570.6M668.5 569.0V571.3M669.5 569.1V570.6M670.5 568.0V571.1M671.5 568.2V570.6M672.5 568.7V570.3M673.5 569.2V571.2M674.5 568.9V570.6M675.5 568.5V570.2M676.5 568.8V571.3M677.5 568.3V570.6M678.5 568.7V570.2M679.5 568.2V572.5M680.5 568.3V570.0M681.5 569.1V570.4M682.5 568.4V570.2M683.5 569.2V570.3M684.5 568.5V570.7M685.5 568.9V570.8M686.5 569.2V571.1M687.5 568.8V570.9M688.5 567.8V572.1M689.5 568.9V571.2M690.5 568.7V571.1M691.5 568.7V570.6M692.5 568.8V570.9M693.5 568.8V571.3M694.5 569.2V570.5M695.5 569.0V570.0M696.5 568.6V570.5M697.5 569.1V571.0M698.5 568.2V570.3M699.5 569.2V571.9M700.5 569.3V570.4M701.5 568.3V570.7M702.5 569.1V570.7M703.5 568.3V571.4M704.5 569.1V570.4M705.5 569.2V570.2M706.5 569.0V570.1M707.5 569.2V570.4M708.5 569.1V570.2M709.5 568.1V570.9M710.5 568.4V571.1M711.5 568.9V570.0M712.5 569.1V571.0M713.5 568.2V570.5M714.5 569.0V570.3M715.5 569.2V570.2M716.5 569.1V570.2M717.5 569.0V571.3M718.5 568.8V570.5M719.5 568.9V570.9M720.5 568.7V571.4M721.5 569.3V570.5M722.5 569.2V570.5M723.5 568.6V570.5M724.5 569.2V570.3M725.5 569.2V570.2M726.5 569.1V570.8M727.5 569.0V570.4M728.5 569.0V570.5M729.5 568.6V570.5M730.5 569.0V570.4M731.5 569.0V570.5M732.5 569.3V570.5M733.5 569.1V570.1M734.5 569.1V570.1M735.5 569.1V570.1M736.5 568.7V570.2M737.5 569.4V570.6M738.5 569.0V570.2M739.5 568.9V570.6M740.5 569.0V570.5M741.5 569.4V570.4M742.5 569.1V570.3M743.5 568.5V570.7M744.5 568.3V570.1M745.5 569.3V570.4M746.5 568.9V570.4M747.5 568.9V570.2M748.5 569.5V570.7M749.5 569.1V570.1M750.5 569.1V570.1M751.5 568.9V570.1M752.5 569.0V570.0M753.5 568.7V570.4M754.5 569.1V570.5M755.5 568.7V570.0M756.5 568.8V570.5M757.5 569.2V570.4M758.5 569.0V570.1M759.5 569.0V570.3M760.5 569.0V570.4M761.5 569.1V570.1M762.5 569.2V570.2M763.5 569.1V570.2M764.5 569.5V570.7M765.5 568.5V570.2M766.5 569.0V570.1M767.5 569.0V570.2M768.5 568.2V570.1M769.5 568.5V570.3M770.5 568.9V570.4M771.5 569.4V570.4M772.5 569.0V570.0M773.5 569.1V570.2M774.5 569.0V570.2M775.5 569.0V570.2M776.5 569.0V570.2M777.5 569.0V570.0M778.5 568.8V570.8M779.5 568.6V571.0M780.5 569.1V570.3M781.5 569.0V570.0M782.5 569.0V570.0M783.5 568.8V570.3M784.5 569.0V570.5M785.5 569.1V570.6M786.5 569.1V570.7M787.5 568.8V571.0M788.5 568.7V570.7M789.5 568.8V570.1M790.5 569.2V570.6M791.5 569.2V570.2M792.5 569.3V570.3M793.5 569.0V570.0M794.5 569.2V570.6M795.5 569.4V570.4M796.5 569.1V570.5M797.5 569.1V570.1M798.5 569.0V570.4M799.5 568.3V570.2M800.5 569.2V570.2M801.5 569.4V570.5M802.5 569.4V570.4M803.5 569.1V570.1M804.5 569.2V570.2M805.5 569.0V570.0M806.5 569.1V570.7M807.5 569.5V570.5M808.5 569.1V570.1M809.5 569.0V570.3M810.5 569.3V570.3M811.5 569.2V570.2M812.5 569.3V570.4M813.5 569.1V570.2M814.5 569.1V570.2M815.5 569.1V570.5M816.5 568.9V570.0M817.5 569.2V570.2M818.5 569.0V570.3M819.5 569.1V570.5M820.5 569.0V570.0M821.5 569.2V570.2M822.5 569.5V570.7M823.5 569.3V570.3M824.5 568.9V570.0M825.5 569.3V570.5M826.5 568.9V570.2M827.5 569.3V570.3M828.5 569.2V570.2M829.5 568.7V570.2M830.5 568.8V569.8M831.5 568.9V570.7M832.5 569.1V570.3M833.5 569.4V570.4M834.5 569.2V570.3M835.5 569.0V570.0M836.5 569.3V570.3M837.5 569.1V570.1M838.5 568.9V570.2M839.5 569.0V570.0M840.5 569.1V570.1M841.5 569.1V570.2M842.5 569.2V570.6M843.5 569.0V570.1M844.5 568.8V570.5M845.5 569.0V570.0M846.5 569.3V570.3M847.5 569.2V570.2M848.5 569.3V570.3M849.5 569.0V570.1M850.5 569.1V570.1M851.5 568.9V570.1M852.5 569.0V570.4M853.5 569.3V570.3M854.5 569.1V570.2M855.5 569.2V570.2M856.5 569.2V570.3M857.5 569.2V570.2M858.5 569.1V570.1M859.5 569.3V570.3M860.5 569.2V570.2M861.5 569.2V570.2M862.5 569.0V570.0M863.5 569.4V570.4M864.5 569.5V570.8M865.5 569.2V570.3M866.5 569.4V570.4M867.5 569.2V570.3M868.5 569.4V570.4M869.5 569.4V570.4M870.5 569.5V570.5M871.5 569.0V570.1M872.5 569.2V570.2M873.5 568.9V569.9M874.5 569.0V570.1M875.5 569.4V570.4M876.5 569.1V570.1M877.5 569.1V570.1M878.5 569.4V570.4M879.5 569.2V570.3M880.5 568.9V570.5M881.5 569.3V570.3M882.5 569.2V570.2M883.5 569.2V570.2" fill="none" stroke="#858585" stroke-width="1.0"/><line x1="197" y1="558" x2="197" y2="577" stroke="#555" stroke-width="1"/><line x1="360.5" y1="365" x2="360.5" y2="577" stroke="#e01010" stroke-width="1.3"/><line x1="454.4" y1="365" x2="454.4" y2="384.1" stroke="#b01010" stroke-width="1.4"/><line x1="458.5" y1="384.1" x2="458.5" y2="401" stroke="#1010a0" stroke-width="1.4"/><line x1="535.4" y1="384.1" x2="535.4" y2="401" stroke="#1010a0" stroke-width="1.4"/><line x1="472.7" y1="403" x2="472.7" y2="420" stroke="#b01010" stroke-width="1.4"/><line x1="471.4" y1="420" x2="471.4" y2="439" stroke="#1010a0" stroke-width="1.4"/><line x1="560.5" y1="403" x2="560.5" y2="420" stroke="#b01010" stroke-width="1.4"/><line x1="560.5" y1="420" x2="560.5" y2="439" stroke="#1010a0" stroke-width="1.4"/><line x1="485.2" y1="441" x2="485.2" y2="458.3" stroke="#b01010" stroke-width="1.4"/><line x1="483.7" y1="458.3" x2="483.7" y2="477" stroke="#1010a0" stroke-width="1.4"/><line x1="582.3" y1="441" x2="582.3" y2="458.3" stroke="#b01010" stroke-width="1.4"/><line x1="580.6" y1="458.3" x2="580.6" y2="477" stroke="#1010a0" stroke-width="1.4"/><line x1="485.2" y1="478" x2="485.2" y2="493.6" stroke="#b01010" stroke-width="1.4"/><line x1="484.5" y1="493.6" x2="484.5" y2="514" stroke="#1010a0" stroke-width="1.4"/><line x1="582.3" y1="478" x2="582.3" y2="493.6" stroke="#b01010" stroke-width="1.4"/><line x1="582.3" y1="493.6" x2="582.3" y2="514" stroke="#1010a0" stroke-width="1.4"/><line x1="486.5" y1="515" x2="486.5" y2="531.8" stroke="#b01010" stroke-width="1.4"/><line x1="487.5" y1="531.8" x2="487.5" y2="551" stroke="#1010a0" stroke-width="1.4"/><line x1="584.3" y1="515" x2="584.3" y2="531.8" stroke="#e81818" stroke-width="1.4"/><line x1="588.6" y1="531.8" x2="588.6" y2="551" stroke="#1010a0" stroke-width="1.4"/><line x1="490.4" y1="552" x2="490.4" y2="569.7" stroke="#b01010" stroke-width="1.4"/><line x1="489" y1="569.7" x2="489" y2="588" stroke="#1010a0" stroke-width="1.4"/><line x1="590" y1="569.7" x2="590" y2="588" stroke="#1010a0" stroke-width="1.4"/><rect x="468.5" y="403.5" width="8" height="17.5" fill="none" stroke="#111" stroke-width="1" stroke-dasharray="3,2"/></g></svg>
<div class="a" style="left:140px;top:365px;width:744px;height:212px;overflow:hidden;">
<div class="t" style="left:0;top:5.53px;font-size:14px;letter-spacing:0.416px;color:#232627;">amax: 3056.9 counts</div>
<div class="t" style="left:0;top:18.53px;font-size:14px;letter-spacing:0.39px;color:#232627;">mean: 0.0 counts</div>
<div class="t" style="left:316.2px;top:2.74px;font-size:13px;letter-spacing:1.742px;color:#b01010;">P&lt;A&gt;</div>
<div class="t" style="left:320.7px;top:22.74px;font-size:13px;color:#1010a0;">P</div>
<div class="t" style="left:397.29999999999995px;top:22.74px;font-size:13px;color:#1010a0;">S</div>
<div class="t" style="left:0;top:43.53px;font-size:14px;letter-spacing:0.412px;color:#ffffff;">amax: 864.8 counts</div>
<div class="t" style="left:0;top:56.53px;font-size:14px;letter-spacing:0.369px;color:#ffffff;">mean: -0.0 counts</div>
<div class="t" style="left:334.7px;top:40.74px;font-size:13px;letter-spacing:1.742px;color:#b01010;">P&lt;A&gt;</div>
<div class="t" style="left:333.8px;top:60.74px;font-size:13px;color:#1010a0;">P</div>
<div class="t" style="left:422.70000000000005px;top:40.74px;font-size:13px;letter-spacing:1.786px;color:#b01010;">S&lt;L&gt;</div>
<div class="t" style="left:422.20000000000005px;top:60.74px;font-size:13px;color:#1010a0;">S</div>
<div class="t" style="left:0;top:81.53px;font-size:14px;letter-spacing:0.416px;color:#232627;">amax: 2782.6 counts</div>
<div class="t" style="left:0;top:94.53px;font-size:14px;letter-spacing:0.39px;color:#232627;">mean: 0.0 counts</div>
<div class="t" style="left:347.4px;top:78.74px;font-size:13px;letter-spacing:1.742px;color:#b01010;">P&lt;A&gt;</div>
<div class="t" style="left:346px;top:98.74px;font-size:13px;color:#1010a0;">P</div>
<div class="t" style="left:444.5px;top:78.74px;font-size:13px;letter-spacing:1.786px;color:#b01010;">S&lt;L&gt;</div>
<div class="t" style="left:443px;top:98.74px;font-size:13px;color:#1010a0;">S</div>
<div class="t" style="left:0;top:118.53px;font-size:14px;letter-spacing:0.412px;color:#232627;">amax: 299.7 counts</div>
<div class="t" style="left:0;top:131.53px;font-size:14px;letter-spacing:0.39px;color:#232627;">mean: 0.0 counts</div>
<div class="t" style="left:347.4px;top:115.74px;font-size:13px;letter-spacing:1.742px;color:#b01010;">P&lt;A&gt;</div>
<div class="t" style="left:347px;top:135.74px;font-size:13px;color:#1010a0;">P</div>
<div class="t" style="left:444.9px;top:115.74px;font-size:13px;letter-spacing:1.786px;color:#b01010;">S&lt;L&gt;</div>
<div class="t" style="left:444.9px;top:135.74px;font-size:13px;color:#1010a0;">S</div>
<div class="t" style="left:0;top:155.53px;font-size:14px;letter-spacing:0.412px;color:#232627;">amax: 496.1 counts</div>
<div class="t" style="left:0;top:168.53px;font-size:14px;letter-spacing:0.39px;color:#232627;">mean: 0.0 counts</div>
<div class="t" style="left:348.4px;top:152.74px;font-size:13px;letter-spacing:1.742px;color:#b01010;">P&lt;A&gt;</div>
<div class="t" style="left:349.5px;top:172.74px;font-size:13px;color:#1010a0;">P</div>
<div class="t" style="left:446.70000000000005px;top:152.74px;font-size:13px;letter-spacing:1.742px;color:#e81818;">P&lt;A&gt;</div>
<div class="t" style="left:451px;top:172.74px;font-size:13px;color:#1010a0;">S</div>
<div class="t" style="left:0;top:192.53px;font-size:14px;letter-spacing:0.416px;color:#232627;">amax: 1462.4 counts</div>
<div class="t" style="left:0;top:205.53px;font-size:14px;letter-spacing:0.369px;color:#232627;">mean: -0.0 counts</div>
<div class="t" style="left:352.2px;top:189.74px;font-size:13px;letter-spacing:1.742px;color:#b01010;">P&lt;A&gt;</div>
<div class="t" style="left:351.5px;top:209.74px;font-size:13px;color:#1010a0;">P</div>
<div class="t" style="left:452px;top:209.74px;font-size:13px;color:#1010a0;">S</div>
</div>
<div class="a" style="left:884px;top:365px;width:16px;height:212px;background:repeating-conic-gradient(#e2e2e2 0% 25%, #f6f6f6 0% 50%) 0 0/2px 2px;"></div>
<div class="a" style="left:884px;top:365px;width:16px;height:16px;background:#eff0f1;border-top:1px solid #fff;border-left:1px solid #fff;border-right:1px solid #111;border-bottom:1px solid #111;"></div>
<div class="a" style="left:884px;top:381px;width:16px;height:114px;background:#eff0f1;border-top:1px solid #fff;border-left:1px solid #fff;border-right:1px solid #111;border-bottom:1px solid #111;"></div>
<div class="a" style="left:884px;top:561px;width:16px;height:16px;background:#eff0f1;border-top:1px solid #fff;border-left:1px solid #fff;border-right:1px solid #111;border-bottom:1px solid #111;"></div>
<svg style="left:884px;top:365px" width="16" height="16"><path d="M4 10 L8 6 L12 10 Z" fill="#111"/></svg>
<svg style="left:884px;top:561px" width="16" height="16"><path d="M4 6 L8 10 L12 6 Z" fill="#111"/></svg>
<svg style="left:0;top:0" width="1192" height="827"><line x1="140" y1="579.5" x2="899" y2="579.5" stroke="#111" stroke-width="1.3"/><line x1="142.3" y1="579.5" x2="142.3" y2="589" stroke="#111" stroke-width="1.2"/><line x1="169.2" y1="579.5" x2="169.2" y2="584.5" stroke="#111" stroke-width="1.2"/><line x1="196.2" y1="579.5" x2="196.2" y2="584.5" stroke="#111" stroke-width="1.2"/><line x1="223.1" y1="579.5" x2="223.1" y2="584.5" stroke="#111" stroke-width="1.2"/><line x1="250.1" y1="579.5" x2="250.1" y2="584.5" stroke="#111" stroke-width="1.2"/><line x1="277.0" y1="579.5" x2="277.0" y2="584.5" stroke="#111" stroke-width="1.2"/><line x1="304.0" y1="579.5" x2="304.0" y2="589" stroke="#111" stroke-width="1.2"/><line x1="330.9" y1="579.5" x2="330.9" y2="584.5" stroke="#111" stroke-width="1.2"/><line x1="357.9" y1="579.5" x2="357.9" y2="584.5" stroke="#111" stroke-width="1.2"/><line x1="384.8" y1="579.5" x2="384.8" y2="584.5" stroke="#111" stroke-width="1.2"/><line x1="411.8" y1="579.5" x2="411.8" y2="584.5" stroke="#111" stroke-width="1.2"/><line x1="438.7" y1="579.5" x2="438.7" y2="584.5" stroke="#111" stroke-width="1.2"/><line x1="465.7" y1="579.5" x2="465.7" y2="589" stroke="#111" stroke-width="1.2"/><line x1="492.6" y1="579.5" x2="492.6" y2="584.5" stroke="#111" stroke-width="1.2"/><line x1="519.6" y1="579.5" x2="519.6" y2="584.5" stroke="#111" stroke-width="1.2"/><line x1="546.5" y1="579.5" x2="546.5" y2="584.5" stroke="#111" stroke-width="1.2"/><line x1="573.5" y1="579.5" x2="573.5" y2="584.5" stroke="#111" stroke-width="1.2"/><line x1="600.5" y1="579.5" x2="600.5" y2="584.5" stroke="#111" stroke-width="1.2"/><line x1="627.4" y1="579.5" x2="627.4" y2="589" stroke="#111" stroke-width="1.2"/><line x1="654.4" y1="579.5" x2="654.4" y2="584.5" stroke="#111" stroke-width="1.2"/><line x1="681.3" y1="579.5" x2="681.3" y2="584.5" stroke="#111" stroke-width="1.2"/><line x1="708.3" y1="579.5" x2="708.3" y2="584.5" stroke="#111" stroke-width="1.2"/><line x1="735.2" y1="579.5" x2="735.2" y2="584.5" stroke="#111" stroke-width="1.2"/><line x1="762.2" y1="579.5" x2="762.2" y2="584.5" stroke="#111" stroke-width="1.2"/><line x1="789.1" y1="579.5" x2="789.1" y2="589" stroke="#111" stroke-width="1.2"/><line x1="816.1" y1="579.5" x2="816.1" y2="584.5" stroke="#111" stroke-width="1.2"/><line x1="843.0" y1="579.5" x2="843.0" y2="584.5" stroke="#111" stroke-width="1.2"/><line x1="870.0" y1="579.5" x2="870.0" y2="584.5" stroke="#111" stroke-width="1.2"/><line x1="896.9" y1="579.5" x2="896.9" y2="584.5" stroke="#111" stroke-width="1.2"/></svg>
<div class="a" style="left:274.9px;top:591px;width:55.6px;height:18px;overflow:hidden;"><div class="t" style="left:0;top:1.33px;font-size:14px;letter-spacing:0.487px;color:#31363b;">16:53:00</div></div>
<div class="a" style="left:436.9px;top:591px;width:55.6px;height:18px;overflow:hidden;"><div class="t" style="left:0;top:1.33px;font-size:14px;letter-spacing:0.487px;color:#31363b;">16:54:00</div></div>
<div class="a" style="left:598.6999999999999px;top:591px;width:55.6px;height:18px;overflow:hidden;"><div class="t" style="left:0;top:1.33px;font-size:14px;letter-spacing:0.487px;color:#31363b;">16:55:00</div></div>
<div class="a" style="left:760.4px;top:591px;width:55.6px;height:18px;overflow:hidden;"><div class="t" style="left:0;top:1.33px;font-size:14px;letter-spacing:0.487px;color:#31363b;">16:56:00</div></div>
<div class="t" style="left:303px;top:613.33px;font-size:14px;color:#31363b;letter-spacing:0.394px;transform:translateX(calc(-50% + 0.197px));">2022-03-17</div>
<div class="a" style="left:876px;top:647px;width:19px;height:24px;border:1px solid #c8c8c8;border-right-color:#fff;border-bottom-color:#fff;"></div>
<svg style="left:877px;top:650px" width="18" height="18" viewBox="0 0 18 18">
<defs><linearGradient id="gplug" x1="0" y1="0" x2="1" y2="1"><stop offset="0" stop-color="#fff"/><stop offset="1" stop-color="#b8b8f0"/></linearGradient></defs>
<rect x="3.5" y="4.5" width="9" height="9" rx="2.5" transform="rotate(45 8 9)" fill="url(#gplug)" stroke="#8080d0" stroke-width="0.9"/>
<path d="M3 2 L4 5" stroke="#8080d0" stroke-width="1"/>
<path d="M11 12.5 L13 15 M14 10 L16 12.5" stroke="#f0a020" stroke-width="2.4" stroke-linecap="round"/></svg>
<svg style="left:898px;top:657px" width="16" height="16"><path d="M15 2 L2 15 M15 6 L6 15 M15 10 L10 15" stroke="#a8a8a8" stroke-width="1.2"/><path d="M16 3 L3 16 M16 7 L7 16 M16 11 L11 16" stroke="#fff" stroke-width="1"/></svg>
<div class="a" style="left:498px;top:164px;width:525px;height:69px;background:#ffffdc;border:1px solid #111;"></div>
<div class="t" style="left:502px;top:166.33px;font-size:14px;color:#111;letter-spacing:0.563px;">automatic S pick created by l2autopick@gempa-proc at 2022-03-17 16:54:41</div>
<div class="t" style="left:502px;top:182.33px;font-size:14px;color:#111;letter-spacing:0.23px;">method: L2-AIC-GRID</div>
<div class="t" style="left:502px;top:198.33px;font-size:14px;color:#111;letter-spacing:0.457px;">filter: ITAPER(2)&gt;&gt;BW(3,3,20)</div>
<div class="t" style="left:502px;top:214.33px;font-size:14px;color:#111;letter-spacing:0.537px;">arrival: yes</div>
<svg style="left:497px;top:148px" width="14" height="18" overflow="visible"><path d="M0.2 0.2 L0.2 11 L2.8 8.6 L5 13.8 L7.2 12.8 L5 7.8 L8.6 7.8 Z" fill="#000" stroke="#fff" stroke-width="0.9" stroke-linejoin="round" paint-order="stroke"/></svg>
</body></html>
